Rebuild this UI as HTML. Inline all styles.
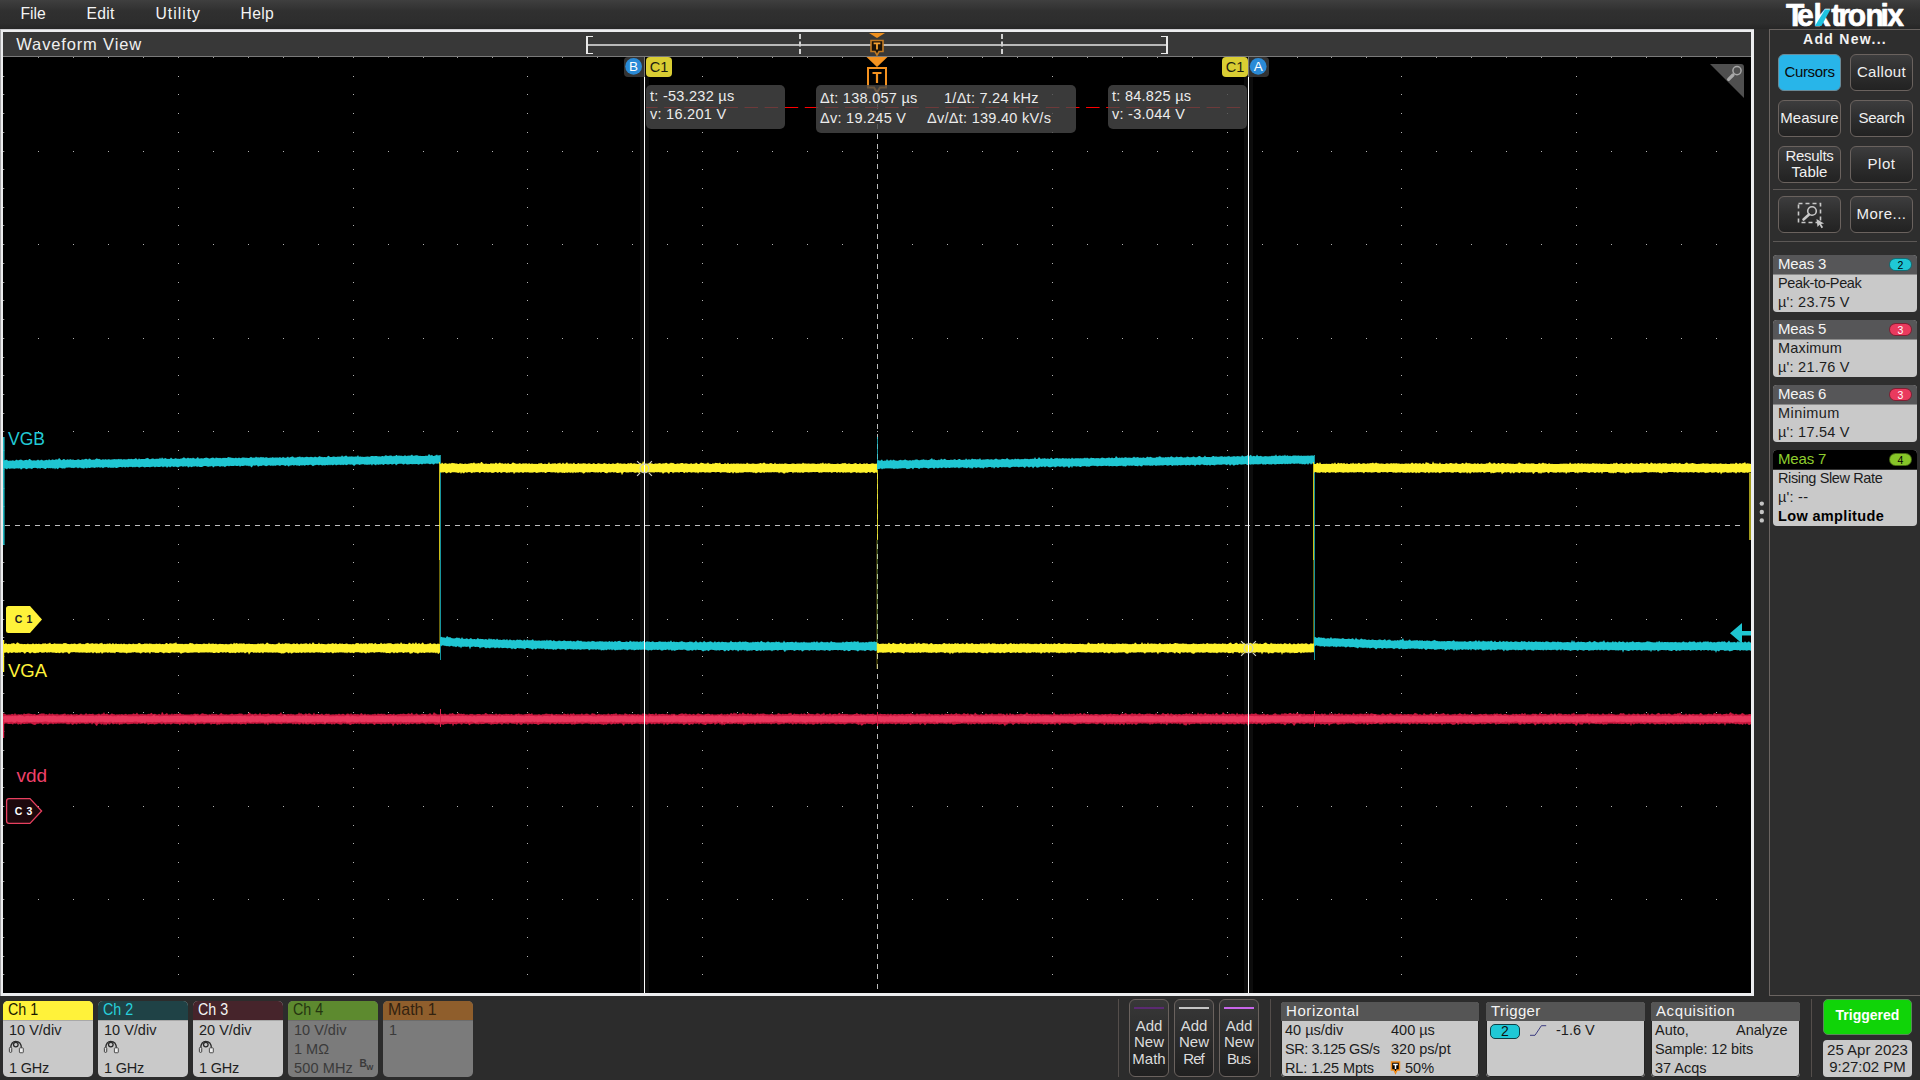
<!DOCTYPE html>
<html><head><meta charset="utf-8"><title>Scope</title>
<style>
*{box-sizing:border-box;margin:0;padding:0}
html,body{width:1920px;height:1080px;overflow:hidden;background:#2c2c2c}
body{position:relative;font-family:"Liberation Sans",sans-serif;color:#fff}
.abs{position:absolute}
#menubar{position:absolute;left:0;top:0;width:1920px;height:29px;background:linear-gradient(#3f3f3f,#303030 38%,#2d2d2d 80%,#262626)}
#menubar span{position:absolute;top:4.2px;font-size:15.7px;line-height:20px;color:#f4f4f4}
#wvframe{position:absolute;left:0;top:29px;width:1754px;height:967px;background:#ecedef;border-top:1px solid #cfcfd2;border-left:1px solid #a9a9ab}
#wvtitle{position:absolute;left:3px;top:32px;width:1748px;height:24px;background:#383838}
#wvtitleline{position:absolute;left:3px;top:56px;width:1748px;height:1px;background:#7a7a7a}
#wvtitle span{position:absolute;left:13.3px;top:2px;font-size:16.5px;line-height:20px;color:#f0f0f0;letter-spacing:.85px}
#plot{position:absolute;left:3px;top:57px;width:1748px;height:936px;background:#000;overflow:hidden}
#rpanel{position:absolute;left:1769px;top:29px;width:151px;height:967px;border-left:1px solid #6a6461;border-top:1px solid #6a6461;border-bottom:1px solid #6a6461;background:#2e2e2e}
.btn{position:absolute;width:63px;height:37px;border:1px solid #6a625e;border-radius:6px;background:linear-gradient(#3d3d3e,#2f2f2f 45%,#222);color:#f0f0f0;font-size:15px;text-align:center;line-height:34px}
.btn.two{line-height:16px;padding-top:.5px}
.btn.on{background:#28b5e9;color:#0a0a0a;border-color:#6a8a98}
.sep{position:absolute;left:1773px;width:144px;height:1px;background:#5c5856}
.meas{position:absolute;left:1773px;width:144px;border-radius:4px;background:#c9c9c9;overflow:hidden;color:#1c1c1c;font-size:14.5px}
.meas .h{position:absolute;left:0;top:0;width:144px;height:20px;background:#565658;color:#f4f4f4;border-bottom:1px solid #8c8c8c}
.meas .h span{position:absolute;left:5px;top:0;line-height:18px;font-size:15px;letter-spacing:-.15px}
.meas .pill{position:absolute;left:116px;top:3px;width:23px;height:13px;border-radius:6.5px;border:1px solid rgba(0,0,0,.45);font-size:10.5px;line-height:12px;text-align:center;color:#000}
.meas .l{position:absolute;left:5px;line-height:18px;white-space:nowrap}
.chb{position:absolute;top:1001px;width:90px;height:76px;border-radius:5px;background:#c9c9c9;overflow:hidden;color:#1e1e1e;font-size:14.5px}
.chb .h{position:absolute;left:0;top:0;width:90px;height:19px}
.chb .h span{position:absolute;left:5.4px;top:-1px;line-height:19px;font-size:16.6px;transform:scaleX(.86);transform-origin:0 0;white-space:nowrap}
.chb .hl{position:absolute;left:0;top:19px;width:90px;height:1px;background:#a8a8a8}
.chb .l{position:absolute;left:6px;line-height:18px;white-space:nowrap}
.chb.dim{background:#7b7b7b;color:#3a3a3a}
.chb.dim .hl{background:#6c6c6c}
.addb{position:absolute;top:999px;width:40px;height:78px;border:1px solid #6a625e;border-radius:6px;background:linear-gradient(#383838,#2c2c2c 50%,#202020);color:#dcdcdc;font-size:15px;text-align:center;line-height:16.6px;padding-top:17.6px}
.addb i{position:absolute;left:4px;top:7px;width:30px;height:2px;display:block}
.vsep{position:absolute;top:999px;width:1px;height:78px;background:#544e4b}
.sb{position:absolute;top:1002px;height:75px;border-radius:4px;background:#c9c9c9;overflow:hidden;outline:1px solid #242424;outline-offset:-1px;color:#1c1c1c;font-size:14.5px}
.sb .h{position:absolute;left:0;top:0;width:100%;height:19px;background:#555;color:#f4f4f4}
.sb .h span{position:absolute;left:5px;top:0;line-height:18px;font-size:15px;letter-spacing:.6px}
.sb .l{position:absolute;line-height:18px;white-space:nowrap}
.ro{position:absolute;border-radius:5px;background:rgba(72,72,72,.8);color:#ececec;font-size:14.5px;letter-spacing:.27px;white-space:nowrap}
.ro span{position:absolute;line-height:18px}
</style></head><body>
<div id="menubar">
<span style="left:20.5px">File</span><span style="left:86.5px;letter-spacing:.3px">Edit</span><span style="left:155.5px;letter-spacing:1px">Utility</span><span style="left:240.5px;letter-spacing:.35px">Help</span>
</div>
<!-- logo -->
<svg class="abs" style="left:1780px;top:0" width="130" height="29" viewBox="1780 0 130 29">
<g font-family="Liberation Sans" font-weight="bold" font-size="30" fill="#fff" stroke="#fff" stroke-width=".7" stroke-linejoin="round"><text transform="translate(1786.0,26) scale(1,1.068)">T</text><text transform="translate(1796.9,26) scale(1,1.068)">e</text><text transform="translate(1813.5,26) scale(1,1.068)">k</text><text transform="translate(1831.2,26) scale(1,1.068)">t</text><text transform="translate(1838.5,26) scale(1,1.068)">r</text><text transform="translate(1847.7,26) scale(1,1.068)">o</text><text transform="translate(1865.4,26) scale(1,1.068)">n</text><text transform="translate(1880.4,26) scale(1,1.068)">i</text><text transform="translate(1887.3,26) scale(1,1.068)">x</text></g>
<polygon points="1814.9,26 1821.4,26 1830.4,9.5 1825,9.5" fill="#1fc3e0"/>
</svg>
<div id="wvframe"></div>
<div id="wvtitle"><span>Waveform View</span></div>
<div id="wvtitleline"></div>
<div id="rpanel"></div>
<div class="abs" style="left:1770px;top:31px;width:150px;text-align:center;font-weight:bold;font-size:14px;line-height:16px;letter-spacing:1.3px;color:#f2f2f2">Add New...</div>
<div class="btn on" style="left:1778px;top:54px"><span style="letter-spacing:-.35px">Cursors</span></div>
<div class="btn" style="left:1850px;top:54px"><span style="letter-spacing:.35px">Callout</span></div>
<div class="btn" style="left:1778px;top:100px">Measure</div>
<div class="btn" style="left:1850px;top:100px"><span style="letter-spacing:-.25px">Search</span></div>
<div class="btn two" style="left:1778px;top:146px"><span style="letter-spacing:-.3px">Results</span><br>Table</div>
<div class="btn" style="left:1850px;top:146px"><span style="letter-spacing:.5px">Plot</span></div>
<div class="sep" style="top:189px"></div>
<div class="btn" style="left:1778px;top:196px"><svg width="61" height="35" viewBox="0 0 61 35" style="position:absolute;left:0;top:0">
<rect x="19.5" y="6.5" width="22" height="19" fill="none" stroke="#c8c8c8" stroke-width="1.6" stroke-dasharray="4 3"/>
<circle cx="33" cy="14" r="4.3" fill="none" stroke="#c8c8c8" stroke-width="1.6"/>
<line x1="30" y1="17.5" x2="24.5" y2="22.5" stroke="#c8c8c8" stroke-width="2.6" stroke-linecap="round"/>
<path d="M37.5 22 l1 8 l2-2.2 l2 3.4 l1.6-.9 l-2-3.4 l3-.4 z" fill="#c8c8c8"/>
</svg></div>
<div class="btn" style="left:1850px;top:196px"><span style="letter-spacing:.45px">More...</span></div>
<div class="sep" style="top:241px"></div>

<div class="meas" style="top:255px;height:57px"><div class="h"><span>Meas 3</span></div><div class="pill" style="background:#1fc8d6">2</div>
<div class="l" style="top:19.3px;letter-spacing:-.37px">Peak-to-Peak</div><div class="l" style="top:38.4px;letter-spacing:.23px">µ': 23.75 V</div></div>
<div class="meas" style="top:320px;height:57px"><div class="h"><span>Meas 5</span></div><div class="pill" style="background:#ea3a5e;color:#fff">3</div>
<div class="l" style="top:19.3px;letter-spacing:.18px">Maximum</div><div class="l" style="top:38.4px;letter-spacing:.23px">µ': 21.76 V</div></div>
<div class="meas" style="top:385px;height:57px"><div class="h"><span>Meas 6</span></div><div class="pill" style="background:#ea3a5e;color:#fff">3</div>
<div class="l" style="top:19.3px;letter-spacing:.43px">Minimum</div><div class="l" style="top:38.4px;letter-spacing:.23px">µ': 17.54 V</div></div>
<div class="meas" style="top:450px;height:76px"><div class="h" style="background:#000;color:#8fcd2e;border-bottom-color:#333"><span>Meas 7</span></div><div class="pill" style="background:#86c428">4</div>
<div class="l" style="top:19.3px;letter-spacing:-.38px">Rising Slew Rate</div><div class="l" style="top:38.4px;letter-spacing:.23px">µ': --</div><div class="l" style="top:57.4px;font-weight:bold;color:#000;letter-spacing:.35px">Low amplitude</div></div>
<svg class="abs" style="left:1757px;top:499px" width="10" height="26"><circle cx="4.8" cy="4.6" r="2.2" fill="#c4c4c4"/><circle cx="4.8" cy="13" r="2.2" fill="#c4c4c4"/><circle cx="4.8" cy="21.4" r="2.2" fill="#c4c4c4"/></svg>
<svg class="abs" style="left:0;top:0" width="1920" height="1080" viewBox="0 0 1920 1080">
<defs><clipPath id="pc"><rect x="3" y="57" width="1748" height="936"/></clipPath></defs>
<rect x="3" y="57" width="1748" height="936" fill="#000"/>
<g clip-path="url(#pc)">
<path d="M38 151.5h1M73 151.5h1M108 151.5h1M143 151.5h1M178 151.5h1M213 151.5h1M248 151.5h1M283 151.5h1M318 151.5h1M353 151.5h1M388 151.5h1M423 151.5h1M457 151.5h1M492 151.5h1M527 151.5h1M562 151.5h1M597 151.5h1M632 151.5h1M667 151.5h1M702 151.5h1M737 151.5h1M772 151.5h1M807 151.5h1M842 151.5h1M877 151.5h1M912 151.5h1M947 151.5h1M982 151.5h1M1017 151.5h1M1052 151.5h1M1087 151.5h1M1122 151.5h1M1157 151.5h1M1192 151.5h1M1227 151.5h1M1262 151.5h1M1297 151.5h1M1331 151.5h1M1366 151.5h1M1401 151.5h1M1436 151.5h1M1471 151.5h1M1506 151.5h1M1541 151.5h1M1576 151.5h1M1611 151.5h1M1646 151.5h1M1681 151.5h1M1716 151.5h1M38 244.5h1M73 244.5h1M108 244.5h1M143 244.5h1M178 244.5h1M213 244.5h1M248 244.5h1M283 244.5h1M318 244.5h1M353 244.5h1M388 244.5h1M423 244.5h1M457 244.5h1M492 244.5h1M527 244.5h1M562 244.5h1M597 244.5h1M632 244.5h1M667 244.5h1M702 244.5h1M737 244.5h1M772 244.5h1M807 244.5h1M842 244.5h1M877 244.5h1M912 244.5h1M947 244.5h1M982 244.5h1M1017 244.5h1M1052 244.5h1M1087 244.5h1M1122 244.5h1M1157 244.5h1M1192 244.5h1M1227 244.5h1M1262 244.5h1M1297 244.5h1M1331 244.5h1M1366 244.5h1M1401 244.5h1M1436 244.5h1M1471 244.5h1M1506 244.5h1M1541 244.5h1M1576 244.5h1M1611 244.5h1M1646 244.5h1M1681 244.5h1M1716 244.5h1M38 338.5h1M73 338.5h1M108 338.5h1M143 338.5h1M178 338.5h1M213 338.5h1M248 338.5h1M283 338.5h1M318 338.5h1M353 338.5h1M388 338.5h1M423 338.5h1M457 338.5h1M492 338.5h1M527 338.5h1M562 338.5h1M597 338.5h1M632 338.5h1M667 338.5h1M702 338.5h1M737 338.5h1M772 338.5h1M807 338.5h1M842 338.5h1M877 338.5h1M912 338.5h1M947 338.5h1M982 338.5h1M1017 338.5h1M1052 338.5h1M1087 338.5h1M1122 338.5h1M1157 338.5h1M1192 338.5h1M1227 338.5h1M1262 338.5h1M1297 338.5h1M1331 338.5h1M1366 338.5h1M1401 338.5h1M1436 338.5h1M1471 338.5h1M1506 338.5h1M1541 338.5h1M1576 338.5h1M1611 338.5h1M1646 338.5h1M1681 338.5h1M1716 338.5h1M38 431.5h1M73 431.5h1M108 431.5h1M143 431.5h1M178 431.5h1M213 431.5h1M248 431.5h1M283 431.5h1M318 431.5h1M353 431.5h1M388 431.5h1M423 431.5h1M457 431.5h1M492 431.5h1M527 431.5h1M562 431.5h1M597 431.5h1M632 431.5h1M667 431.5h1M702 431.5h1M737 431.5h1M772 431.5h1M807 431.5h1M842 431.5h1M877 431.5h1M912 431.5h1M947 431.5h1M982 431.5h1M1017 431.5h1M1052 431.5h1M1087 431.5h1M1122 431.5h1M1157 431.5h1M1192 431.5h1M1227 431.5h1M1262 431.5h1M1297 431.5h1M1331 431.5h1M1366 431.5h1M1401 431.5h1M1436 431.5h1M1471 431.5h1M1506 431.5h1M1541 431.5h1M1576 431.5h1M1611 431.5h1M1646 431.5h1M1681 431.5h1M1716 431.5h1M38 619.5h1M73 619.5h1M108 619.5h1M143 619.5h1M178 619.5h1M213 619.5h1M248 619.5h1M283 619.5h1M318 619.5h1M353 619.5h1M388 619.5h1M423 619.5h1M457 619.5h1M492 619.5h1M527 619.5h1M562 619.5h1M597 619.5h1M632 619.5h1M667 619.5h1M702 619.5h1M737 619.5h1M772 619.5h1M807 619.5h1M842 619.5h1M877 619.5h1M912 619.5h1M947 619.5h1M982 619.5h1M1017 619.5h1M1052 619.5h1M1087 619.5h1M1122 619.5h1M1157 619.5h1M1192 619.5h1M1227 619.5h1M1262 619.5h1M1297 619.5h1M1331 619.5h1M1366 619.5h1M1401 619.5h1M1436 619.5h1M1471 619.5h1M1506 619.5h1M1541 619.5h1M1576 619.5h1M1611 619.5h1M1646 619.5h1M1681 619.5h1M1716 619.5h1M38 712.5h1M73 712.5h1M108 712.5h1M143 712.5h1M178 712.5h1M213 712.5h1M248 712.5h1M283 712.5h1M318 712.5h1M353 712.5h1M388 712.5h1M423 712.5h1M457 712.5h1M492 712.5h1M527 712.5h1M562 712.5h1M597 712.5h1M632 712.5h1M667 712.5h1M702 712.5h1M737 712.5h1M772 712.5h1M807 712.5h1M842 712.5h1M877 712.5h1M912 712.5h1M947 712.5h1M982 712.5h1M1017 712.5h1M1052 712.5h1M1087 712.5h1M1122 712.5h1M1157 712.5h1M1192 712.5h1M1227 712.5h1M1262 712.5h1M1297 712.5h1M1331 712.5h1M1366 712.5h1M1401 712.5h1M1436 712.5h1M1471 712.5h1M1506 712.5h1M1541 712.5h1M1576 712.5h1M1611 712.5h1M1646 712.5h1M1681 712.5h1M1716 712.5h1M38 806.5h1M73 806.5h1M108 806.5h1M143 806.5h1M178 806.5h1M213 806.5h1M248 806.5h1M283 806.5h1M318 806.5h1M353 806.5h1M388 806.5h1M423 806.5h1M457 806.5h1M492 806.5h1M527 806.5h1M562 806.5h1M597 806.5h1M632 806.5h1M667 806.5h1M702 806.5h1M737 806.5h1M772 806.5h1M807 806.5h1M842 806.5h1M877 806.5h1M912 806.5h1M947 806.5h1M982 806.5h1M1017 806.5h1M1052 806.5h1M1087 806.5h1M1122 806.5h1M1157 806.5h1M1192 806.5h1M1227 806.5h1M1262 806.5h1M1297 806.5h1M1331 806.5h1M1366 806.5h1M1401 806.5h1M1436 806.5h1M1471 806.5h1M1506 806.5h1M1541 806.5h1M1576 806.5h1M1611 806.5h1M1646 806.5h1M1681 806.5h1M1716 806.5h1M38 899.5h1M73 899.5h1M108 899.5h1M143 899.5h1M178 899.5h1M213 899.5h1M248 899.5h1M283 899.5h1M318 899.5h1M353 899.5h1M388 899.5h1M423 899.5h1M457 899.5h1M492 899.5h1M527 899.5h1M562 899.5h1M597 899.5h1M632 899.5h1M667 899.5h1M702 899.5h1M737 899.5h1M772 899.5h1M807 899.5h1M842 899.5h1M877 899.5h1M912 899.5h1M947 899.5h1M982 899.5h1M1017 899.5h1M1052 899.5h1M1087 899.5h1M1122 899.5h1M1157 899.5h1M1192 899.5h1M1227 899.5h1M1262 899.5h1M1297 899.5h1M1331 899.5h1M1366 899.5h1M1401 899.5h1M1436 899.5h1M1471 899.5h1M1506 899.5h1M1541 899.5h1M1576 899.5h1M1611 899.5h1M1646 899.5h1M1681 899.5h1M1716 899.5h1M178 76.5h1M178 94.5h1M178 113.5h1M178 132.5h1M178 169.5h1M178 188.5h1M178 207.5h1M178 225.5h1M178 263.5h1M178 282.5h1M178 300.5h1M178 319.5h1M178 357.5h1M178 375.5h1M178 394.5h1M178 413.5h1M178 450.5h1M178 469.5h1M178 488.5h1M178 506.5h1M178 544.5h1M178 562.5h1M178 581.5h1M178 600.5h1M178 637.5h1M178 656.5h1M178 675.5h1M178 693.5h1M178 731.5h1M178 750.5h1M178 768.5h1M178 787.5h1M178 825.5h1M178 843.5h1M178 862.5h1M178 881.5h1M178 918.5h1M178 937.5h1M178 956.5h1M178 974.5h1M353 76.5h1M353 94.5h1M353 113.5h1M353 132.5h1M353 169.5h1M353 188.5h1M353 207.5h1M353 225.5h1M353 263.5h1M353 282.5h1M353 300.5h1M353 319.5h1M353 357.5h1M353 375.5h1M353 394.5h1M353 413.5h1M353 450.5h1M353 469.5h1M353 488.5h1M353 506.5h1M353 544.5h1M353 562.5h1M353 581.5h1M353 600.5h1M353 637.5h1M353 656.5h1M353 675.5h1M353 693.5h1M353 731.5h1M353 750.5h1M353 768.5h1M353 787.5h1M353 825.5h1M353 843.5h1M353 862.5h1M353 881.5h1M353 918.5h1M353 937.5h1M353 956.5h1M353 974.5h1M527 76.5h1M527 94.5h1M527 113.5h1M527 132.5h1M527 169.5h1M527 188.5h1M527 207.5h1M527 225.5h1M527 263.5h1M527 282.5h1M527 300.5h1M527 319.5h1M527 357.5h1M527 375.5h1M527 394.5h1M527 413.5h1M527 450.5h1M527 469.5h1M527 488.5h1M527 506.5h1M527 544.5h1M527 562.5h1M527 581.5h1M527 600.5h1M527 637.5h1M527 656.5h1M527 675.5h1M527 693.5h1M527 731.5h1M527 750.5h1M527 768.5h1M527 787.5h1M527 825.5h1M527 843.5h1M527 862.5h1M527 881.5h1M527 918.5h1M527 937.5h1M527 956.5h1M527 974.5h1M702 76.5h1M702 94.5h1M702 113.5h1M702 132.5h1M702 169.5h1M702 188.5h1M702 207.5h1M702 225.5h1M702 263.5h1M702 282.5h1M702 300.5h1M702 319.5h1M702 357.5h1M702 375.5h1M702 394.5h1M702 413.5h1M702 450.5h1M702 469.5h1M702 488.5h1M702 506.5h1M702 544.5h1M702 562.5h1M702 581.5h1M702 600.5h1M702 637.5h1M702 656.5h1M702 675.5h1M702 693.5h1M702 731.5h1M702 750.5h1M702 768.5h1M702 787.5h1M702 825.5h1M702 843.5h1M702 862.5h1M702 881.5h1M702 918.5h1M702 937.5h1M702 956.5h1M702 974.5h1M1052 76.5h1M1052 94.5h1M1052 113.5h1M1052 132.5h1M1052 169.5h1M1052 188.5h1M1052 207.5h1M1052 225.5h1M1052 263.5h1M1052 282.5h1M1052 300.5h1M1052 319.5h1M1052 357.5h1M1052 375.5h1M1052 394.5h1M1052 413.5h1M1052 450.5h1M1052 469.5h1M1052 488.5h1M1052 506.5h1M1052 544.5h1M1052 562.5h1M1052 581.5h1M1052 600.5h1M1052 637.5h1M1052 656.5h1M1052 675.5h1M1052 693.5h1M1052 731.5h1M1052 750.5h1M1052 768.5h1M1052 787.5h1M1052 825.5h1M1052 843.5h1M1052 862.5h1M1052 881.5h1M1052 918.5h1M1052 937.5h1M1052 956.5h1M1052 974.5h1M1227 76.5h1M1227 94.5h1M1227 113.5h1M1227 132.5h1M1227 169.5h1M1227 188.5h1M1227 207.5h1M1227 225.5h1M1227 263.5h1M1227 282.5h1M1227 300.5h1M1227 319.5h1M1227 357.5h1M1227 375.5h1M1227 394.5h1M1227 413.5h1M1227 450.5h1M1227 469.5h1M1227 488.5h1M1227 506.5h1M1227 544.5h1M1227 562.5h1M1227 581.5h1M1227 600.5h1M1227 637.5h1M1227 656.5h1M1227 675.5h1M1227 693.5h1M1227 731.5h1M1227 750.5h1M1227 768.5h1M1227 787.5h1M1227 825.5h1M1227 843.5h1M1227 862.5h1M1227 881.5h1M1227 918.5h1M1227 937.5h1M1227 956.5h1M1227 974.5h1M1401 76.5h1M1401 94.5h1M1401 113.5h1M1401 132.5h1M1401 169.5h1M1401 188.5h1M1401 207.5h1M1401 225.5h1M1401 263.5h1M1401 282.5h1M1401 300.5h1M1401 319.5h1M1401 357.5h1M1401 375.5h1M1401 394.5h1M1401 413.5h1M1401 450.5h1M1401 469.5h1M1401 488.5h1M1401 506.5h1M1401 544.5h1M1401 562.5h1M1401 581.5h1M1401 600.5h1M1401 637.5h1M1401 656.5h1M1401 675.5h1M1401 693.5h1M1401 731.5h1M1401 750.5h1M1401 768.5h1M1401 787.5h1M1401 825.5h1M1401 843.5h1M1401 862.5h1M1401 881.5h1M1401 918.5h1M1401 937.5h1M1401 956.5h1M1401 974.5h1M1576 76.5h1M1576 94.5h1M1576 113.5h1M1576 132.5h1M1576 169.5h1M1576 188.5h1M1576 207.5h1M1576 225.5h1M1576 263.5h1M1576 282.5h1M1576 300.5h1M1576 319.5h1M1576 357.5h1M1576 375.5h1M1576 394.5h1M1576 413.5h1M1576 450.5h1M1576 469.5h1M1576 488.5h1M1576 506.5h1M1576 544.5h1M1576 562.5h1M1576 581.5h1M1576 600.5h1M1576 637.5h1M1576 656.5h1M1576 675.5h1M1576 693.5h1M1576 731.5h1M1576 750.5h1M1576 768.5h1M1576 787.5h1M1576 825.5h1M1576 843.5h1M1576 862.5h1M1576 881.5h1M1576 918.5h1M1576 937.5h1M1576 956.5h1M1576 974.5h1" stroke="#b4b4b4" stroke-width="1" fill="none"/>
<path d="M38 57.5h1M73 57.5h1M108 57.5h1M143 57.5h1M178 57.5h1M213 57.5h1M248 57.5h1M283 57.5h1M318 57.5h1M353 57.5h1M388 57.5h1M423 57.5h1M457 57.5h1M492 57.5h1M527 57.5h1M562 57.5h1M597 57.5h1M632 57.5h1M667 57.5h1M702 57.5h1M737 57.5h1M772 57.5h1M807 57.5h1M842 57.5h1M877 57.5h1M912 57.5h1M947 57.5h1M982 57.5h1M1017 57.5h1M1052 57.5h1M1087 57.5h1M1122 57.5h1M1157 57.5h1M1192 57.5h1M1227 57.5h1M1262 57.5h1M1297 57.5h1M1331 57.5h1M1366 57.5h1M1401 57.5h1M1436 57.5h1M1471 57.5h1M1506 57.5h1M1541 57.5h1M1576 57.5h1M1611 57.5h1M1646 57.5h1M1681 57.5h1M1716 57.5h1M3 76.5h1.3M3 94.5h1.3M3 113.5h1.3M3 132.5h1.3M3 151.5h1.3M3 169.5h1.3M3 188.5h1.3M3 207.5h1.3M3 225.5h1.3M3 244.5h1.3M3 263.5h1.3M3 282.5h1.3M3 300.5h1.3M3 319.5h1.3M3 338.5h1.3M3 357.5h1.3M3 375.5h1.3M3 394.5h1.3M3 413.5h1.3M3 431.5h1.3M3 450.5h1.3M3 469.5h1.3M3 488.5h1.3M3 506.5h1.3M3 525.5h1.3M3 544.5h1.3M3 562.5h1.3M3 581.5h1.3M3 600.5h1.3M3 619.5h1.3M3 637.5h1.3M3 656.5h1.3M3 675.5h1.3M3 693.5h1.3M3 712.5h1.3M3 731.5h1.3M3 750.5h1.3M3 768.5h1.3M3 787.5h1.3M3 806.5h1.3M3 825.5h1.3M3 843.5h1.3M3 862.5h1.3M3 881.5h1.3M3 899.5h1.3M3 918.5h1.3M3 937.5h1.3M3 956.5h1.3M3 974.5h1.3" stroke="#9a9a9a" stroke-width="1" fill="none"/>
<rect x="640" y="77" width="9" height="916" fill="#0c0c0c"/><rect x="1244" y="77" width="9" height="916" fill="#0c0c0c"/>
<path d="M5 525.5H1741" stroke="#bdbdbd" stroke-width="1" stroke-dasharray="5 5" fill="none"/>
<path d="M877.5 94V993" stroke="#bdbdbd" stroke-width="1" stroke-dasharray="5 5" fill="none"/>
<path d="M3 460.8L4 460.3L5 460.3L6 459.8L7 459.8L8 460.7L9 460.7L10 460.5L11 460.7L12 460.6L13 460.3L14 460.8L15 460.8L16 459.8L17 459.8L18 460.4L19 460.1L20 459.8L21 459.5L22 460.0L23 460.6L24 460.4L25 460.1L26 460.1L27 459.8L28 460.5L29 459.1L30 459.1L31 459.9L32 460.4L33 460.4L34 460.2L35 460.6L36 460.5L37 460.3L38 459.6L39 460.3L40 460.5L41 459.7L42 459.7L43 460.4L44 460.4L45 460.3L46 460.1L47 459.8L48 460.4L49 458.9L50 460.1L51 460.2L52 459.4L53 459.6L54 460.0L55 459.8L56 459.3L57 459.5L58 459.5L59 458.0L60 458.7L61 460.1L62 460.3L63 459.3L64 459.0L65 459.4L66 460.3L67 459.2L68 459.4L69 459.8L70 459.3L71 459.3L72 459.9L73 459.2L74 460.1L75 459.9L76 460.1L77 459.8L78 459.2L79 459.5L80 459.9L81 459.9L82 459.2L83 459.5L84 459.6L85 458.9L86 458.7L87 459.1L88 459.8L89 458.5L90 458.8L91 459.4L92 459.9L93 459.6L94 459.7L95 459.5L96 458.8L97 458.3L98 459.2L99 458.8L100 459.3L101 459.7L102 459.8L103 459.1L104 459.8L105 459.3L106 459.3L107 459.8L108 459.3L109 459.2L110 459.6L111 459.8L112 459.3L113 459.6L114 459.0L115 459.2L116 459.3L117 459.3L118 459.2L119 458.8L120 459.6L121 458.8L122 459.6L123 459.6L124 458.9L125 459.5L126 459.3L127 459.5L128 459.1L129 458.8L130 459.2L131 458.8L132 459.0L133 459.3L134 459.1L135 458.7L136 458.1L137 459.3L138 459.4L139 458.3L140 459.3L141 458.9L142 459.1L143 458.9L144 459.1L145 459.0L146 458.3L147 458.2L148 457.8L149 459.0L150 459.3L151 459.0L152 458.6L153 458.5L154 458.7L155 459.2L156 458.6L157 459.1L158 458.6L159 459.1L160 457.6L161 459.0L162 457.2L163 458.5L164 458.8L165 458.1L166 458.3L167 459.0L168 458.7L169 458.9L170 458.7L171 457.4L172 458.6L173 458.9L174 458.7L175 458.6L176 458.1L177 459.0L178 458.5L179 458.9L180 458.8L181 458.6L182 458.6L183 457.8L184 457.3L185 457.9L186 458.4L187 458.3L188 457.6L189 458.3L190 458.2L191 457.9L192 458.4L193 457.4L194 458.3L195 458.4L196 458.8L197 457.7L198 457.0L199 458.8L200 458.2L201 458.6L202 457.9L203 458.7L204 458.1L205 458.1L206 457.6L207 457.8L208 458.1L209 458.4L210 458.5L211 457.9L212 457.8L213 457.4L214 458.0L215 458.5L216 457.2L217 458.0L218 457.8L219 458.3L220 457.7L221 458.3L222 458.2L223 457.8L224 457.9L225 457.8L226 458.0L227 458.1L228 456.9L229 457.2L230 457.5L231 457.6L232 458.0L233 457.7L234 458.2L235 458.1L236 457.5L237 458.2L238 458.1L239 457.6L240 458.1L241 458.3L242 457.5L243 457.4L244 457.5L245 457.7L246 457.8L247 457.7L248 458.0L249 458.1L250 457.5L251 456.7L252 457.5L253 457.8L254 457.5L255 457.7L256 456.5L257 457.5L258 457.2L259 457.5L260 457.6L261 456.8L262 457.6L263 457.1L264 457.6L265 457.8L266 457.1L267 457.4L268 457.7L269 457.9L270 457.6L271 457.7L272 457.4L273 457.0L274 457.9L275 457.3L276 457.8L277 457.2L278 457.8L279 457.5L280 457.0L281 457.8L282 457.8L283 456.7L284 457.4L285 457.8L286 457.7L287 457.2L288 456.6L289 457.7L290 457.3L291 457.0L292 456.4L293 456.6L294 457.4L295 457.6L296 457.4L297 457.3L298 456.8L299 457.0L300 456.2L301 457.4L302 456.7L303 457.3L304 457.2L305 457.3L306 456.7L307 456.8L308 456.9L309 457.3L310 457.0L311 456.7L312 457.1L313 457.3L314 457.2L315 456.4L316 457.0L317 457.2L318 457.2L319 456.3L320 456.2L321 457.0L322 456.7L323 457.2L324 456.9L325 456.9L326 457.3L327 457.1L328 455.8L329 456.0L330 456.9L331 457.1L332 456.9L333 456.6L334 456.6L335 456.8L336 457.0L337 456.7L338 456.6L339 456.8L340 456.6L341 456.7L342 455.2L343 456.5L344 456.4L345 456.1L346 455.6L347 456.1L348 456.9L349 456.3L350 456.7L351 456.2L352 456.6L353 456.6L354 456.7L355 456.4L356 456.6L357 456.6L358 455.0L359 456.9L360 456.2L361 456.8L362 456.8L363 456.8L364 456.9L365 456.8L366 456.7L367 456.6L368 456.6L369 456.8L370 456.8L371 456.1L372 455.9L373 455.9L374 456.2L375 456.1L376 456.1L377 455.9L378 456.5L379 456.2L380 456.5L381 456.4L382 456.1L383 456.0L384 456.4L385 455.5L386 455.3L387 455.8L388 455.9L389 455.7L390 455.4L391 455.4L392 455.7L393 456.5L394 455.6L395 456.3L396 455.1L397 455.1L398 456.2L399 454.9L400 456.2L401 455.3L402 456.3L403 455.7L404 456.2L405 454.8L406 456.3L407 455.7L408 455.7L409 455.6L410 455.8L411 455.2L412 454.6L413 455.8L414 455.8L415 455.5L416 455.2L417 455.2L418 455.6L419 456.0L420 455.7L421 456.1L422 456.1L423 456.0L424 455.9L425 456.1L426 455.4L427 456.0L428 455.5L429 453.8L430 455.3L431 455.6L432 454.7L433 456.0L434 455.9L435 455.6L436 455.2L437 454.6L438 455.7L439 455.1L440 455.4L440 463.7L439 463.6L438 463.4L437 463.7L436 463.5L435 463.4L434 464.6L433 464.5L432 463.4L431 464.0L430 464.2L429 464.0L428 463.6L427 463.8L426 463.5L425 464.3L424 463.5L423 463.9L422 464.4L421 463.9L420 463.8L419 464.8L418 464.6L417 464.1L416 464.0L415 464.2L414 463.9L413 464.3L412 464.2L411 463.9L410 464.1L409 464.5L408 464.2L407 464.8L406 463.8L405 463.8L404 464.4L403 464.5L402 463.8L401 463.8L400 463.7L399 463.8L398 463.9L397 464.6L396 465.5L395 463.8L394 464.1L393 464.3L392 464.7L391 464.0L390 464.1L389 464.4L388 464.4L387 464.5L386 464.0L385 464.1L384 464.7L383 464.9L382 463.9L381 464.4L380 464.6L379 464.5L378 464.9L377 464.0L376 465.4L375 464.7L374 464.5L373 464.1L372 465.7L371 464.3L370 464.5L369 464.8L368 464.4L367 465.1L366 464.5L365 464.7L364 464.4L363 464.1L362 464.5L361 464.3L360 464.9L359 464.7L358 464.3L357 464.6L356 464.3L355 465.3L354 466.0L353 465.1L352 464.5L351 464.5L350 464.7L349 464.3L348 464.4L347 465.0L346 465.2L345 464.4L344 464.8L343 465.3L342 464.4L341 465.3L340 464.8L339 464.7L338 464.8L337 465.0L336 465.5L335 464.6L334 464.8L333 465.2L332 465.2L331 464.6L330 465.4L329 464.6L328 465.6L327 464.9L326 465.1L325 465.8L324 464.9L323 465.4L322 465.5L321 465.1L320 464.8L319 465.6L318 465.1L317 464.8L316 465.1L315 465.2L314 465.4L313 466.3L312 465.4L311 464.7L310 464.7L309 464.9L308 465.6L307 464.9L306 464.9L305 465.8L304 465.4L303 465.0L302 465.8L301 464.9L300 465.7L299 466.1L298 465.2L297 465.8L296 465.2L295 465.0L294 465.8L293 465.3L292 465.1L291 465.7L290 465.3L289 466.6L288 466.3L287 465.0L286 465.8L285 466.1L284 465.3L283 465.2L282 465.1L281 465.2L280 466.0L279 465.4L278 465.2L277 465.2L276 465.6L275 465.9L274 465.2L273 466.2L272 465.3L271 466.1L270 465.5L269 465.2L268 465.4L267 466.0L266 466.3L265 465.7L264 465.4L263 465.3L262 465.7L261 465.9L260 465.8L259 466.3L258 466.7L257 465.3L256 465.3L255 465.7L254 465.6L253 465.6L252 467.2L251 467.2L250 465.4L249 466.6L248 465.4L247 465.9L246 465.5L245 465.5L244 465.7L243 465.9L242 466.0L241 465.7L240 467.0L239 465.6L238 465.9L237 466.0L236 466.1L235 465.6L234 465.9L233 466.1L232 466.0L231 466.1L230 465.7L229 466.4L228 465.7L227 466.0L226 466.2L225 467.3L224 466.6L223 466.2L222 466.5L221 466.1L220 467.3L219 466.0L218 466.3L217 465.9L216 466.6L215 466.1L214 467.0L213 467.6L212 465.8L211 466.4L210 466.3L209 466.7L208 466.7L207 466.4L206 465.9L205 465.9L204 466.1L203 466.4L202 466.9L201 466.9L200 467.1L199 466.7L198 466.2L197 467.2L196 466.1L195 466.4L194 466.4L193 466.6L192 467.1L191 467.2L190 466.2L189 467.2L188 467.4L187 466.1L186 466.6L185 466.6L184 466.2L183 467.1L182 466.2L181 466.3L180 466.6L179 466.8L178 467.4L177 467.0L176 466.7L175 466.5L174 466.9L173 466.8L172 466.3L171 466.7L170 467.6L169 466.5L168 466.7L167 467.9L166 466.6L165 466.7L164 466.6L163 467.6L162 466.5L161 466.4L160 467.0L159 467.0L158 467.0L157 466.7L156 466.8L155 467.4L154 466.8L153 466.5L152 467.0L151 466.8L150 467.5L149 467.0L148 467.0L147 466.9L146 466.9L145 467.5L144 467.2L143 466.8L142 466.7L141 467.0L140 467.3L139 467.7L138 466.7L137 467.0L136 466.7L135 467.4L134 466.8L133 467.6L132 466.9L131 466.8L130 467.0L129 466.8L128 467.7L127 466.8L126 467.2L125 467.8L124 466.8L123 467.3L122 467.4L121 466.9L120 466.9L119 467.2L118 467.4L117 467.9L116 468.1L115 467.6L114 467.5L113 467.9L112 467.4L111 468.0L110 467.5L109 467.4L108 467.9L107 467.0L106 467.2L105 467.2L104 467.6L103 468.2L102 467.6L101 467.3L100 468.0L99 467.1L98 467.5L97 467.4L96 467.2L95 468.0L94 467.7L93 467.4L92 467.5L91 467.4L90 467.9L89 467.9L88 467.4L87 468.5L86 468.0L85 467.6L84 469.1L83 467.9L82 468.4L81 467.7L80 467.7L79 467.5L78 468.5L77 467.6L76 467.6L75 467.6L74 468.3L73 467.8L72 468.1L71 467.8L70 467.5L69 467.6L68 467.6L67 467.7L66 467.5L65 468.7L64 468.3L63 468.6L62 468.5L61 468.0L60 467.8L59 467.7L58 469.3L57 468.8L56 468.0L55 469.4L54 467.7L53 468.9L52 467.8L51 468.6L50 468.0L49 468.2L48 468.2L47 467.8L46 468.9L45 469.0L44 468.6L43 468.3L42 467.9L41 468.0L40 469.1L39 467.8L38 468.7L37 468.2L36 467.9L35 467.8L34 468.0L33 468.1L32 469.3L31 468.6L30 468.6L29 468.2L28 468.4L27 469.1L26 469.2L25 468.3L24 468.3L23 468.3L22 468.7L21 469.8L20 468.2L19 468.4L18 468.5L17 468.3L16 468.6L15 468.6L14 469.0L13 468.3L12 468.8L11 468.2L10 469.0L9 468.4L8 468.2L7 469.4L6 468.8L5 468.4L4 468.3L3 468.6ZM440 637.4L441 637.0L442 636.8L443 637.8L444 637.1L445 638.1L446 637.6L447 636.0L448 636.7L449 637.4L450 637.1L451 637.8L452 638.2L453 638.3L454 638.5L455 638.3L456 638.1L457 637.3L458 638.2L459 637.4L460 638.4L461 638.8L462 637.0L463 638.7L464 638.7L465 639.0L466 638.5L467 638.3L468 639.1L469 639.2L470 638.5L471 637.9L472 639.0L473 639.3L474 639.1L475 639.0L476 639.5L477 638.7L478 637.7L479 639.2L480 638.7L481 638.9L482 638.9L483 638.9L484 639.4L485 639.2L486 639.1L487 639.4L488 639.8L489 638.1L490 639.4L491 638.4L492 639.6L493 639.3L494 638.9L495 639.6L496 639.8L497 638.6L498 639.4L499 639.9L500 639.4L501 639.9L502 640.1L503 639.6L504 639.4L505 639.5L506 640.2L507 638.7L508 640.4L509 639.9L510 639.2L511 639.9L512 640.3L513 640.2L514 639.8L515 640.6L516 640.2L517 639.5L518 639.8L519 640.0L520 639.6L521 640.1L522 640.3L523 640.7L524 639.5L525 639.9L526 640.8L527 639.3L528 640.0L529 640.4L530 639.9L531 640.5L532 639.7L533 639.3L534 640.8L535 640.6L536 640.6L537 640.7L538 640.6L539 640.6L540 640.4L541 641.1L542 640.3L543 640.7L544 640.3L545 640.6L546 640.8L547 639.5L548 641.1L549 640.0L550 640.6L551 639.8L552 641.3L553 640.7L554 639.9L555 641.3L556 640.9L557 641.4L558 640.8L559 640.7L560 640.5L561 641.2L562 641.1L563 641.0L564 640.2L565 640.8L566 641.1L567 641.2L568 640.8L569 641.2L570 640.7L571 640.8L572 641.4L573 641.2L574 641.1L575 641.4L576 641.5L577 640.6L578 640.6L579 640.8L580 641.3L581 640.5L582 641.5L583 641.5L584 641.4L585 641.6L586 641.7L587 641.7L588 641.3L589 641.4L590 641.6L591 641.7L592 640.8L593 641.3L594 641.1L595 641.8L596 641.8L597 641.4L598 641.5L599 641.6L600 641.1L601 641.5L602 641.3L603 641.4L604 641.8L605 641.6L606 641.6L607 641.6L608 641.9L609 641.0L610 641.3L611 641.9L612 640.9L613 642.0L614 641.7L615 641.1L616 641.5L617 641.7L618 641.1L619 641.1L620 640.7L621 641.7L622 641.9L623 641.9L624 642.1L625 641.9L626 641.4L627 641.4L628 641.9L629 642.0L630 640.6L631 641.2L632 641.7L633 641.4L634 641.3L635 641.8L636 641.5L637 641.5L638 641.5L639 642.2L640 641.3L641 641.5L642 642.0L643 641.1L644 641.1L645 641.9L646 642.2L647 640.8L648 641.9L649 641.2L650 641.9L651 642.1L652 641.4L653 641.3L654 642.1L655 642.2L656 642.0L657 642.1L658 642.0L659 641.2L660 641.6L661 641.4L662 641.9L663 641.6L664 642.1L665 641.6L666 641.8L667 642.3L668 641.5L669 641.7L670 641.8L671 640.2L672 642.1L673 641.9L674 641.2L675 642.3L676 641.8L677 642.0L678 642.0L679 642.3L680 641.5L681 641.8L682 640.8L683 642.1L684 641.7L685 642.2L686 642.3L687 642.3L688 642.1L689 642.0L690 641.3L691 642.1L692 641.4L693 642.4L694 642.3L695 642.0L696 640.5L697 642.2L698 642.3L699 642.4L700 641.5L701 641.9L702 642.2L703 642.2L704 640.8L705 641.8L706 642.3L707 642.3L708 641.8L709 642.0L710 641.3L711 641.5L712 641.9L713 642.4L714 642.3L715 641.0L716 642.5L717 642.1L718 642.0L719 641.6L720 642.2L721 642.2L722 641.6L723 642.0L724 641.9L725 642.2L726 641.8L727 642.4L728 642.2L729 642.4L730 642.0L731 640.4L732 641.9L733 642.1L734 642.2L735 642.0L736 641.7L737 642.5L738 641.8L739 642.0L740 641.1L741 642.2L742 642.0L743 641.6L744 642.0L745 641.5L746 641.5L747 642.0L748 642.0L749 642.4L750 642.4L751 642.3L752 642.4L753 641.4L754 642.5L755 641.7L756 641.9L757 641.9L758 641.6L759 642.3L760 642.3L761 640.7L762 641.3L763 642.3L764 642.1L765 642.4L766 642.5L767 641.7L768 641.5L769 641.8L770 642.4L771 642.2L772 641.9L773 642.3L774 642.0L775 642.6L776 641.3L777 642.0L778 642.1L779 641.6L780 642.5L781 642.5L782 642.4L783 642.4L784 640.5L785 642.2L786 642.5L787 642.0L788 642.0L789 642.3L790 641.9L791 642.0L792 641.8L793 641.9L794 642.4L795 642.3L796 641.3L797 642.5L798 642.2L799 642.4L800 642.5L801 642.2L802 642.2L803 642.5L804 641.6L805 642.5L806 642.2L807 642.4L808 642.5L809 642.5L810 642.5L811 642.5L812 641.8L813 642.6L814 641.2L815 642.3L816 642.3L817 641.1L818 642.5L819 642.6L820 642.6L821 641.5L822 641.8L823 642.0L824 642.4L825 642.0L826 642.4L827 641.8L828 642.2L829 642.4L830 642.5L831 641.0L832 641.7L833 642.3L834 642.1L835 642.2L836 642.6L837 642.4L838 642.4L839 642.6L840 642.4L841 642.5L842 642.5L843 641.4L844 642.4L845 642.3L846 641.7L847 641.6L848 641.9L849 642.0L850 642.1L851 641.8L852 641.4L853 642.6L854 641.1L855 641.7L856 641.4L857 641.9L858 640.8L859 642.4L860 642.4L861 642.2L862 642.4L863 641.9L864 642.4L865 642.4L866 642.0L867 642.2L868 642.6L869 641.4L870 641.9L871 641.5L872 641.8L873 642.0L874 641.6L875 641.4L876 642.3L877 641.8L877 650.6L876 650.7L875 651.3L874 650.0L873 650.6L872 650.3L871 651.0L870 650.4L869 650.2L868 649.9L867 649.9L866 650.4L865 651.3L864 650.4L863 650.6L862 650.6L861 650.3L860 650.3L859 650.5L858 651.6L857 650.9L856 650.3L855 650.6L854 649.9L853 650.3L852 650.1L851 650.1L850 650.9L849 650.9L848 651.3L847 650.1L846 650.5L845 650.8L844 651.3L843 649.9L842 650.3L841 650.2L840 650.0L839 649.9L838 650.4L837 649.9L836 650.1L835 650.1L834 649.9L833 650.3L832 650.3L831 650.0L830 651.3L829 650.5L828 650.6L827 649.9L826 650.1L825 651.0L824 650.2L823 650.5L822 650.0L821 650.2L820 650.1L819 651.0L818 650.0L817 650.9L816 650.2L815 650.0L814 650.0L813 650.6L812 650.1L811 650.1L810 650.6L809 650.7L808 649.9L807 650.2L806 650.0L805 650.3L804 650.2L803 651.3L802 651.5L801 650.0L800 650.3L799 650.6L798 650.1L797 650.0L796 650.3L795 650.7L794 651.0L793 650.0L792 650.2L791 650.1L790 650.0L789 650.2L788 650.0L787 650.5L786 650.3L785 652.3L784 651.0L783 649.8L782 649.9L781 650.1L780 650.1L779 650.1L778 650.7L777 650.3L776 650.1L775 649.9L774 650.4L773 650.3L772 651.5L771 650.3L770 650.5L769 650.0L768 650.4L767 650.3L766 650.4L765 649.9L764 651.0L763 650.4L762 649.9L761 651.2L760 650.6L759 650.2L758 650.7L757 651.1L756 650.9L755 649.9L754 650.1L753 649.9L752 650.7L751 650.3L750 650.4L749 650.7L748 650.4L747 651.5L746 650.1L745 650.6L744 650.2L743 649.8L742 650.2L741 650.4L740 649.9L739 650.4L738 651.7L737 650.0L736 650.5L735 650.0L734 649.7L733 650.7L732 650.3L731 650.0L730 649.7L729 650.9L728 651.1L727 650.0L726 650.6L725 651.6L724 651.0L723 650.1L722 650.0L721 650.0L720 650.2L719 650.8L718 649.7L717 650.8L716 650.2L715 650.5L714 649.9L713 649.9L712 649.8L711 649.7L710 649.9L709 650.7L708 651.2L707 649.8L706 650.8L705 650.6L704 651.1L703 651.5L702 650.8L701 650.0L700 649.9L699 649.9L698 649.9L697 649.6L696 650.4L695 650.1L694 649.8L693 650.6L692 650.8L691 649.9L690 650.2L689 650.7L688 650.5L687 650.7L686 650.1L685 649.8L684 649.6L683 649.7L682 650.1L681 649.8L680 649.9L679 649.6L678 649.9L677 650.1L676 650.3L675 650.7L674 650.7L673 650.0L672 650.9L671 650.1L670 649.5L669 650.4L668 649.6L667 649.6L666 650.1L665 650.1L664 649.7L663 650.6L662 650.5L661 650.4L660 649.5L659 649.7L658 650.1L657 649.9L656 649.6L655 649.9L654 649.8L653 649.7L652 650.3L651 650.5L650 649.7L649 650.4L648 650.5L647 650.1L646 649.8L645 649.7L644 649.5L643 649.7L642 649.5L641 649.9L640 649.4L639 649.7L638 649.9L637 649.6L636 650.0L635 650.0L634 650.6L633 649.6L632 650.2L631 649.6L630 649.6L629 649.6L628 650.0L627 650.4L626 649.4L625 650.0L624 649.3L623 649.4L622 649.7L621 649.8L620 650.2L619 649.6L618 650.2L617 649.8L616 650.2L615 650.5L614 649.7L613 649.6L612 650.4L611 649.2L610 649.7L609 649.7L608 649.2L607 649.9L606 650.2L605 649.5L604 650.4L603 650.0L602 650.2L601 650.5L600 649.2L599 650.1L598 649.3L597 649.2L596 649.9L595 649.3L594 649.4L593 649.6L592 649.5L591 649.3L590 649.7L589 650.5L588 649.1L587 649.2L586 649.0L585 649.5L584 649.3L583 649.6L582 649.0L581 649.9L580 649.4L579 649.4L578 649.1L577 649.8L576 649.5L575 649.3L574 649.4L573 649.7L572 649.0L571 649.5L570 648.8L569 649.1L568 649.3L567 648.8L566 650.4L565 649.6L564 649.2L563 649.0L562 649.2L561 649.2L560 649.6L559 648.8L558 648.7L557 649.0L556 649.9L555 649.3L554 649.6L553 649.9L552 648.7L551 649.4L550 648.7L549 649.4L548 649.1L547 648.7L546 649.2L545 649.4L544 648.4L543 648.6L542 648.9L541 648.4L540 648.5L539 648.7L538 648.3L537 648.5L536 649.5L535 649.0L534 648.6L533 649.8L532 649.4L531 648.7L530 648.5L529 648.5L528 648.1L527 648.1L526 648.1L525 649.5L524 648.8L523 648.4L522 648.6L521 648.2L520 648.2L519 648.6L518 648.1L517 647.9L516 649.3L515 649.0L514 648.8L513 648.3L512 649.5L511 648.2L510 648.3L509 647.7L508 648.5L507 648.2L506 648.1L505 647.8L504 648.0L503 648.0L502 648.2L501 647.5L500 647.7L499 648.4L498 647.5L497 647.8L496 647.8L495 648.6L494 647.5L493 647.6L492 647.7L491 647.6L490 648.4L489 647.9L488 647.7L487 647.8L486 648.5L485 647.7L484 647.2L483 647.0L482 647.7L481 647.3L480 648.8L479 647.1L478 647.0L477 646.7L476 646.9L475 647.1L474 646.6L473 646.6L472 647.1L471 646.7L470 649.5L469 646.7L468 646.6L467 647.1L466 646.8L465 646.7L464 646.4L463 646.9L462 646.5L461 648.4L460 646.4L459 647.6L458 646.1L457 646.4L456 647.3L455 646.4L454 646.5L453 646.6L452 646.0L451 645.8L450 646.5L449 646.6L448 645.9L447 646.3L446 646.0L445 645.7L444 645.7L443 645.3L442 645.6L441 646.4L440 645.1ZM877 460.8L878 460.4L879 460.1L880 460.9L881 460.0L882 459.6L883 460.9L884 460.7L885 460.6L886 460.8L887 459.1L888 460.4L889 460.4L890 460.3L891 459.6L892 460.7L893 459.8L894 459.8L895 460.4L896 460.4L897 460.7L898 460.7L899 460.3L900 460.0L901 459.7L902 460.5L903 459.9L904 460.3L905 459.3L906 459.9L907 460.3L908 460.6L909 460.6L910 459.9L911 460.6L912 460.5L913 459.7L914 460.5L915 459.6L916 459.8L917 459.3L918 460.1L919 460.3L920 460.2L921 459.7L922 459.7L923 459.5L924 459.2L925 460.2L926 459.4L927 460.2L928 460.0L929 460.1L930 459.4L931 458.9L932 458.1L933 460.0L934 458.9L935 460.0L936 460.0L937 460.2L938 460.1L939 459.6L940 460.3L941 458.4L942 459.3L943 459.8L944 458.9L945 458.8L946 459.8L947 459.9L948 459.9L949 459.9L950 460.0L951 459.4L952 460.0L953 459.7L954 459.6L955 459.1L956 460.1L957 460.0L958 459.6L959 459.1L960 458.9L961 459.9L962 459.7L963 460.0L964 459.6L965 459.9L966 458.2L967 459.4L968 459.7L969 459.1L970 459.8L971 459.5L972 458.4L973 459.1L974 459.2L975 458.9L976 459.3L977 459.4L978 459.1L979 459.6L980 458.0L981 459.7L982 459.7L983 459.6L984 459.6L985 459.4L986 459.3L987 459.3L988 459.1L989 459.4L990 459.6L991 459.3L992 459.3L993 459.7L994 459.6L995 459.1L996 458.4L997 459.0L998 459.4L999 459.4L1000 459.6L1001 459.5L1002 458.8L1003 459.1L1004 459.0L1005 459.3L1006 459.0L1007 458.1L1008 458.8L1009 459.5L1010 459.5L1011 459.4L1012 459.0L1013 459.3L1014 459.4L1015 458.4L1016 459.0L1017 459.2L1018 458.6L1019 459.3L1020 459.2L1021 459.3L1022 458.9L1023 459.3L1024 459.0L1025 458.5L1026 459.1L1027 458.8L1028 459.0L1029 459.2L1030 459.0L1031 458.8L1032 458.9L1033 458.6L1034 459.1L1035 457.0L1036 458.9L1037 458.9L1038 458.6L1039 457.0L1040 458.3L1041 459.1L1042 458.6L1043 458.6L1044 458.4L1045 458.0L1046 458.9L1047 458.5L1048 458.5L1049 458.7L1050 459.0L1051 457.6L1052 458.3L1053 459.0L1054 458.9L1055 457.9L1056 458.5L1057 457.8L1058 458.5L1059 458.5L1060 458.3L1061 458.8L1062 458.3L1063 458.0L1064 458.5L1065 458.5L1066 458.3L1067 458.4L1068 458.8L1069 458.1L1070 458.7L1071 458.8L1072 457.6L1073 458.4L1074 458.4L1075 458.5L1076 458.0L1077 458.6L1078 457.9L1079 458.4L1080 458.3L1081 458.3L1082 458.6L1083 458.3L1084 458.3L1085 457.5L1086 458.5L1087 457.5L1088 458.3L1089 458.4L1090 458.4L1091 457.6L1092 458.1L1093 458.1L1094 457.9L1095 458.5L1096 458.0L1097 458.2L1098 457.9L1099 458.2L1100 458.4L1101 457.9L1102 457.4L1103 457.8L1104 457.9L1105 458.2L1106 458.2L1107 457.8L1108 458.0L1109 457.2L1110 457.9L1111 458.3L1112 457.3L1113 458.3L1114 457.9L1115 458.0L1116 456.0L1117 456.9L1118 458.0L1119 457.8L1120 457.6L1121 458.2L1122 457.1L1123 458.2L1124 457.6L1125 457.4L1126 457.1L1127 458.0L1128 457.5L1129 457.8L1130 457.6L1131 458.1L1132 457.8L1133 457.5L1134 456.6L1135 457.4L1136 457.6L1137 457.3L1138 456.9L1139 457.8L1140 457.8L1141 457.5L1142 457.9L1143 457.2L1144 457.5L1145 457.9L1146 457.7L1147 456.8L1148 456.8L1149 457.5L1150 456.7L1151 457.0L1152 457.6L1153 457.7L1154 457.8L1155 457.8L1156 457.4L1157 456.8L1158 457.6L1159 456.2L1160 456.6L1161 456.8L1162 457.7L1163 456.9L1164 457.7L1165 457.3L1166 456.9L1167 457.4L1168 456.7L1169 457.2L1170 457.3L1171 456.3L1172 456.5L1173 457.3L1174 457.2L1175 457.4L1176 456.7L1177 456.4L1178 457.2L1179 457.0L1180 457.0L1181 456.6L1182 457.0L1183 457.4L1184 457.4L1185 457.3L1186 457.4L1187 456.6L1188 456.8L1189 457.0L1190 457.4L1191 457.1L1192 457.2L1193 456.6L1194 456.6L1195 457.2L1196 457.2L1197 457.3L1198 456.6L1199 455.9L1200 456.0L1201 456.9L1202 457.3L1203 457.2L1204 456.8L1205 455.6L1206 457.0L1207 456.9L1208 457.0L1209 456.9L1210 456.9L1211 457.2L1212 456.4L1213 456.1L1214 456.1L1215 457.1L1216 456.0L1217 457.0L1218 456.4L1219 457.0L1220 456.3L1221 456.4L1222 455.9L1223 456.7L1224 456.7L1225 456.3L1226 456.9L1227 456.2L1228 456.4L1229 455.8L1230 456.7L1231 456.8L1232 456.6L1233 456.4L1234 456.1L1235 456.5L1236 456.4L1237 456.3L1238 456.1L1239 456.5L1240 456.2L1241 456.7L1242 455.3L1243 455.9L1244 456.5L1245 456.3L1246 455.9L1247 455.8L1248 454.8L1249 456.5L1250 455.3L1251 454.8L1252 456.5L1253 456.1L1254 455.8L1255 456.3L1256 456.3L1257 454.4L1258 456.0L1259 456.2L1260 456.1L1261 455.7L1262 456.5L1263 456.5L1264 456.6L1265 456.0L1266 456.2L1267 456.2L1268 456.4L1269 456.2L1270 456.2L1271 456.3L1272 455.5L1273 456.3L1274 455.5L1275 455.9L1276 454.3L1277 456.3L1278 456.1L1279 455.5L1280 455.6L1281 455.7L1282 456.0L1283 455.2L1284 456.0L1285 454.6L1286 456.2L1287 455.3L1288 455.6L1289 456.2L1290 455.6L1291 456.2L1292 456.0L1293 455.6L1294 455.6L1295 455.4L1296 455.6L1297 455.8L1298 455.5L1299 455.6L1300 456.0L1301 455.5L1302 455.8L1303 455.9L1304 455.4L1305 456.0L1306 455.4L1307 456.0L1308 455.2L1309 455.9L1310 455.4L1311 455.7L1312 455.3L1313 455.8L1314 455.6L1314 463.7L1313 463.6L1312 463.5L1311 464.7L1310 463.3L1309 463.5L1308 464.9L1307 463.4L1306 464.1L1305 464.5L1304 464.2L1303 464.1L1302 464.6L1301 463.4L1300 464.2L1299 463.5L1298 463.4L1297 463.7L1296 463.5L1295 463.7L1294 464.1L1293 463.5L1292 463.5L1291 463.8L1290 464.2L1289 463.5L1288 464.3L1287 464.1L1286 463.8L1285 464.4L1284 463.6L1283 464.1L1282 464.3L1281 464.1L1280 464.0L1279 464.2L1278 464.1L1277 463.9L1276 464.5L1275 464.6L1274 464.3L1273 463.8L1272 464.6L1271 464.4L1270 464.2L1269 464.5L1268 464.0L1267 464.0L1266 464.4L1265 464.8L1264 464.1L1263 465.0L1262 463.8L1261 463.8L1260 464.6L1259 464.1L1258 464.8L1257 463.9L1256 464.4L1255 463.9L1254 464.5L1253 464.5L1252 464.2L1251 464.6L1250 464.8L1249 463.9L1248 464.9L1247 464.9L1246 464.0L1245 464.1L1244 464.6L1243 464.3L1242 464.7L1241 464.4L1240 464.6L1239 464.1L1238 465.3L1237 464.7L1236 464.7L1235 464.9L1234 465.7L1233 465.2L1232 464.2L1231 465.1L1230 465.7L1229 464.4L1228 464.2L1227 465.2L1226 464.8L1225 464.4L1224 464.3L1223 464.6L1222 464.5L1221 465.1L1220 464.5L1219 465.1L1218 464.3L1217 465.0L1216 464.4L1215 465.5L1214 465.3L1213 465.0L1212 464.9L1211 464.8L1210 466.0L1209 464.7L1208 465.0L1207 465.6L1206 465.1L1205 464.9L1204 465.3L1203 464.5L1202 464.5L1201 464.6L1200 465.5L1199 464.9L1198 464.7L1197 464.8L1196 464.9L1195 466.4L1194 464.7L1193 465.2L1192 464.8L1191 464.7L1190 465.6L1189 465.2L1188 465.0L1187 464.9L1186 465.8L1185 465.0L1184 464.8L1183 465.3L1182 465.1L1181 465.5L1180 465.3L1179 465.1L1178 465.5L1177 465.8L1176 465.1L1175 465.7L1174 464.9L1173 465.7L1172 466.0L1171 464.9L1170 465.1L1169 465.4L1168 465.4L1167 465.8L1166 465.0L1165 464.9L1164 465.2L1163 465.4L1162 465.5L1161 465.2L1160 465.5L1159 465.5L1158 465.5L1157 465.6L1156 465.9L1155 465.5L1154 465.1L1153 465.8L1152 465.7L1151 465.4L1150 466.0L1149 465.3L1148 465.5L1147 465.6L1146 465.5L1145 465.6L1144 465.3L1143 465.2L1142 466.4L1141 466.3L1140 465.9L1139 465.3L1138 466.6L1137 465.9L1136 466.0L1135 465.9L1134 465.5L1133 465.4L1132 466.0L1131 465.6L1130 465.7L1129 465.7L1128 465.5L1127 465.5L1126 466.6L1125 466.5L1124 466.0L1123 466.4L1122 465.5L1121 465.9L1120 465.8L1119 466.0L1118 465.9L1117 466.5L1116 466.2L1115 465.9L1114 466.0L1113 466.3L1112 466.3L1111 465.9L1110 465.9L1109 466.5L1108 465.6L1107 465.9L1106 465.9L1105 465.8L1104 465.8L1103 466.0L1102 466.1L1101 466.2L1100 465.8L1099 465.9L1098 466.2L1097 466.4L1096 465.7L1095 466.0L1094 465.8L1093 465.8L1092 465.8L1091 466.1L1090 466.3L1089 467.1L1088 466.2L1087 466.8L1086 466.4L1085 466.1L1084 466.2L1083 466.2L1082 466.2L1081 466.9L1080 467.1L1079 466.5L1078 466.3L1077 466.5L1076 466.7L1075 466.0L1074 466.6L1073 466.0L1072 468.0L1071 466.0L1070 467.3L1069 468.0L1068 467.3L1067 466.1L1066 466.9L1065 466.6L1064 467.7L1063 466.4L1062 466.5L1061 466.6L1060 467.1L1059 466.4L1058 466.3L1057 466.5L1056 467.1L1055 467.6L1054 466.4L1053 466.7L1052 466.7L1051 467.3L1050 467.2L1049 467.2L1048 466.8L1047 466.3L1046 466.4L1045 467.6L1044 466.5L1043 466.5L1042 467.0L1041 466.7L1040 466.6L1039 467.5L1038 467.2L1037 468.1L1036 466.8L1035 466.5L1034 467.2L1033 468.6L1032 466.8L1031 466.7L1030 466.9L1029 467.8L1028 466.8L1027 466.6L1026 466.5L1025 468.1L1024 467.5L1023 466.8L1022 466.8L1021 467.0L1020 466.8L1019 467.5L1018 466.9L1017 466.8L1016 466.7L1015 466.9L1014 466.8L1013 466.8L1012 467.1L1011 467.2L1010 467.9L1009 467.4L1008 467.5L1007 466.8L1006 467.5L1005 467.0L1004 467.5L1003 466.8L1002 467.8L1001 466.9L1000 467.1L999 467.5L998 468.0L997 467.4L996 466.9L995 467.6L994 468.7L993 467.0L992 468.0L991 466.9L990 467.0L989 467.0L988 467.2L987 467.7L986 467.4L985 467.0L984 468.2L983 468.4L982 467.5L981 468.3L980 467.7L979 467.6L978 467.3L977 467.7L976 468.0L975 467.6L974 467.3L973 467.8L972 468.9L971 467.6L970 468.5L969 467.3L968 467.5L967 468.3L966 467.9L965 467.5L964 467.9L963 467.2L962 467.3L961 467.7L960 467.4L959 468.5L958 467.5L957 467.5L956 467.5L955 468.1L954 467.5L953 467.4L952 467.8L951 467.6L950 468.1L949 468.1L948 467.6L947 467.8L946 468.3L945 467.8L944 467.5L943 467.5L942 468.3L941 468.1L940 467.6L939 468.1L938 468.3L937 468.3L936 467.6L935 468.1L934 469.1L933 468.0L932 467.8L931 468.1L930 468.0L929 468.6L928 468.7L927 468.0L926 467.9L925 467.7L924 467.7L923 467.7L922 468.5L921 467.8L920 468.5L919 468.9L918 468.2L917 468.1L916 468.0L915 467.8L914 468.0L913 469.5L912 468.3L911 468.1L910 468.6L909 469.1L908 468.7L907 469.2L906 468.4L905 467.9L904 468.4L903 468.1L902 468.5L901 468.3L900 468.7L899 468.3L898 469.0L897 468.5L896 468.8L895 468.4L894 469.2L893 468.4L892 468.4L891 468.5L890 468.2L889 468.4L888 468.2L887 468.5L886 468.3L885 468.4L884 468.7L883 468.5L882 469.4L881 468.3L880 468.7L879 468.9L878 468.9L877 468.5ZM1314 637.5L1315 636.8L1316 637.6L1317 638.0L1318 637.6L1319 637.1L1320 637.8L1321 637.5L1322 637.8L1323 638.0L1324 637.4L1325 638.4L1326 638.4L1327 638.4L1328 637.9L1329 638.4L1330 638.6L1331 636.7L1332 638.8L1333 638.3L1334 638.6L1335 638.1L1336 638.6L1337 638.3L1338 638.4L1339 638.5L1340 638.7L1341 638.8L1342 638.5L1343 637.9L1344 638.8L1345 638.9L1346 638.9L1347 639.1L1348 638.8L1349 638.5L1350 639.1L1351 639.1L1352 638.5L1353 638.3L1354 639.5L1355 639.6L1356 637.5L1357 639.2L1358 639.3L1359 639.7L1360 639.5L1361 638.5L1362 638.7L1363 639.5L1364 639.2L1365 639.3L1366 639.6L1367 640.0L1368 639.7L1369 639.5L1370 640.1L1371 640.0L1372 639.5L1373 639.4L1374 640.1L1375 640.1L1376 639.9L1377 640.3L1378 640.1L1379 639.6L1380 639.4L1381 639.8L1382 640.2L1383 640.1L1384 639.8L1385 638.9L1386 640.4L1387 640.5L1388 639.7L1389 639.7L1390 639.6L1391 640.5L1392 640.7L1393 640.5L1394 640.7L1395 639.9L1396 640.7L1397 640.2L1398 640.0L1399 640.7L1400 639.6L1401 640.1L1402 639.6L1403 638.1L1404 640.5L1405 640.7L1406 640.4L1407 640.6L1408 640.7L1409 639.8L1410 639.6L1411 640.8L1412 640.8L1413 640.4L1414 640.5L1415 640.2L1416 640.4L1417 640.1L1418 640.5L1419 641.1L1420 639.8L1421 641.2L1422 639.8L1423 641.1L1424 641.0L1425 640.5L1426 641.2L1427 640.0L1428 641.1L1429 640.4L1430 641.1L1431 641.2L1432 641.1L1433 640.6L1434 640.2L1435 639.8L1436 641.1L1437 640.7L1438 641.2L1439 641.2L1440 641.3L1441 641.4L1442 641.0L1443 641.5L1444 641.1L1445 641.2L1446 641.5L1447 640.9L1448 641.0L1449 640.9L1450 641.1L1451 641.3L1452 641.3L1453 640.4L1454 640.3L1455 641.6L1456 641.5L1457 641.3L1458 641.5L1459 641.4L1460 641.6L1461 641.4L1462 641.6L1463 641.4L1464 641.6L1465 640.9L1466 641.7L1467 641.7L1468 641.8L1469 641.3L1470 641.1L1471 641.0L1472 641.7L1473 641.2L1474 641.4L1475 641.1L1476 640.1L1477 641.6L1478 641.4L1479 640.1L1480 641.8L1481 641.2L1482 641.7L1483 640.5L1484 641.2L1485 641.3L1486 641.6L1487 641.6L1488 641.2L1489 641.2L1490 641.5L1491 640.6L1492 640.9L1493 641.9L1494 641.8L1495 640.6L1496 642.0L1497 641.9L1498 642.0L1499 641.7L1500 640.6L1501 641.9L1502 641.8L1503 641.3L1504 640.9L1505 642.0L1506 641.2L1507 641.3L1508 641.6L1509 642.1L1510 641.8L1511 641.3L1512 641.7L1513 642.0L1514 641.9L1515 641.3L1516 641.5L1517 641.6L1518 641.9L1519 641.7L1520 642.2L1521 641.6L1522 640.8L1523 641.9L1524 641.0L1525 641.4L1526 641.7L1527 642.2L1528 641.7L1529 641.0L1530 641.9L1531 641.8L1532 641.5L1533 642.0L1534 641.9L1535 641.8L1536 641.0L1537 642.1L1538 641.6L1539 641.9L1540 641.6L1541 642.0L1542 641.9L1543 641.6L1544 642.2L1545 642.1L1546 641.2L1547 641.5L1548 641.6L1549 641.9L1550 642.2L1551 642.2L1552 642.0L1553 641.3L1554 641.9L1555 641.6L1556 642.3L1557 642.0L1558 641.2L1559 642.3L1560 641.7L1561 642.1L1562 642.2L1563 642.4L1564 642.3L1565 642.2L1566 642.3L1567 641.9L1568 641.9L1569 642.2L1570 642.2L1571 642.4L1572 639.8L1573 642.2L1574 640.3L1575 642.4L1576 642.2L1577 642.2L1578 641.6L1579 641.8L1580 642.2L1581 641.4L1582 642.1L1583 642.1L1584 642.0L1585 642.2L1586 642.4L1587 642.1L1588 641.9L1589 641.5L1590 640.9L1591 642.3L1592 642.2L1593 642.0L1594 640.9L1595 641.2L1596 641.7L1597 642.2L1598 642.2L1599 642.4L1600 641.4L1601 642.0L1602 641.4L1603 641.7L1604 639.9L1605 642.2L1606 642.5L1607 642.1L1608 641.5L1609 642.5L1610 641.9L1611 642.5L1612 642.0L1613 641.1L1614 642.5L1615 641.6L1616 641.8L1617 642.2L1618 642.5L1619 641.1L1620 641.8L1621 642.0L1622 641.9L1623 641.3L1624 641.9L1625 642.5L1626 642.4L1627 641.5L1628 642.2L1629 642.4L1630 641.8L1631 642.2L1632 641.4L1633 641.3L1634 641.9L1635 642.5L1636 642.0L1637 642.1L1638 642.0L1639 641.7L1640 642.2L1641 642.2L1642 642.5L1643 642.3L1644 642.3L1645 642.2L1646 641.9L1647 641.2L1648 641.5L1649 641.6L1650 641.8L1651 642.0L1652 642.3L1653 642.2L1654 642.4L1655 642.3L1656 642.4L1657 641.3L1658 642.5L1659 640.7L1660 641.8L1661 642.5L1662 641.6L1663 642.6L1664 642.1L1665 642.1L1666 642.1L1667 642.3L1668 641.7L1669 642.4L1670 642.0L1671 642.2L1672 642.1L1673 642.3L1674 642.3L1675 641.9L1676 641.8L1677 642.5L1678 642.2L1679 642.3L1680 642.3L1681 642.5L1682 642.2L1683 641.4L1684 641.5L1685 642.4L1686 642.0L1687 642.4L1688 642.4L1689 641.8L1690 641.3L1691 642.2L1692 641.6L1693 642.1L1694 641.1L1695 642.1L1696 642.4L1697 642.4L1698 641.8L1699 642.6L1700 641.3L1701 642.3L1702 642.5L1703 642.1L1704 641.3L1705 642.1L1706 640.9L1707 642.3L1708 640.8L1709 642.6L1710 641.8L1711 641.8L1712 642.2L1713 642.6L1714 642.1L1715 642.3L1716 642.5L1717 642.1L1718 641.8L1719 641.8L1720 641.8L1721 642.3L1722 640.9L1723 642.1L1724 641.2L1725 641.5L1726 642.6L1727 642.4L1728 641.7L1729 640.5L1730 642.1L1731 642.5L1732 642.0L1733 642.4L1734 641.8L1735 642.2L1736 642.6L1737 642.3L1738 640.7L1739 642.6L1740 641.0L1741 642.5L1742 642.0L1743 642.3L1744 642.5L1745 641.2L1746 642.3L1747 642.6L1748 642.1L1749 641.2L1750 642.4L1751 642.6L1751 650.9L1750 650.3L1749 650.3L1748 650.3L1747 650.7L1746 650.5L1745 650.3L1744 650.3L1743 650.5L1742 649.9L1741 650.2L1740 650.9L1739 650.0L1738 650.2L1737 650.3L1736 649.9L1735 650.0L1734 650.1L1733 650.2L1732 651.0L1731 650.7L1730 651.6L1729 651.0L1728 650.3L1727 650.8L1726 650.5L1725 651.1L1724 650.6L1723 650.0L1722 650.2L1721 650.0L1720 650.2L1719 651.5L1718 651.1L1717 650.6L1716 652.9L1715 650.6L1714 651.1L1713 650.0L1712 650.9L1711 650.2L1710 650.1L1709 650.3L1708 650.8L1707 650.0L1706 650.1L1705 650.0L1704 650.6L1703 650.1L1702 650.0L1701 651.1L1700 649.9L1699 649.9L1698 650.1L1697 650.5L1696 650.4L1695 649.9L1694 650.1L1693 650.5L1692 649.9L1691 650.7L1690 650.7L1689 650.1L1688 649.9L1687 650.4L1686 650.0L1685 650.5L1684 649.9L1683 650.1L1682 650.3L1681 650.2L1680 651.0L1679 650.5L1678 650.2L1677 650.7L1676 651.2L1675 650.0L1674 650.0L1673 650.3L1672 651.0L1671 651.1L1670 650.6L1669 650.8L1668 649.9L1667 650.1L1666 650.5L1665 650.0L1664 650.2L1663 650.1L1662 649.9L1661 650.1L1660 650.5L1659 650.4L1658 651.8L1657 650.0L1656 649.9L1655 650.8L1654 650.3L1653 650.6L1652 649.9L1651 652.3L1650 650.0L1649 650.9L1648 650.0L1647 650.5L1646 649.9L1645 650.4L1644 650.2L1643 650.2L1642 650.7L1641 650.7L1640 649.8L1639 650.3L1638 650.0L1637 650.8L1636 650.0L1635 650.1L1634 650.1L1633 650.8L1632 650.3L1631 649.9L1630 650.4L1629 651.0L1628 650.9L1627 650.6L1626 650.5L1625 649.9L1624 650.2L1623 652.7L1622 650.0L1621 650.3L1620 650.2L1619 650.3L1618 650.7L1617 650.1L1616 650.8L1615 650.0L1614 650.3L1613 649.9L1612 650.2L1611 649.8L1610 650.3L1609 650.5L1608 650.8L1607 649.7L1606 649.9L1605 649.7L1604 650.6L1603 650.3L1602 649.7L1601 650.0L1600 650.4L1599 649.8L1598 649.8L1597 650.4L1596 649.8L1595 649.9L1594 650.1L1593 650.7L1592 649.8L1591 650.8L1590 650.1L1589 651.2L1588 649.9L1587 650.0L1586 650.0L1585 649.9L1584 650.7L1583 650.6L1582 650.2L1581 649.9L1580 649.9L1579 649.7L1578 650.9L1577 650.4L1576 650.1L1575 650.0L1574 650.1L1573 650.3L1572 650.2L1571 650.7L1570 651.1L1569 649.9L1568 650.6L1567 650.0L1566 650.1L1565 650.0L1564 650.6L1563 649.6L1562 649.6L1561 650.8L1560 649.8L1559 649.6L1558 650.2L1557 650.6L1556 650.2L1555 649.6L1554 649.9L1553 649.7L1552 650.1L1551 650.2L1550 650.0L1549 649.9L1548 649.8L1547 649.9L1546 650.6L1545 649.6L1544 650.3L1543 650.5L1542 649.7L1541 650.3L1540 650.0L1539 650.1L1538 649.9L1537 649.7L1536 650.2L1535 649.6L1534 650.7L1533 650.6L1532 650.5L1531 650.0L1530 649.5L1529 650.3L1528 649.5L1527 651.0L1526 649.9L1525 649.5L1524 649.4L1523 649.8L1522 650.2L1521 650.2L1520 649.9L1519 649.9L1518 650.6L1517 649.5L1516 650.6L1515 649.9L1514 649.7L1513 649.8L1512 649.7L1511 650.2L1510 649.7L1509 650.2L1508 650.6L1507 650.7L1506 650.3L1505 649.6L1504 651.6L1503 650.3L1502 649.5L1501 649.6L1500 649.8L1499 649.4L1498 649.3L1497 649.7L1496 650.1L1495 650.2L1494 650.1L1493 649.7L1492 649.7L1491 650.9L1490 649.8L1489 649.4L1488 649.7L1487 650.0L1486 649.6L1485 650.5L1484 649.9L1483 650.7L1482 650.1L1481 649.2L1480 649.3L1479 649.6L1478 650.1L1477 649.1L1476 650.6L1475 649.7L1474 649.4L1473 649.3L1472 649.1L1471 650.7L1470 649.1L1469 649.7L1468 650.1L1467 649.3L1466 649.8L1465 649.4L1464 649.2L1463 649.8L1462 649.9L1461 649.2L1460 649.3L1459 650.2L1458 649.2L1457 650.7L1456 649.8L1455 649.4L1454 650.9L1453 649.6L1452 649.4L1451 649.1L1450 649.6L1449 650.0L1448 648.9L1447 650.1L1446 649.9L1445 650.9L1444 648.8L1443 649.8L1442 649.2L1441 648.9L1440 649.0L1439 649.4L1438 649.0L1437 649.7L1436 649.5L1435 650.0L1434 649.4L1433 648.7L1432 649.4L1431 649.1L1430 649.3L1429 649.1L1428 648.8L1427 649.5L1426 649.9L1425 649.5L1424 648.6L1423 648.5L1422 649.5L1421 648.7L1420 649.0L1419 649.3L1418 648.5L1417 648.8L1416 648.6L1415 649.1L1414 648.4L1413 648.4L1412 648.5L1411 648.6L1410 648.9L1409 648.6L1408 648.7L1407 649.0L1406 649.0L1405 649.3L1404 648.8L1403 649.4L1402 648.6L1401 648.4L1400 648.9L1399 649.3L1398 648.3L1397 648.3L1396 648.2L1395 648.6L1394 649.3L1393 648.6L1392 648.2L1391 648.0L1390 648.2L1389 648.2L1388 648.2L1387 648.4L1386 648.6L1385 647.9L1384 647.9L1383 648.5L1382 649.0L1381 648.0L1380 648.0L1379 648.5L1378 647.8L1377 648.8L1376 649.4L1375 648.4L1374 648.1L1373 647.6L1372 647.9L1371 648.0L1370 648.5L1369 647.9L1368 647.6L1367 648.6L1366 647.3L1365 648.0L1364 647.5L1363 648.2L1362 647.5L1361 647.8L1360 647.3L1359 647.2L1358 648.4L1357 647.9L1356 647.6L1355 647.4L1354 646.9L1353 647.0L1352 647.2L1351 646.9L1350 647.5L1349 646.7L1348 646.6L1347 646.9L1346 647.4L1345 647.2L1344 646.5L1343 646.8L1342 646.6L1341 646.6L1340 646.9L1339 646.4L1338 646.4L1337 646.8L1336 647.5L1335 646.2L1334 646.9L1333 646.6L1332 646.0L1331 646.7L1330 646.2L1329 647.2L1328 646.0L1327 646.9L1326 645.8L1325 647.0L1324 646.7L1323 645.9L1322 646.4L1321 645.9L1320 646.7L1319 645.5L1318 646.2L1317 645.3L1316 645.5L1315 646.2L1314 645.3Z" fill="#1fc6d2"/>
<path d="M440.5 455V660M877.5 437V470M1314.5 455V660" stroke="#1fc6d2" stroke-width="1" opacity=".75" fill="none"/>
<path d="M877.5 470V650" stroke="#1fc6d2" stroke-width="1" opacity=".2" fill="none"/>
<path d="M3.8 437V545" stroke="#1fc6d2" stroke-width="1.6" opacity=".9" fill="none"/>
<path d="M3 643.6L4 644.1L5 644.0L6 642.8L7 644.2L8 643.9L9 643.7L10 644.3L11 643.7L12 643.3L13 643.6L14 642.7L15 644.2L16 643.8L17 642.5L18 642.5L19 643.6L20 643.8L21 644.0L22 643.8L23 644.3L24 644.1L25 644.1L26 644.3L27 644.1L28 643.5L29 644.2L30 643.9L31 644.2L32 644.0L33 643.2L34 644.0L35 644.2L36 643.5L37 644.0L38 644.0L39 643.4L40 644.3L41 644.1L42 644.2L43 643.1L44 644.0L45 643.0L46 643.8L47 643.9L48 643.4L49 643.5L50 642.4L51 644.1L52 644.0L53 644.0L54 643.4L55 643.3L56 644.1L57 643.6L58 644.0L59 643.4L60 644.1L61 643.5L62 644.2L63 643.4L64 643.0L65 643.2L66 643.1L67 643.8L68 644.1L69 644.0L70 644.2L71 643.7L72 643.7L73 643.9L74 643.4L75 643.4L76 643.9L77 644.3L78 643.8L79 643.4L80 643.2L81 643.5L82 644.3L83 643.7L84 644.2L85 643.9L86 643.2L87 643.2L88 642.8L89 643.8L90 643.7L91 643.5L92 643.3L93 643.2L94 644.0L95 643.4L96 643.6L97 643.5L98 643.7L99 644.2L100 642.9L101 643.5L102 642.5L103 644.3L104 643.9L105 643.7L106 644.3L107 643.5L108 643.8L109 643.8L110 642.9L111 644.2L112 643.9L113 642.8L114 644.3L115 643.9L116 643.3L117 644.0L118 644.0L119 643.7L120 644.2L121 643.5L122 643.9L123 644.3L124 643.2L125 644.2L126 644.1L127 644.3L128 644.3L129 643.6L130 644.1L131 643.9L132 644.3L133 643.5L134 643.7L135 644.3L136 643.7L137 644.3L138 643.5L139 643.0L140 643.2L141 643.9L142 644.2L143 644.1L144 644.0L145 643.2L146 644.0L147 643.3L148 644.3L149 643.5L150 643.4L151 643.7L152 643.8L153 644.2L154 643.8L155 644.2L156 643.5L157 643.7L158 643.9L159 643.8L160 643.6L161 644.2L162 644.1L163 644.0L164 644.2L165 644.0L166 643.0L167 642.9L168 644.0L169 644.1L170 642.8L171 643.8L172 643.2L173 644.1L174 642.7L175 643.4L176 642.1L177 644.1L178 643.8L179 644.1L180 643.7L181 643.9L182 643.7L183 644.0L184 644.2L185 643.7L186 643.9L187 643.8L188 644.2L189 643.8L190 642.8L191 643.3L192 643.3L193 643.6L194 644.2L195 644.3L196 643.8L197 643.7L198 644.1L199 644.1L200 644.0L201 644.0L202 644.3L203 643.8L204 643.4L205 643.7L206 644.1L207 643.8L208 644.2L209 642.6L210 644.2L211 643.6L212 644.0L213 643.3L214 644.0L215 644.0L216 643.6L217 644.2L218 644.2L219 644.1L220 643.7L221 644.1L222 644.0L223 643.9L224 644.2L225 644.2L226 643.8L227 644.2L228 644.2L229 644.2L230 644.1L231 643.5L232 644.0L233 644.2L234 642.6L235 643.7L236 643.3L237 643.0L238 644.1L239 643.5L240 643.6L241 643.5L242 643.5L243 643.7L244 642.9L245 644.3L246 644.1L247 643.7L248 643.9L249 643.6L250 644.1L251 643.9L252 644.1L253 644.0L254 644.2L255 644.1L256 644.3L257 644.1L258 643.6L259 643.7L260 644.1L261 643.3L262 644.0L263 643.1L264 644.2L265 644.3L266 643.6L267 642.5L268 643.0L269 644.0L270 643.8L271 644.2L272 644.0L273 644.1L274 644.3L275 644.2L276 644.3L277 643.8L278 643.8L279 642.3L280 643.7L281 643.9L282 643.7L283 643.4L284 644.3L285 643.3L286 643.3L287 643.5L288 643.5L289 643.4L290 643.8L291 644.3L292 643.9L293 643.8L294 643.3L295 644.1L296 643.9L297 643.1L298 644.1L299 644.2L300 644.2L301 643.3L302 644.1L303 643.8L304 643.7L305 643.5L306 643.2L307 643.6L308 644.2L309 643.8L310 643.0L311 644.2L312 643.8L313 642.1L314 643.4L315 644.1L316 644.0L317 644.1L318 644.0L319 642.6L320 644.3L321 643.7L322 643.8L323 643.9L324 644.1L325 644.3L326 644.3L327 644.2L328 643.6L329 643.7L330 643.9L331 643.7L332 643.6L333 643.1L334 644.1L335 643.7L336 643.1L337 644.2L338 643.9L339 643.9L340 643.0L341 644.2L342 643.3L343 644.1L344 644.1L345 643.9L346 643.4L347 643.6L348 643.9L349 644.2L350 644.1L351 644.2L352 644.2L353 643.7L354 644.2L355 644.2L356 643.0L357 643.3L358 643.1L359 643.6L360 644.2L361 643.0L362 644.3L363 643.4L364 643.6L365 643.7L366 642.7L367 644.2L368 644.0L369 643.3L370 643.3L371 643.4L372 643.1L373 643.7L374 644.2L375 642.7L376 643.6L377 644.2L378 644.1L379 644.0L380 644.1L381 642.6L382 643.7L383 643.9L384 643.6L385 643.6L386 643.9L387 643.2L388 643.6L389 642.9L390 643.4L391 643.1L392 644.1L393 644.1L394 644.3L395 643.6L396 643.8L397 643.4L398 643.4L399 643.7L400 643.9L401 642.1L402 643.5L403 644.1L404 643.5L405 644.1L406 644.0L407 643.9L408 644.2L409 642.5L410 643.2L411 643.8L412 644.1L413 642.6L414 644.0L415 643.6L416 641.9L417 644.1L418 643.8L419 642.9L420 643.8L421 644.2L422 642.8L423 642.4L424 643.9L425 644.2L426 644.1L427 644.3L428 643.4L429 644.1L430 642.8L431 643.4L432 644.3L433 643.7L434 643.6L435 643.6L436 644.0L437 644.3L438 643.2L439 644.2L440 643.8L440 652.3L439 653.4L438 654.1L437 652.2L436 653.5L435 652.4L434 652.8L433 652.7L432 652.4L431 652.4L430 652.7L429 652.7L428 652.3L427 652.8L426 652.2L425 652.9L424 653.0L423 652.6L422 652.7L421 653.0L420 652.2L419 653.3L418 653.4L417 653.6L416 652.4L415 653.3L414 652.1L413 652.6L412 653.6L411 653.3L410 654.0L409 652.2L408 652.2L407 652.4L406 652.4L405 652.2L404 652.9L403 652.9L402 652.3L401 652.3L400 652.6L399 652.3L398 652.8L397 653.2L396 652.4L395 652.4L394 653.4L393 652.5L392 652.3L391 652.4L390 653.5L389 653.0L388 653.0L387 653.0L386 653.2L385 652.2L384 652.7L383 652.4L382 652.3L381 652.7L380 652.1L379 652.3L378 652.1L377 652.4L376 652.1L375 652.7L374 652.8L373 652.3L372 652.2L371 652.6L370 652.2L369 653.3L368 652.6L367 652.4L366 653.8L365 653.1L364 652.7L363 652.3L362 653.3L361 652.5L360 652.7L359 652.3L358 652.2L357 652.2L356 652.2L355 652.3L354 653.3L353 653.0L352 652.6L351 652.9L350 652.7L349 652.4L348 652.2L347 653.5L346 652.3L345 653.2L344 652.3L343 652.8L342 652.3L341 652.6L340 652.3L339 652.4L338 652.8L337 652.2L336 653.1L335 652.4L334 652.7L333 653.4L332 652.9L331 652.1L330 652.5L329 652.7L328 652.5L327 652.6L326 652.2L325 653.0L324 652.9L323 653.0L322 652.2L321 652.9L320 652.3L319 652.6L318 652.6L317 652.2L316 652.3L315 652.5L314 652.9L313 652.4L312 652.6L311 652.4L310 652.9L309 652.5L308 652.3L307 652.7L306 652.2L305 653.3L304 652.3L303 652.6L302 652.7L301 653.2L300 652.1L299 653.0L298 652.7L297 652.7L296 653.1L295 652.6L294 652.4L293 652.7L292 653.4L291 653.4L290 652.2L289 653.3L288 653.2L287 652.1L286 652.6L285 652.8L284 653.4L283 653.2L282 653.4L281 653.6L280 652.7L279 653.0L278 652.5L277 652.4L276 652.4L275 652.7L274 652.2L273 653.0L272 652.5L271 652.4L270 652.5L269 652.6L268 652.8L267 652.2L266 652.5L265 652.2L264 652.3L263 653.4L262 652.6L261 652.3L260 653.1L259 652.7L258 652.4L257 652.5L256 653.1L255 652.3L254 653.0L253 652.6L252 652.1L251 652.3L250 653.0L249 654.8L248 652.3L247 652.3L246 652.7L245 653.4L244 652.5L243 652.3L242 652.8L241 652.3L240 652.6L239 653.0L238 652.4L237 652.2L236 652.9L235 653.3L234 652.4L233 653.0L232 652.7L231 652.8L230 653.2L229 652.8L228 652.3L227 652.1L226 652.9L225 652.2L224 652.3L223 652.7L222 652.6L221 652.1L220 652.4L219 652.9L218 653.1L217 652.5L216 652.5L215 653.1L214 653.0L213 653.1L212 652.3L211 652.8L210 652.2L209 652.6L208 652.5L207 652.6L206 652.3L205 652.5L204 652.5L203 652.4L202 652.5L201 652.6L200 652.4L199 653.1L198 652.7L197 652.2L196 652.4L195 652.3L194 652.4L193 652.6L192 652.7L191 652.4L190 652.7L189 652.8L188 652.9L187 652.7L186 652.6L185 652.3L184 652.7L183 652.7L182 653.2L181 653.7L180 653.1L179 652.3L178 652.7L177 652.3L176 652.5L175 652.5L174 652.8L173 652.2L172 652.4L171 652.5L170 653.2L169 653.1L168 652.9L167 652.5L166 652.8L165 652.6L164 653.4L163 653.1L162 652.4L161 652.3L160 652.1L159 652.8L158 653.1L157 652.7L156 653.0L155 652.7L154 652.3L153 652.5L152 652.2L151 652.1L150 653.9L149 652.4L148 652.4L147 652.4L146 652.7L145 653.1L144 652.1L143 652.4L142 652.4L141 653.6L140 653.2L139 652.5L138 652.7L137 652.4L136 652.7L135 652.1L134 652.2L133 652.5L132 652.3L131 652.9L130 652.5L129 652.9L128 652.4L127 653.4L126 653.3L125 652.6L124 652.9L123 652.2L122 652.9L121 652.5L120 653.0L119 652.3L118 652.3L117 652.1L116 652.1L115 653.5L114 652.6L113 653.1L112 652.4L111 652.9L110 652.4L109 652.3L108 653.0L107 652.6L106 652.3L105 652.4L104 652.5L103 652.8L102 654.1L101 652.3L100 652.4L99 653.6L98 652.4L97 653.5L96 653.0L95 652.2L94 652.4L93 653.4L92 652.6L91 652.2L90 652.7L89 652.8L88 652.4L87 653.1L86 652.7L85 652.4L84 652.6L83 652.4L82 652.8L81 652.3L80 652.8L79 652.4L78 652.6L77 652.2L76 652.6L75 652.2L74 652.1L73 652.3L72 652.2L71 652.3L70 653.1L69 654.2L68 652.9L67 652.3L66 652.3L65 652.4L64 652.4L63 653.5L62 652.6L61 652.6L60 653.0L59 653.3L58 652.6L57 653.0L56 653.1L55 652.8L54 652.6L53 652.7L52 652.5L51 652.3L50 652.3L49 652.8L48 652.1L47 653.3L46 652.1L45 652.3L44 652.7L43 652.4L42 653.1L41 652.3L40 652.1L39 652.6L38 652.9L37 652.6L36 653.2L35 653.0L34 653.2L33 652.4L32 652.2L31 653.0L30 653.5L29 652.7L28 652.1L27 652.1L26 652.6L25 653.7L24 653.3L23 652.1L22 652.2L21 652.1L20 653.3L19 652.1L18 652.9L17 652.5L16 653.0L15 652.5L14 652.2L13 652.6L12 652.9L11 652.7L10 652.2L9 652.9L8 653.4L7 652.2L6 652.5L5 652.8L4 652.7L3 652.4ZM440 463.5L441 463.9L442 462.4L443 463.4L444 463.9L445 462.8L446 463.5L447 463.4L448 464.1L449 463.3L450 463.6L451 463.5L452 462.8L453 463.3L454 463.0L455 463.4L456 463.4L457 463.6L458 464.0L459 464.1L460 462.9L461 463.8L462 463.4L463 464.0L464 463.9L465 463.5L466 463.8L467 463.9L468 463.8L469 463.5L470 463.4L471 463.0L472 463.3L473 463.2L474 462.3L475 463.6L476 463.4L477 463.4L478 463.3L479 463.0L480 463.7L481 462.1L482 461.9L483 463.4L484 463.7L485 464.0L486 463.3L487 464.0L488 463.8L489 464.0L490 464.0L491 462.7L492 463.9L493 463.1L494 463.9L495 463.3L496 462.6L497 463.4L498 463.8L499 463.1L500 462.6L501 463.4L502 463.2L503 463.5L504 464.0L505 463.2L506 463.6L507 464.1L508 462.8L509 463.8L510 464.1L511 464.0L512 463.2L513 462.3L514 462.9L515 463.3L516 463.8L517 463.7L518 463.8L519 463.5L520 463.1L521 464.0L522 463.7L523 463.2L524 463.5L525 463.4L526 463.2L527 463.5L528 464.0L529 463.0L530 463.7L531 464.0L532 463.2L533 463.9L534 463.7L535 463.9L536 463.7L537 464.1L538 463.9L539 463.0L540 463.8L541 462.7L542 463.4L543 463.9L544 464.0L545 463.4L546 464.0L547 463.9L548 463.7L549 462.1L550 463.9L551 463.7L552 463.7L553 463.2L554 463.8L555 463.0L556 463.7L557 464.0L558 463.0L559 463.6L560 462.4L561 463.9L562 463.8L563 462.5L564 463.7L565 463.7L566 463.3L567 462.1L568 463.8L569 463.6L570 463.7L571 463.2L572 463.9L573 463.5L574 462.4L575 463.9L576 464.1L577 463.9L578 463.1L579 463.3L580 463.9L581 463.3L582 463.9L583 463.0L584 463.4L585 463.3L586 463.7L587 464.0L588 463.4L589 463.2L590 463.6L591 463.9L592 464.1L593 463.5L594 463.0L595 464.0L596 464.1L597 463.9L598 463.1L599 463.4L600 463.6L601 463.9L602 463.7L603 463.9L604 462.8L605 463.6L606 463.4L607 464.1L608 463.9L609 463.2L610 464.0L611 463.9L612 463.7L613 463.2L614 463.8L615 464.0L616 463.5L617 463.2L618 462.4L619 463.7L620 463.3L621 463.6L622 463.8L623 463.7L624 463.4L625 463.5L626 464.1L627 464.0L628 463.1L629 463.6L630 463.5L631 462.7L632 463.4L633 464.0L634 463.1L635 463.8L636 463.5L637 464.0L638 463.9L639 463.9L640 462.9L641 463.3L642 464.1L643 461.0L644 462.8L645 464.0L646 463.6L647 463.8L648 463.6L649 463.2L650 462.7L651 463.5L652 463.3L653 464.0L654 464.0L655 463.6L656 463.5L657 463.7L658 463.6L659 463.2L660 463.1L661 463.8L662 463.7L663 463.2L664 463.5L665 463.2L666 462.7L667 462.9L668 464.1L669 463.5L670 463.4L671 462.6L672 463.2L673 462.8L674 463.6L675 463.9L676 464.1L677 463.5L678 463.5L679 463.7L680 463.4L681 463.0L682 463.0L683 463.0L684 464.1L685 463.3L686 463.4L687 463.2L688 463.9L689 463.7L690 464.0L691 463.1L692 463.7L693 464.0L694 463.5L695 463.8L696 462.5L697 463.3L698 464.1L699 463.9L700 463.4L701 462.6L702 463.0L703 463.0L704 463.5L705 463.8L706 463.5L707 463.4L708 462.2L709 463.7L710 463.7L711 463.9L712 464.0L713 463.0L714 464.1L715 462.7L716 463.0L717 462.9L718 463.2L719 463.2L720 462.6L721 464.1L722 464.1L723 464.1L724 464.0L725 463.1L726 463.8L727 464.0L728 462.6L729 464.0L730 464.0L731 463.5L732 463.8L733 463.8L734 463.2L735 464.1L736 463.6L737 463.6L738 463.5L739 463.4L740 464.0L741 463.3L742 464.0L743 463.4L744 463.7L745 463.7L746 464.0L747 462.5L748 463.4L749 463.7L750 463.8L751 463.9L752 463.6L753 463.5L754 463.5L755 463.9L756 463.8L757 464.0L758 463.4L759 463.8L760 463.1L761 463.0L762 463.7L763 463.0L764 462.4L765 462.9L766 464.0L767 463.5L768 463.9L769 463.7L770 463.3L771 463.0L772 463.6L773 464.0L774 463.9L775 462.6L776 463.9L777 463.8L778 463.9L779 463.8L780 463.6L781 463.9L782 463.5L783 463.9L784 463.8L785 463.3L786 463.4L787 463.7L788 463.9L789 463.9L790 464.0L791 464.0L792 463.6L793 463.5L794 463.4L795 464.0L796 464.1L797 463.4L798 463.7L799 463.5L800 463.7L801 463.8L802 463.8L803 462.5L804 463.4L805 463.5L806 463.6L807 463.8L808 463.6L809 463.5L810 463.8L811 463.7L812 463.5L813 463.5L814 463.5L815 463.7L816 463.9L817 463.9L818 463.5L819 464.0L820 463.6L821 463.2L822 463.6L823 462.2L824 464.0L825 463.6L826 463.3L827 464.1L828 463.3L829 463.3L830 463.6L831 464.0L832 463.8L833 464.0L834 464.0L835 463.9L836 464.1L837 463.8L838 463.5L839 464.0L840 463.9L841 463.7L842 463.4L843 463.1L844 463.4L845 462.7L846 463.4L847 464.0L848 463.7L849 463.3L850 463.7L851 464.0L852 464.0L853 463.9L854 463.6L855 463.2L856 463.1L857 463.9L858 463.9L859 463.9L860 463.1L861 463.9L862 464.1L863 464.0L864 463.2L865 463.7L866 463.8L867 463.1L868 464.1L869 463.9L870 463.9L871 463.7L872 463.3L873 463.6L874 463.6L875 463.9L876 463.5L877 463.8L877 472.9L876 472.3L875 472.7L874 473.2L873 472.4L872 472.1L871 472.2L870 473.0L869 472.0L868 472.1L867 473.3L866 472.7L865 473.1L864 472.1L863 472.9L862 472.3L861 473.2L860 472.5L859 473.0L858 471.9L857 473.2L856 472.5L855 472.2L854 471.9L853 472.4L852 472.4L851 473.3L850 472.4L849 472.2L848 472.6L847 472.2L846 472.7L845 472.6L844 472.3L843 473.3L842 472.1L841 472.3L840 472.7L839 472.2L838 472.1L837 473.3L836 472.1L835 471.9L834 472.2L833 472.0L832 473.1L831 472.6L830 472.1L829 472.2L828 472.4L827 472.1L826 472.5L825 472.1L824 472.3L823 472.0L822 472.7L821 472.4L820 472.5L819 473.0L818 471.9L817 472.1L816 472.1L815 472.2L814 471.9L813 472.0L812 472.3L811 472.3L810 472.3L809 472.5L808 472.4L807 472.1L806 472.2L805 472.0L804 472.4L803 472.9L802 472.4L801 472.3L800 472.9L799 472.2L798 472.7L797 472.4L796 472.0L795 472.7L794 472.1L793 473.4L792 472.0L791 472.0L790 471.9L789 472.3L788 472.4L787 472.9L786 472.2L785 473.5L784 473.4L783 473.3L782 472.3L781 472.6L780 472.2L779 473.4L778 472.0L777 472.4L776 472.1L775 472.2L774 472.2L773 472.3L772 472.1L771 472.8L770 472.1L769 472.8L768 472.0L767 472.5L766 472.3L765 472.2L764 473.2L763 472.0L762 472.7L761 472.8L760 472.9L759 472.1L758 472.4L757 472.7L756 473.4L755 472.8L754 472.6L753 473.0L752 472.0L751 472.4L750 472.1L749 472.3L748 472.3L747 472.2L746 472.3L745 472.1L744 472.3L743 472.7L742 472.6L741 472.8L740 472.4L739 472.6L738 473.3L737 472.5L736 473.5L735 472.0L734 472.5L733 473.7L732 472.3L731 472.3L730 473.0L729 472.9L728 472.4L727 472.9L726 472.1L725 472.6L724 472.1L723 472.5L722 472.1L721 473.0L720 472.5L719 472.0L718 471.9L717 472.0L716 472.4L715 472.2L714 472.1L713 472.0L712 472.0L711 472.6L710 472.7L709 472.4L708 472.5L707 472.3L706 472.4L705 472.7L704 472.2L703 472.0L702 472.3L701 472.5L700 472.3L699 472.3L698 473.8L697 471.9L696 473.1L695 472.2L694 472.5L693 472.1L692 472.8L691 472.4L690 472.2L689 472.1L688 472.2L687 473.1L686 472.1L685 472.7L684 473.3L683 472.1L682 472.0L681 471.9L680 471.9L679 472.9L678 472.0L677 472.6L676 472.1L675 472.4L674 472.2L673 473.5L672 472.1L671 471.9L670 472.0L669 474.1L668 472.9L667 472.2L666 472.3L665 472.5L664 472.8L663 473.9L662 472.4L661 472.2L660 472.4L659 472.2L658 472.0L657 472.4L656 471.9L655 472.3L654 472.8L653 472.2L652 472.5L651 472.2L650 472.4L649 472.3L648 472.5L647 472.0L646 472.8L645 472.6L644 472.4L643 472.3L642 472.7L641 472.0L640 472.4L639 473.0L638 472.5L637 472.2L636 472.8L635 472.7L634 472.6L633 472.1L632 472.1L631 472.5L630 472.1L629 472.6L628 472.4L627 472.5L626 472.6L625 471.9L624 472.0L623 473.1L622 475.2L621 472.4L620 472.6L619 472.7L618 473.1L617 472.9L616 472.6L615 472.0L614 472.7L613 472.2L612 472.0L611 472.6L610 472.6L609 472.2L608 472.4L607 473.6L606 472.9L605 473.0L604 472.1L603 471.9L602 472.1L601 473.0L600 472.3L599 471.9L598 473.0L597 472.0L596 472.7L595 472.2L594 472.5L593 472.1L592 471.9L591 472.1L590 472.7L589 472.2L588 472.6L587 472.4L586 472.0L585 472.7L584 473.4L583 473.6L582 472.3L581 472.6L580 472.1L579 472.2L578 472.7L577 472.2L576 472.8L575 472.8L574 471.9L573 473.4L572 472.2L571 472.8L570 472.8L569 472.3L568 472.6L567 473.1L566 472.3L565 473.0L564 473.0L563 472.5L562 473.2L561 472.1L560 472.8L559 472.3L558 473.4L557 472.3L556 472.5L555 472.7L554 472.1L553 472.4L552 472.3L551 472.6L550 472.0L549 472.1L548 472.0L547 472.3L546 472.9L545 473.1L544 472.0L543 472.4L542 472.3L541 472.1L540 472.6L539 472.3L538 472.7L537 472.8L536 473.0L535 471.9L534 472.2L533 472.6L532 472.8L531 472.5L530 472.8L529 472.5L528 472.3L527 472.2L526 472.5L525 471.9L524 472.6L523 473.1L522 472.5L521 472.1L520 472.4L519 472.7L518 472.4L517 472.2L516 472.4L515 472.4L514 474.2L513 472.0L512 472.4L511 472.0L510 472.6L509 472.7L508 472.2L507 473.3L506 472.4L505 472.3L504 472.1L503 472.2L502 472.6L501 473.2L500 471.9L499 471.9L498 472.9L497 472.5L496 472.1L495 472.0L494 472.7L493 472.8L492 473.0L491 472.5L490 472.0L489 472.6L488 472.5L487 472.5L486 471.9L485 472.7L484 472.6L483 472.0L482 471.9L481 472.0L480 473.2L479 472.5L478 472.0L477 472.2L476 472.0L475 472.4L474 472.5L473 472.3L472 473.2L471 472.8L470 472.0L469 472.2L468 472.0L467 472.9L466 472.3L465 472.2L464 473.5L463 473.0L462 472.2L461 474.0L460 472.0L459 472.9L458 472.8L457 472.8L456 472.3L455 472.5L454 471.9L453 472.5L452 472.0L451 473.3L450 472.7L449 472.2L448 472.6L447 473.3L446 473.3L445 472.2L444 472.1L443 472.7L442 471.9L441 473.0L440 472.0ZM877 643.7L878 642.8L879 643.9L880 644.1L881 643.8L882 643.7L883 643.4L884 643.7L885 644.0L886 643.5L887 644.2L888 643.5L889 642.5L890 643.8L891 643.9L892 643.9L893 642.8L894 643.3L895 643.8L896 643.7L897 644.2L898 643.7L899 644.2L900 643.1L901 642.7L902 643.8L903 644.0L904 643.3L905 643.0L906 644.0L907 644.2L908 643.7L909 644.1L910 643.5L911 643.6L912 644.0L913 643.8L914 644.1L915 641.7L916 643.9L917 643.5L918 643.5L919 642.4L920 643.9L921 643.7L922 644.1L923 642.7L924 643.4L925 643.1L926 644.1L927 643.1L928 644.3L929 644.2L930 643.7L931 643.1L932 643.3L933 644.3L934 644.2L935 643.9L936 644.0L937 644.0L938 644.2L939 643.9L940 643.9L941 644.2L942 644.2L943 643.6L944 643.0L945 643.3L946 644.0L947 643.4L948 644.2L949 643.1L950 643.7L951 643.9L952 643.6L953 643.9L954 644.0L955 643.0L956 643.6L957 643.8L958 643.0L959 644.1L960 644.1L961 643.7L962 643.8L963 643.3L964 644.0L965 644.2L966 643.4L967 642.6L968 644.0L969 643.5L970 644.1L971 643.5L972 642.9L973 643.5L974 644.2L975 643.9L976 643.7L977 644.0L978 643.9L979 644.2L980 643.8L981 643.1L982 644.2L983 642.8L984 644.3L985 643.6L986 643.7L987 643.5L988 643.8L989 642.4L990 644.1L991 644.3L992 643.6L993 643.3L994 643.8L995 643.3L996 644.3L997 644.0L998 643.8L999 644.3L1000 644.0L1001 643.5L1002 644.2L1003 644.1L1004 644.0L1005 643.3L1006 643.3L1007 644.2L1008 644.2L1009 643.8L1010 643.5L1011 642.7L1012 644.1L1013 643.9L1014 643.3L1015 644.1L1016 644.0L1017 643.6L1018 644.2L1019 644.1L1020 643.5L1021 643.6L1022 643.6L1023 644.0L1024 643.1L1025 644.1L1026 643.8L1027 643.8L1028 642.9L1029 644.0L1030 643.5L1031 644.2L1032 643.8L1033 644.2L1034 643.7L1035 643.7L1036 643.8L1037 643.8L1038 644.3L1039 644.1L1040 643.7L1041 642.7L1042 644.0L1043 644.1L1044 643.9L1045 644.1L1046 643.0L1047 644.0L1048 643.8L1049 643.8L1050 644.3L1051 643.4L1052 643.9L1053 644.3L1054 643.3L1055 643.6L1056 644.1L1057 643.9L1058 643.6L1059 642.9L1060 643.6L1061 644.1L1062 644.0L1063 644.1L1064 643.6L1065 643.2L1066 643.9L1067 643.6L1068 644.1L1069 643.7L1070 644.1L1071 643.3L1072 644.1L1073 644.1L1074 643.9L1075 643.9L1076 644.0L1077 644.0L1078 644.1L1079 643.9L1080 643.4L1081 644.1L1082 644.0L1083 643.8L1084 644.2L1085 644.2L1086 644.2L1087 644.3L1088 642.5L1089 642.8L1090 643.7L1091 644.1L1092 643.5L1093 644.0L1094 643.8L1095 643.9L1096 643.7L1097 644.3L1098 643.0L1099 643.0L1100 644.3L1101 642.9L1102 643.7L1103 642.6L1104 643.7L1105 644.2L1106 644.0L1107 643.2L1108 643.9L1109 643.8L1110 643.9L1111 643.8L1112 644.0L1113 644.2L1114 643.7L1115 644.2L1116 643.8L1117 643.3L1118 643.9L1119 643.5L1120 643.9L1121 644.0L1122 643.8L1123 643.3L1124 644.1L1125 643.4L1126 643.7L1127 643.7L1128 644.0L1129 644.2L1130 644.1L1131 644.3L1132 644.0L1133 643.8L1134 643.9L1135 642.5L1136 643.1L1137 644.2L1138 644.1L1139 644.2L1140 643.9L1141 643.9L1142 642.0L1143 643.9L1144 643.7L1145 643.6L1146 644.0L1147 644.1L1148 642.2L1149 644.2L1150 643.4L1151 643.7L1152 643.2L1153 644.0L1154 643.4L1155 643.7L1156 643.8L1157 644.0L1158 644.2L1159 643.5L1160 642.9L1161 643.8L1162 644.2L1163 643.9L1164 644.2L1165 643.5L1166 644.3L1167 643.5L1168 644.1L1169 644.1L1170 643.1L1171 644.1L1172 644.0L1173 644.0L1174 643.4L1175 642.9L1176 643.0L1177 643.4L1178 643.2L1179 643.9L1180 643.6L1181 644.0L1182 643.5L1183 643.5L1184 643.5L1185 643.9L1186 643.6L1187 644.1L1188 644.2L1189 644.1L1190 644.2L1191 644.1L1192 644.0L1193 643.4L1194 643.3L1195 644.3L1196 643.6L1197 644.3L1198 643.9L1199 644.0L1200 644.1L1201 643.7L1202 644.1L1203 643.6L1204 643.5L1205 644.2L1206 643.8L1207 643.1L1208 643.3L1209 644.1L1210 643.4L1211 644.0L1212 643.4L1213 644.2L1214 643.3L1215 643.6L1216 643.6L1217 644.0L1218 643.8L1219 643.8L1220 643.7L1221 643.9L1222 643.8L1223 643.0L1224 644.2L1225 643.2L1226 644.2L1227 643.9L1228 644.0L1229 643.3L1230 642.7L1231 642.6L1232 644.1L1233 644.1L1234 644.1L1235 643.3L1236 642.8L1237 642.8L1238 644.1L1239 643.9L1240 643.3L1241 643.8L1242 643.8L1243 643.4L1244 642.7L1245 643.7L1246 643.9L1247 643.6L1248 644.0L1249 643.4L1250 642.8L1251 643.1L1252 643.7L1253 643.7L1254 643.6L1255 643.3L1256 643.3L1257 643.6L1258 643.4L1259 644.2L1260 643.3L1261 644.1L1262 643.9L1263 644.0L1264 643.2L1265 642.8L1266 642.4L1267 643.4L1268 644.1L1269 643.9L1270 644.3L1271 642.5L1272 643.7L1273 643.6L1274 644.0L1275 643.6L1276 644.0L1277 644.1L1278 643.4L1279 644.0L1280 643.7L1281 643.4L1282 643.9L1283 644.2L1284 643.6L1285 643.1L1286 643.8L1287 643.7L1288 644.2L1289 643.4L1290 643.0L1291 644.2L1292 644.2L1293 644.2L1294 643.3L1295 644.2L1296 644.0L1297 644.2L1298 643.1L1299 643.8L1300 644.1L1301 643.4L1302 643.6L1303 643.4L1304 644.0L1305 643.6L1306 643.3L1307 643.6L1308 644.2L1309 644.3L1310 644.1L1311 643.0L1312 643.9L1313 643.2L1314 643.8L1314 652.2L1313 652.2L1312 652.3L1311 652.6L1310 652.5L1309 652.2L1308 652.4L1307 652.6L1306 652.5L1305 652.3L1304 653.1L1303 652.5L1302 652.4L1301 653.6L1300 652.4L1299 652.1L1298 652.8L1297 653.0L1296 653.0L1295 652.9L1294 653.2L1293 652.3L1292 653.2L1291 652.4L1290 653.8L1289 652.3L1288 652.9L1287 652.2L1286 652.6L1285 652.2L1284 653.2L1283 652.4L1282 655.1L1281 652.3L1280 652.5L1279 652.7L1278 652.8L1277 652.5L1276 652.2L1275 652.2L1274 652.5L1273 653.4L1272 653.0L1271 653.3L1270 652.6L1269 653.7L1268 653.5L1267 652.1L1266 652.7L1265 652.3L1264 652.3L1263 652.5L1262 654.6L1261 652.3L1260 652.4L1259 652.5L1258 652.6L1257 652.1L1256 652.3L1255 653.1L1254 652.4L1253 652.5L1252 652.7L1251 652.3L1250 652.8L1249 652.5L1248 652.9L1247 652.7L1246 652.5L1245 653.4L1244 652.8L1243 652.3L1242 654.0L1241 652.2L1240 653.0L1239 653.3L1238 652.2L1237 652.3L1236 652.3L1235 652.1L1234 652.3L1233 654.0L1232 652.4L1231 652.9L1230 653.0L1229 653.2L1228 653.1L1227 652.2L1226 652.5L1225 653.1L1224 652.2L1223 652.4L1222 652.2L1221 653.1L1220 652.2L1219 652.5L1218 652.4L1217 653.6L1216 652.7L1215 652.7L1214 652.8L1213 652.7L1212 652.5L1211 653.1L1210 652.8L1209 652.8L1208 652.5L1207 652.1L1206 652.2L1205 652.7L1204 652.4L1203 653.0L1202 652.4L1201 652.2L1200 652.7L1199 652.4L1198 652.3L1197 652.6L1196 652.5L1195 652.7L1194 653.9L1193 653.5L1192 653.5L1191 652.6L1190 652.3L1189 652.6L1188 652.4L1187 652.9L1186 652.1L1185 652.6L1184 652.5L1183 652.7L1182 652.2L1181 652.2L1180 654.2L1179 653.1L1178 653.1L1177 652.3L1176 652.3L1175 653.7L1174 652.7L1173 652.5L1172 652.3L1171 652.1L1170 652.4L1169 652.2L1168 653.4L1167 652.8L1166 652.2L1165 652.7L1164 652.3L1163 652.1L1162 652.1L1161 652.2L1160 652.7L1159 652.3L1158 654.5L1157 652.8L1156 652.1L1155 652.4L1154 652.6L1153 652.4L1152 653.0L1151 652.2L1150 652.3L1149 652.5L1148 652.2L1147 652.5L1146 652.5L1145 653.8L1144 652.9L1143 652.2L1142 652.5L1141 652.3L1140 652.3L1139 652.4L1138 652.1L1137 652.4L1136 652.6L1135 652.7L1134 652.6L1133 652.7L1132 652.1L1131 652.8L1130 652.7L1129 652.4L1128 653.8L1127 653.4L1126 653.5L1125 652.6L1124 652.2L1123 652.2L1122 652.5L1121 652.6L1120 652.5L1119 652.6L1118 652.4L1117 653.3L1116 652.3L1115 653.4L1114 652.6L1113 652.7L1112 652.1L1111 652.2L1110 652.9L1109 653.4L1108 653.1L1107 652.6L1106 652.4L1105 652.9L1104 653.2L1103 652.1L1102 652.2L1101 652.5L1100 652.3L1099 652.5L1098 653.1L1097 652.6L1096 652.6L1095 652.5L1094 652.3L1093 652.9L1092 652.7L1091 652.4L1090 652.5L1089 652.3L1088 652.2L1087 652.6L1086 652.8L1085 652.6L1084 652.5L1083 652.3L1082 652.6L1081 652.2L1080 652.2L1079 652.1L1078 652.1L1077 652.2L1076 652.8L1075 653.6L1074 652.2L1073 652.4L1072 652.1L1071 653.5L1070 652.1L1069 652.6L1068 652.5L1067 652.4L1066 653.5L1065 652.4L1064 652.9L1063 652.8L1062 652.4L1061 652.8L1060 652.8L1059 653.5L1058 652.5L1057 653.0L1056 652.4L1055 652.2L1054 652.6L1053 652.5L1052 652.4L1051 652.3L1050 652.5L1049 653.4L1048 652.2L1047 652.4L1046 652.1L1045 653.2L1044 652.5L1043 652.6L1042 652.8L1041 653.9L1040 652.6L1039 652.8L1038 652.4L1037 652.5L1036 652.9L1035 652.1L1034 652.4L1033 652.5L1032 652.1L1031 652.9L1030 652.8L1029 652.9L1028 652.3L1027 653.4L1026 652.8L1025 652.5L1024 652.6L1023 652.3L1022 652.6L1021 652.9L1020 652.7L1019 653.1L1018 652.6L1017 652.1L1016 653.3L1015 652.5L1014 652.6L1013 652.5L1012 652.7L1011 653.1L1010 653.0L1009 652.1L1008 652.2L1007 652.5L1006 652.4L1005 652.9L1004 653.3L1003 652.6L1002 652.4L1001 653.1L1000 653.2L999 652.7L998 652.3L997 652.7L996 652.8L995 653.3L994 653.0L993 652.5L992 652.8L991 652.6L990 652.6L989 652.3L988 652.9L987 653.4L986 652.9L985 652.7L984 652.9L983 653.2L982 653.0L981 652.8L980 652.2L979 652.2L978 652.3L977 653.2L976 653.1L975 652.7L974 652.2L973 652.8L972 652.7L971 652.7L970 652.4L969 653.0L968 652.5L967 652.7L966 652.4L965 652.3L964 652.8L963 652.6L962 652.4L961 652.9L960 652.6L959 653.6L958 652.1L957 652.5L956 652.6L955 652.7L954 652.4L953 653.7L952 653.2L951 652.4L950 654.6L949 652.4L948 653.0L947 652.2L946 652.8L945 653.2L944 652.8L943 652.2L942 652.5L941 652.1L940 652.4L939 652.5L938 652.6L937 652.8L936 653.3L935 652.2L934 652.4L933 652.5L932 652.7L931 653.1L930 652.4L929 653.1L928 652.5L927 652.4L926 652.4L925 652.1L924 652.5L923 652.5L922 652.3L921 652.8L920 652.9L919 652.2L918 652.3L917 653.0L916 652.3L915 652.7L914 652.9L913 652.4L912 652.5L911 652.8L910 652.8L909 652.8L908 652.2L907 652.6L906 652.2L905 652.1L904 653.8L903 652.9L902 653.0L901 652.6L900 652.6L899 652.5L898 652.2L897 652.6L896 652.7L895 653.1L894 652.9L893 652.2L892 652.2L891 653.4L890 652.6L889 652.2L888 652.2L887 652.5L886 652.4L885 652.7L884 652.4L883 653.0L882 652.5L881 652.5L880 652.4L879 652.4L878 653.2L877 652.6ZM1314 463.9L1315 463.9L1316 463.9L1317 462.8L1318 462.9L1319 464.0L1320 462.1L1321 464.0L1322 463.9L1323 464.0L1324 463.7L1325 464.0L1326 463.7L1327 463.7L1328 464.0L1329 463.8L1330 464.0L1331 464.0L1332 463.3L1333 463.5L1334 463.7L1335 462.2L1336 464.1L1337 464.0L1338 462.6L1339 463.3L1340 463.4L1341 463.0L1342 463.3L1343 463.7L1344 462.8L1345 463.8L1346 464.0L1347 463.0L1348 464.0L1349 464.1L1350 464.1L1351 462.9L1352 464.1L1353 462.6L1354 463.7L1355 463.7L1356 463.3L1357 464.1L1358 463.3L1359 462.8L1360 463.6L1361 464.1L1362 463.8L1363 463.2L1364 463.3L1365 463.4L1366 464.0L1367 463.6L1368 463.3L1369 463.8L1370 463.1L1371 463.3L1372 463.1L1373 462.6L1374 463.4L1375 463.3L1376 462.6L1377 463.0L1378 463.5L1379 463.3L1380 464.0L1381 463.2L1382 463.7L1383 463.4L1384 464.1L1385 464.0L1386 463.6L1387 463.3L1388 463.4L1389 463.7L1390 463.7L1391 463.1L1392 463.4L1393 463.6L1394 463.0L1395 463.8L1396 463.1L1397 463.6L1398 463.5L1399 463.6L1400 463.8L1401 463.9L1402 463.4L1403 463.9L1404 463.7L1405 463.7L1406 463.2L1407 463.8L1408 463.5L1409 463.4L1410 464.1L1411 463.3L1412 462.5L1413 463.0L1414 463.9L1415 463.3L1416 463.1L1417 463.6L1418 463.6L1419 463.5L1420 462.9L1421 463.8L1422 463.9L1423 462.7L1424 463.8L1425 463.9L1426 461.7L1427 462.9L1428 462.4L1429 463.6L1430 463.8L1431 464.1L1432 463.9L1433 461.3L1434 463.6L1435 463.2L1436 463.5L1437 463.6L1438 463.8L1439 463.8L1440 462.3L1441 464.0L1442 463.8L1443 464.1L1444 464.1L1445 464.1L1446 462.9L1447 463.6L1448 463.7L1449 463.8L1450 463.0L1451 463.1L1452 463.2L1453 463.8L1454 463.6L1455 463.8L1456 462.5L1457 463.5L1458 463.8L1459 464.1L1460 463.7L1461 464.1L1462 463.1L1463 463.1L1464 463.8L1465 463.8L1466 462.2L1467 462.9L1468 463.4L1469 463.1L1470 463.6L1471 463.5L1472 464.0L1473 463.8L1474 463.8L1475 462.9L1476 463.9L1477 463.7L1478 463.0L1479 464.0L1480 463.9L1481 463.6L1482 463.6L1483 463.9L1484 463.7L1485 463.9L1486 463.4L1487 463.3L1488 463.6L1489 462.4L1490 462.0L1491 463.4L1492 463.4L1493 463.8L1494 462.6L1495 463.3L1496 463.8L1497 463.9L1498 463.0L1499 462.9L1500 464.0L1501 463.6L1502 463.0L1503 462.9L1504 463.3L1505 463.8L1506 463.9L1507 463.2L1508 463.3L1509 463.4L1510 463.8L1511 463.6L1512 464.0L1513 463.6L1514 464.1L1515 464.0L1516 463.8L1517 463.8L1518 463.4L1519 462.2L1520 463.1L1521 463.5L1522 463.4L1523 463.7L1524 464.0L1525 464.1L1526 463.2L1527 463.2L1528 463.7L1529 463.3L1530 463.9L1531 463.2L1532 463.5L1533 463.2L1534 463.6L1535 463.9L1536 464.0L1537 464.1L1538 463.9L1539 462.8L1540 463.6L1541 463.8L1542 463.3L1543 462.4L1544 463.3L1545 463.5L1546 463.3L1547 464.1L1548 464.1L1549 463.0L1550 463.7L1551 463.9L1552 463.7L1553 464.0L1554 463.9L1555 463.9L1556 464.0L1557 464.0L1558 464.0L1559 463.9L1560 463.8L1561 463.7L1562 463.8L1563 463.8L1564 463.4L1565 463.8L1566 463.5L1567 463.7L1568 463.7L1569 463.9L1570 462.2L1571 463.4L1572 464.0L1573 463.6L1574 464.1L1575 463.1L1576 463.7L1577 463.7L1578 463.0L1579 463.2L1580 463.7L1581 463.5L1582 463.1L1583 463.8L1584 463.7L1585 463.3L1586 463.8L1587 463.7L1588 463.2L1589 463.9L1590 463.6L1591 463.9L1592 463.5L1593 463.1L1594 463.4L1595 463.4L1596 463.8L1597 463.2L1598 464.0L1599 463.6L1600 463.6L1601 464.1L1602 463.9L1603 463.6L1604 463.5L1605 464.1L1606 463.4L1607 464.0L1608 464.0L1609 463.9L1610 464.0L1611 463.6L1612 464.0L1613 463.8L1614 462.8L1615 463.7L1616 462.7L1617 462.7L1618 463.9L1619 463.9L1620 463.6L1621 463.5L1622 463.0L1623 464.1L1624 464.1L1625 463.8L1626 463.4L1627 462.9L1628 464.0L1629 463.6L1630 463.9L1631 462.7L1632 462.8L1633 463.9L1634 463.6L1635 463.9L1636 463.6L1637 463.4L1638 463.9L1639 463.9L1640 463.0L1641 462.9L1642 463.5L1643 463.1L1644 463.7L1645 463.5L1646 463.4L1647 462.6L1648 463.4L1649 464.0L1650 464.0L1651 462.2L1652 463.0L1653 463.6L1654 463.8L1655 463.0L1656 463.8L1657 463.8L1658 463.2L1659 463.6L1660 462.8L1661 463.8L1662 463.7L1663 463.1L1664 463.5L1665 463.3L1666 463.0L1667 463.6L1668 463.9L1669 463.6L1670 464.0L1671 463.7L1672 462.7L1673 463.5L1674 463.5L1675 462.7L1676 463.3L1677 463.4L1678 463.7L1679 463.3L1680 462.8L1681 463.9L1682 463.8L1683 464.0L1684 464.0L1685 463.4L1686 462.7L1687 462.6L1688 463.6L1689 463.8L1690 463.4L1691 463.4L1692 463.1L1693 462.9L1694 463.5L1695 463.6L1696 464.0L1697 464.0L1698 463.9L1699 463.7L1700 463.9L1701 463.5L1702 463.8L1703 463.1L1704 463.6L1705 463.7L1706 463.6L1707 463.5L1708 463.4L1709 463.7L1710 464.1L1711 463.9L1712 463.4L1713 463.6L1714 463.8L1715 463.6L1716 463.5L1717 463.9L1718 463.7L1719 463.8L1720 463.4L1721 463.3L1722 464.1L1723 463.7L1724 463.9L1725 463.8L1726 463.6L1727 464.0L1728 464.0L1729 463.9L1730 463.9L1731 463.2L1732 464.1L1733 463.3L1734 464.0L1735 463.6L1736 462.6L1737 463.3L1738 463.9L1739 463.4L1740 462.9L1741 463.4L1742 463.8L1743 462.7L1744 463.3L1745 461.8L1746 463.9L1747 463.2L1748 463.4L1749 463.6L1750 463.7L1751 463.9L1751 472.2L1750 472.2L1749 472.6L1748 472.5L1747 472.9L1746 472.1L1745 473.3L1744 472.4L1743 473.1L1742 472.2L1741 472.0L1740 472.4L1739 472.8L1738 472.1L1737 472.5L1736 473.7L1735 472.5L1734 472.5L1733 472.2L1732 472.0L1731 472.9L1730 472.3L1729 472.9L1728 472.5L1727 473.1L1726 471.9L1725 472.3L1724 472.6L1723 472.6L1722 472.7L1721 474.4L1720 471.9L1719 472.7L1718 473.3L1717 472.2L1716 472.3L1715 472.0L1714 472.9L1713 472.2L1712 473.3L1711 472.0L1710 472.3L1709 472.2L1708 473.1L1707 472.4L1706 473.3L1705 472.7L1704 472.4L1703 472.0L1702 472.5L1701 472.2L1700 472.2L1699 472.9L1698 472.6L1697 472.4L1696 471.9L1695 472.1L1694 472.8L1693 472.4L1692 472.3L1691 472.2L1690 472.0L1689 472.4L1688 472.7L1687 472.0L1686 472.2L1685 472.4L1684 472.3L1683 472.4L1682 472.6L1681 472.2L1680 472.0L1679 472.2L1678 472.8L1677 472.4L1676 472.0L1675 472.2L1674 472.4L1673 472.0L1672 471.9L1671 472.0L1670 472.1L1669 472.0L1668 472.0L1667 473.0L1666 472.4L1665 472.7L1664 472.5L1663 472.0L1662 473.7L1661 472.8L1660 472.9L1659 472.7L1658 472.1L1657 472.6L1656 472.6L1655 472.0L1654 472.6L1653 472.0L1652 472.2L1651 472.2L1650 472.3L1649 472.5L1648 472.8L1647 472.3L1646 472.1L1645 472.1L1644 472.1L1643 472.6L1642 472.3L1641 472.7L1640 472.7L1639 472.5L1638 472.5L1637 472.7L1636 472.3L1635 472.8L1634 472.2L1633 473.3L1632 472.9L1631 472.2L1630 472.1L1629 472.7L1628 473.6L1627 472.5L1626 473.5L1625 473.6L1624 472.6L1623 472.4L1622 472.8L1621 472.8L1620 472.5L1619 472.3L1618 472.1L1617 472.0L1616 473.6L1615 472.6L1614 473.1L1613 473.6L1612 472.5L1611 473.4L1610 472.4L1609 473.3L1608 471.9L1607 472.0L1606 472.1L1605 471.9L1604 472.2L1603 472.0L1602 474.0L1601 471.9L1600 472.4L1599 472.7L1598 472.4L1597 472.0L1596 472.8L1595 473.1L1594 472.7L1593 472.1L1592 472.4L1591 472.1L1590 472.8L1589 472.9L1588 472.5L1587 472.4L1586 471.9L1585 472.2L1584 472.1L1583 472.0L1582 472.9L1581 471.9L1580 472.7L1579 472.0L1578 473.8L1577 472.4L1576 472.7L1575 473.1L1574 472.0L1573 472.0L1572 472.0L1571 472.3L1570 472.0L1569 473.1L1568 472.1L1567 472.9L1566 473.9L1565 472.1L1564 473.1L1563 471.9L1562 472.5L1561 472.3L1560 472.7L1559 472.6L1558 471.9L1557 472.5L1556 473.0L1555 472.4L1554 472.8L1553 472.5L1552 472.2L1551 472.1L1550 472.0L1549 473.2L1548 473.2L1547 472.1L1546 472.0L1545 472.4L1544 472.4L1543 472.8L1542 472.6L1541 474.1L1540 472.6L1539 473.8L1538 472.6L1537 472.1L1536 472.1L1535 472.3L1534 473.4L1533 473.9L1532 472.1L1531 472.5L1530 472.3L1529 472.5L1528 472.6L1527 472.4L1526 472.8L1525 472.1L1524 472.5L1523 472.5L1522 472.1L1521 472.0L1520 473.3L1519 472.9L1518 472.5L1517 472.3L1516 472.3L1515 472.3L1514 473.4L1513 472.9L1512 472.0L1511 473.7L1510 472.8L1509 472.2L1508 472.1L1507 472.4L1506 472.6L1505 472.1L1504 472.8L1503 473.1L1502 474.6L1501 472.1L1500 472.3L1499 472.6L1498 472.2L1497 472.2L1496 472.4L1495 472.8L1494 472.9L1493 473.2L1492 472.6L1491 473.8L1490 472.0L1489 472.1L1488 472.2L1487 472.0L1486 472.4L1485 472.5L1484 473.2L1483 471.9L1482 472.1L1481 472.5L1480 472.4L1479 472.1L1478 472.8L1477 472.2L1476 472.7L1475 472.0L1474 472.9L1473 472.2L1472 471.9L1471 472.9L1470 473.7L1469 472.5L1468 472.4L1467 473.7L1466 472.1L1465 472.8L1464 472.4L1463 472.7L1462 472.2L1461 473.3L1460 473.0L1459 472.8L1458 471.9L1457 472.1L1456 472.6L1455 472.0L1454 472.2L1453 473.0L1452 472.4L1451 472.7L1450 472.0L1449 472.3L1448 472.4L1447 472.1L1446 472.6L1445 472.5L1444 472.0L1443 472.1L1442 472.4L1441 472.4L1440 473.2L1439 473.0L1438 472.0L1437 472.6L1436 472.8L1435 472.8L1434 472.1L1433 472.9L1432 472.3L1431 472.6L1430 472.2L1429 473.4L1428 472.4L1427 472.0L1426 472.7L1425 473.1L1424 472.2L1423 472.4L1422 472.1L1421 472.2L1420 472.5L1419 473.2L1418 472.6L1417 472.5L1416 473.4L1415 472.2L1414 472.6L1413 472.7L1412 473.1L1411 471.9L1410 472.8L1409 472.7L1408 472.3L1407 472.7L1406 472.7L1405 472.9L1404 472.6L1403 472.9L1402 472.0L1401 472.2L1400 472.7L1399 472.3L1398 472.4L1397 472.4L1396 473.1L1395 472.4L1394 472.6L1393 472.7L1392 472.1L1391 472.1L1390 472.1L1389 472.0L1388 472.6L1387 472.8L1386 472.1L1385 472.3L1384 472.1L1383 472.4L1382 472.0L1381 472.0L1380 473.0L1379 472.4L1378 473.0L1377 472.3L1376 472.0L1375 471.9L1374 472.5L1373 472.3L1372 472.8L1371 472.6L1370 472.2L1369 472.2L1368 472.5L1367 472.2L1366 472.0L1365 472.1L1364 473.5L1363 472.4L1362 472.2L1361 472.3L1360 471.9L1359 472.5L1358 472.1L1357 472.1L1356 472.7L1355 471.9L1354 473.1L1353 472.0L1352 472.5L1351 472.3L1350 472.3L1349 472.6L1348 472.8L1347 472.4L1346 472.3L1345 472.5L1344 472.5L1343 472.9L1342 472.3L1341 472.5L1340 472.1L1339 472.3L1338 472.6L1337 472.2L1336 472.9L1335 472.8L1334 472.1L1333 472.7L1332 472.0L1331 472.5L1330 472.7L1329 472.8L1328 472.2L1327 472.0L1326 472.7L1325 473.0L1324 472.1L1323 473.1L1322 472.1L1321 472.3L1320 472.7L1319 472.7L1318 472.4L1317 472.8L1316 472.0L1315 472.2L1314 472.4Z" fill="#fff22c"/>
<path d="M439.5 462V560M877.5 470V540M1313.5 462V560" stroke="#ffee20" stroke-width="1" opacity=".8" fill="none"/>
<path d="M439.5 560V652M877 540V669M1313.5 560V652" stroke="#ffee20" stroke-width="1" opacity=".42" fill="none"/>
<path d="M3.5 640V672" stroke="#fff22c" stroke-width="1.4" fill="none"/>
<path d="M1750 473V540" stroke="#fff22c" stroke-width="1.6" opacity=".8" fill="none"/>
<path d="M3 713.3L4 713.7L5 713.7L6 714.4L7 714.7L8 714.6L9 714.6L10 714.6L11 714.5L12 713.7L13 714.2L14 714.6L15 713.0L16 714.5L17 714.6L18 714.6L19 713.9L20 714.7L21 713.9L22 714.5L23 714.6L24 713.2L25 714.1L26 714.1L27 713.7L28 713.6L29 713.5L30 713.7L31 714.0L32 714.0L33 714.5L34 714.1L35 714.1L36 714.7L37 714.7L38 714.5L39 714.3L40 713.4L41 714.0L42 713.1L43 713.9L44 713.1L45 714.4L46 714.1L47 714.2L48 714.7L49 713.4L50 713.6L51 714.5L52 713.4L53 713.8L54 714.6L55 713.9L56 714.4L57 713.6L58 714.4L59 714.2L60 714.7L61 714.1L62 714.6L63 713.7L64 713.9L65 713.2L66 714.5L67 714.6L68 714.1L69 714.6L70 714.4L71 714.1L72 714.2L73 714.7L74 714.0L75 714.6L76 714.3L77 713.9L78 714.7L79 714.7L80 714.2L81 713.6L82 714.3L83 714.4L84 714.6L85 714.3L86 713.1L87 714.0L88 714.4L89 713.7L90 714.1L91 714.0L92 714.0L93 713.4L94 714.6L95 714.5L96 714.5L97 714.3L98 714.1L99 713.4L100 714.3L101 714.5L102 713.6L103 713.9L104 712.0L105 714.3L106 714.1L107 713.5L108 714.3L109 714.5L110 714.5L111 714.0L112 713.3L113 714.2L114 714.0L115 714.4L116 714.7L117 714.0L118 714.7L119 714.0L120 714.5L121 714.2L122 714.1L123 714.6L124 714.4L125 714.1L126 713.8L127 714.5L128 714.6L129 714.1L130 714.4L131 714.0L132 714.5L133 713.5L134 713.6L135 714.3L136 713.8L137 712.6L138 713.9L139 714.4L140 714.3L141 714.0L142 714.3L143 713.7L144 714.6L145 713.9L146 714.5L147 714.3L148 713.9L149 713.8L150 714.3L151 712.7L152 713.3L153 714.4L154 714.0L155 713.8L156 714.2L157 714.6L158 714.5L159 713.8L160 714.2L161 714.7L162 711.8L163 713.0L164 714.7L165 714.1L166 713.7L167 712.7L168 714.4L169 714.6L170 714.3L171 714.4L172 713.3L173 714.7L174 713.8L175 714.1L176 714.0L177 713.4L178 714.2L179 713.6L180 713.0L181 713.7L182 714.6L183 714.1L184 714.6L185 714.6L186 714.4L187 714.5L188 714.5L189 714.6L190 714.6L191 714.2L192 714.2L193 714.6L194 713.8L195 713.7L196 713.7L197 714.3L198 713.6L199 714.7L200 714.4L201 714.1L202 713.2L203 713.6L204 713.8L205 714.3L206 713.7L207 714.4L208 714.4L209 714.5L210 714.0L211 714.7L212 713.3L213 714.4L214 713.8L215 714.6L216 713.7L217 714.3L218 714.7L219 714.5L220 714.1L221 712.9L222 713.4L223 714.4L224 714.1L225 714.7L226 713.9L227 714.4L228 714.5L229 714.6L230 714.3L231 713.9L232 713.4L233 714.0L234 714.5L235 713.9L236 714.2L237 713.9L238 714.0L239 713.4L240 713.4L241 713.7L242 713.4L243 714.6L244 714.6L245 714.2L246 714.2L247 714.5L248 713.7L249 713.0L250 712.4L251 714.6L252 713.5L253 714.5L254 714.0L255 713.8L256 713.5L257 714.5L258 714.3L259 714.3L260 712.5L261 714.3L262 714.4L263 713.8L264 714.3L265 714.1L266 714.0L267 713.9L268 713.6L269 713.8L270 714.4L271 714.4L272 714.3L273 714.1L274 714.5L275 713.9L276 714.7L277 714.5L278 714.2L279 714.0L280 713.8L281 712.0L282 714.3L283 714.3L284 714.0L285 714.6L286 714.5L287 714.2L288 714.0L289 714.0L290 714.5L291 713.6L292 714.6L293 714.0L294 714.6L295 714.4L296 714.5L297 713.9L298 714.3L299 712.3L300 714.1L301 712.9L302 714.1L303 714.2L304 714.5L305 713.7L306 713.2L307 714.2L308 714.0L309 712.9L310 713.7L311 714.1L312 714.7L313 714.3L314 712.6L315 714.6L316 714.3L317 714.0L318 713.9L319 714.2L320 714.5L321 713.9L322 713.6L323 714.5L324 714.7L325 714.2L326 713.7L327 713.8L328 714.2L329 713.6L330 714.7L331 714.4L332 714.4L333 714.2L334 714.6L335 714.4L336 714.0L337 714.6L338 714.3L339 713.4L340 714.3L341 714.5L342 713.9L343 713.7L344 713.9L345 714.7L346 714.6L347 713.4L348 713.8L349 713.8L350 714.7L351 713.1L352 714.5L353 714.2L354 714.3L355 713.8L356 714.2L357 714.2L358 714.0L359 714.6L360 714.5L361 713.0L362 713.6L363 714.6L364 714.4L365 713.6L366 714.6L367 714.6L368 714.0L369 714.6L370 714.5L371 714.5L372 714.6L373 714.1L374 714.4L375 713.6L376 714.6L377 714.5L378 713.3L379 714.2L380 713.7L381 713.9L382 713.5L383 714.5L384 713.5L385 714.2L386 714.6L387 714.7L388 714.0L389 714.3L390 713.9L391 714.1L392 714.6L393 714.2L394 713.5L395 714.7L396 714.6L397 714.4L398 714.1L399 714.2L400 714.1L401 713.8L402 714.3L403 713.4L404 713.8L405 714.0L406 714.2L407 714.0L408 713.5L409 713.3L410 714.3L411 713.4L412 712.5L413 714.5L414 714.2L415 714.6L416 713.6L417 713.5L418 714.4L419 714.4L420 714.4L421 714.2L422 713.7L423 714.0L424 713.9L425 714.2L426 713.9L427 714.5L428 714.2L429 713.9L430 713.1L431 714.1L432 714.7L433 713.9L434 712.0L435 713.6L436 713.5L437 714.4L438 714.3L439 714.4L440 714.2L441 713.9L442 713.7L443 714.5L444 714.0L445 713.5L446 714.3L447 714.4L448 714.5L449 714.2L450 713.0L451 714.2L452 712.9L453 713.2L454 714.0L455 714.3L456 714.4L457 714.1L458 713.3L459 713.2L460 714.2L461 713.6L462 713.9L463 714.0L464 713.5L465 714.6L466 714.4L467 714.2L468 714.5L469 714.7L470 713.8L471 714.2L472 713.7L473 714.3L474 714.5L475 714.6L476 714.5L477 714.1L478 713.9L479 714.1L480 714.0L481 714.4L482 714.6L483 714.0L484 714.5L485 713.2L486 713.0L487 713.8L488 714.2L489 714.3L490 714.0L491 714.3L492 714.0L493 714.6L494 714.2L495 714.4L496 713.2L497 714.2L498 714.4L499 714.1L500 713.7L501 714.5L502 714.2L503 714.4L504 714.1L505 714.4L506 713.5L507 714.3L508 714.0L509 714.0L510 714.5L511 713.9L512 714.0L513 714.7L514 714.6L515 714.5L516 713.8L517 714.2L518 713.8L519 713.4L520 714.6L521 714.0L522 714.6L523 714.5L524 714.5L525 714.1L526 714.2L527 713.8L528 714.1L529 713.2L530 713.9L531 714.0L532 713.1L533 714.7L534 714.6L535 714.4L536 714.4L537 714.4L538 714.6L539 714.1L540 714.4L541 714.7L542 714.5L543 714.1L544 714.6L545 713.7L546 713.8L547 713.6L548 714.2L549 713.8L550 714.2L551 713.9L552 713.6L553 714.5L554 714.4L555 714.5L556 713.9L557 713.9L558 714.4L559 713.9L560 714.6L561 714.3L562 714.4L563 714.5L564 713.3L565 714.0L566 714.0L567 714.5L568 713.3L569 714.7L570 714.2L571 713.2L572 714.4L573 713.3L574 713.4L575 714.5L576 714.4L577 714.1L578 714.4L579 714.1L580 714.5L581 714.1L582 713.3L583 714.4L584 714.2L585 714.3L586 713.5L587 713.8L588 713.7L589 714.6L590 714.6L591 714.6L592 713.1L593 713.8L594 713.6L595 714.0L596 714.7L597 714.4L598 714.2L599 713.8L600 714.4L601 714.2L602 714.5L603 714.5L604 714.0L605 714.5L606 714.3L607 714.5L608 713.4L609 713.8L610 714.7L611 714.0L612 714.1L613 714.3L614 713.5L615 714.2L616 712.8L617 714.2L618 714.5L619 714.3L620 713.9L621 714.6L622 714.2L623 714.5L624 714.5L625 712.9L626 714.0L627 713.7L628 714.7L629 713.9L630 714.1L631 714.5L632 714.1L633 714.6L634 714.2L635 714.1L636 714.4L637 714.5L638 713.8L639 714.6L640 714.4L641 714.5L642 714.5L643 712.7L644 714.4L645 713.6L646 714.3L647 714.2L648 714.7L649 713.3L650 713.9L651 714.0L652 713.9L653 713.8L654 714.4L655 714.2L656 712.7L657 714.4L658 714.5L659 713.8L660 714.2L661 714.1L662 714.1L663 713.7L664 714.3L665 713.9L666 714.4L667 713.2L668 714.7L669 714.3L670 714.5L671 714.5L672 713.4L673 714.6L674 713.6L675 714.5L676 714.4L677 714.7L678 714.7L679 714.1L680 714.1L681 713.6L682 713.6L683 713.5L684 714.3L685 713.6L686 713.6L687 714.1L688 714.4L689 713.9L690 713.7L691 714.4L692 714.6L693 714.1L694 713.7L695 714.7L696 714.6L697 714.1L698 713.2L699 713.7L700 714.1L701 714.3L702 714.2L703 714.5L704 714.5L705 714.3L706 714.1L707 714.1L708 713.6L709 713.9L710 714.1L711 714.7L712 713.7L713 714.4L714 714.5L715 714.6L716 714.6L717 714.5L718 713.9L719 714.5L720 714.2L721 713.8L722 713.5L723 714.7L724 714.3L725 714.3L726 714.4L727 714.0L728 713.7L729 714.7L730 714.1L731 713.1L732 713.4L733 714.3L734 712.3L735 714.0L736 712.8L737 714.2L738 714.2L739 713.9L740 713.1L741 714.6L742 713.5L743 712.2L744 713.7L745 713.7L746 714.3L747 714.3L748 712.7L749 714.1L750 714.2L751 713.2L752 714.3L753 714.5L754 714.1L755 714.7L756 714.3L757 713.6L758 713.3L759 714.5L760 713.7L761 713.7L762 713.7L763 713.6L764 713.4L765 714.0L766 714.3L767 714.3L768 714.2L769 714.4L770 714.2L771 714.1L772 713.6L773 714.5L774 714.4L775 714.6L776 714.3L777 714.5L778 712.9L779 713.5L780 713.8L781 714.3L782 714.2L783 713.4L784 714.5L785 713.7L786 714.2L787 713.9L788 714.3L789 712.7L790 713.8L791 712.5L792 714.5L793 714.4L794 713.6L795 713.7L796 714.3L797 713.7L798 714.3L799 714.0L800 714.6L801 713.5L802 713.7L803 714.6L804 713.2L805 713.7L806 714.3L807 714.4L808 713.0L809 713.3L810 714.3L811 713.8L812 714.3L813 713.8L814 714.6L815 714.2L816 714.3L817 713.1L818 713.7L819 713.6L820 714.2L821 714.5L822 713.4L823 713.9L824 712.3L825 714.7L826 714.4L827 714.1L828 714.3L829 714.2L830 713.1L831 714.3L832 714.5L833 714.0L834 714.0L835 713.8L836 714.0L837 714.6L838 714.0L839 712.7L840 713.3L841 714.6L842 713.6L843 714.0L844 714.3L845 713.7L846 714.3L847 713.7L848 714.2L849 714.4L850 714.2L851 714.4L852 714.2L853 714.6L854 714.0L855 714.1L856 713.8L857 712.8L858 714.0L859 713.9L860 714.4L861 713.3L862 714.7L863 713.9L864 714.6L865 714.4L866 714.4L867 714.1L868 713.4L869 714.3L870 713.9L871 714.1L872 714.1L873 713.6L874 714.2L875 714.5L876 714.6L877 714.4L878 714.1L879 714.4L880 713.6L881 714.0L882 713.9L883 714.2L884 713.9L885 714.1L886 714.3L887 714.6L888 713.4L889 714.4L890 714.3L891 713.6L892 714.5L893 714.5L894 714.0L895 713.9L896 714.0L897 714.4L898 713.9L899 714.1L900 714.3L901 714.3L902 713.7L903 714.0L904 714.6L905 714.3L906 713.9L907 714.0L908 713.7L909 714.0L910 713.9L911 712.9L912 714.2L913 714.1L914 714.6L915 714.4L916 714.3L917 713.2L918 714.3L919 714.3L920 714.3L921 713.4L922 713.9L923 713.6L924 714.0L925 713.0L926 714.4L927 714.0L928 714.7L929 713.0L930 713.8L931 714.6L932 713.9L933 714.6L934 714.4L935 714.1L936 714.2L937 714.2L938 714.0L939 714.3L940 714.5L941 714.7L942 713.5L943 714.4L944 714.7L945 713.5L946 713.9L947 714.0L948 714.1L949 714.0L950 714.4L951 713.5L952 713.8L953 714.5L954 713.9L955 713.9L956 712.9L957 713.6L958 714.3L959 713.6L960 714.2L961 714.3L962 714.4L963 713.7L964 713.0L965 713.8L966 713.9L967 714.1L968 712.9L969 714.5L970 714.4L971 713.5L972 714.7L973 714.3L974 714.6L975 712.5L976 713.4L977 714.2L978 714.5L979 714.6L980 714.7L981 713.7L982 714.5L983 714.4L984 714.7L985 714.3L986 713.2L987 714.3L988 714.3L989 714.5L990 713.8L991 714.6L992 712.8L993 714.4L994 713.9L995 714.4L996 714.1L997 714.6L998 714.0L999 712.9L1000 714.3L1001 712.9L1002 714.5L1003 713.8L1004 713.9L1005 714.7L1006 714.6L1007 713.0L1008 714.7L1009 714.7L1010 712.7L1011 714.3L1012 714.2L1013 713.7L1014 714.6L1015 714.6L1016 714.6L1017 714.1L1018 714.3L1019 714.3L1020 714.1L1021 713.4L1022 714.3L1023 714.1L1024 714.5L1025 713.7L1026 713.7L1027 711.9L1028 713.7L1029 714.0L1030 713.9L1031 713.5L1032 714.5L1033 714.0L1034 713.6L1035 714.3L1036 714.2L1037 714.0L1038 713.5L1039 713.4L1040 714.2L1041 714.3L1042 714.5L1043 713.7L1044 714.6L1045 714.2L1046 714.2L1047 714.5L1048 714.2L1049 714.6L1050 714.3L1051 714.2L1052 714.5L1053 714.5L1054 711.9L1055 714.1L1056 714.6L1057 714.2L1058 714.6L1059 714.5L1060 714.6L1061 713.6L1062 714.2L1063 714.6L1064 714.0L1065 713.8L1066 714.5L1067 713.5L1068 714.7L1069 713.2L1070 714.0L1071 714.2L1072 713.7L1073 714.3L1074 713.2L1075 714.5L1076 714.5L1077 713.2L1078 713.9L1079 714.1L1080 713.1L1081 713.2L1082 714.5L1083 714.2L1084 712.9L1085 713.8L1086 714.1L1087 714.6L1088 713.6L1089 714.5L1090 714.5L1091 714.1L1092 714.2L1093 714.4L1094 714.4L1095 714.1L1096 714.1L1097 713.9L1098 714.2L1099 714.6L1100 714.6L1101 714.5L1102 714.0L1103 714.3L1104 714.4L1105 714.0L1106 713.9L1107 714.4L1108 713.9L1109 714.2L1110 713.7L1111 713.5L1112 714.4L1113 714.1L1114 714.1L1115 714.1L1116 714.2L1117 714.2L1118 713.9L1119 714.7L1120 714.7L1121 713.7L1122 713.5L1123 714.1L1124 714.2L1125 713.0L1126 713.2L1127 713.9L1128 714.6L1129 713.9L1130 714.5L1131 713.8L1132 713.3L1133 713.5L1134 714.3L1135 713.2L1136 714.3L1137 714.3L1138 714.0L1139 713.3L1140 713.3L1141 714.2L1142 714.1L1143 713.9L1144 714.4L1145 714.1L1146 714.0L1147 713.6L1148 713.7L1149 713.7L1150 713.5L1151 714.0L1152 714.0L1153 713.9L1154 714.4L1155 714.2L1156 713.1L1157 714.2L1158 714.4L1159 714.3L1160 714.5L1161 714.4L1162 713.8L1163 712.7L1164 713.7L1165 714.0L1166 714.1L1167 713.9L1168 712.7L1169 714.3L1170 714.5L1171 712.9L1172 713.9L1173 714.3L1174 714.6L1175 714.6L1176 713.8L1177 714.5L1178 714.2L1179 714.1L1180 713.9L1181 714.5L1182 714.6L1183 713.9L1184 714.1L1185 714.3L1186 713.2L1187 713.4L1188 714.2L1189 713.6L1190 713.4L1191 714.5L1192 713.4L1193 714.4L1194 714.5L1195 714.0L1196 714.4L1197 714.4L1198 712.2L1199 714.2L1200 713.7L1201 713.6L1202 713.8L1203 714.6L1204 713.9L1205 712.7L1206 713.3L1207 714.4L1208 713.7L1209 714.0L1210 714.2L1211 713.9L1212 714.4L1213 713.3L1214 714.5L1215 714.2L1216 713.1L1217 712.9L1218 714.3L1219 714.4L1220 714.6L1221 714.3L1222 713.9L1223 712.1L1224 713.3L1225 714.0L1226 714.2L1227 714.1L1228 714.6L1229 713.4L1230 713.9L1231 714.3L1232 713.2L1233 714.1L1234 713.4L1235 714.6L1236 714.5L1237 712.4L1238 713.9L1239 714.4L1240 713.8L1241 714.7L1242 713.6L1243 714.1L1244 714.5L1245 714.3L1246 714.2L1247 714.3L1248 713.4L1249 714.0L1250 714.4L1251 713.7L1252 713.4L1253 714.1L1254 713.7L1255 713.8L1256 712.9L1257 714.3L1258 714.2L1259 714.4L1260 714.6L1261 714.3L1262 714.6L1263 714.1L1264 713.5L1265 714.6L1266 714.7L1267 714.1L1268 714.0L1269 714.7L1270 714.7L1271 714.4L1272 714.7L1273 714.2L1274 713.8L1275 713.3L1276 713.4L1277 714.6L1278 714.3L1279 714.4L1280 714.6L1281 714.6L1282 713.1L1283 714.6L1284 713.2L1285 713.5L1286 713.2L1287 714.0L1288 714.1L1289 713.2L1290 713.0L1291 713.1L1292 714.3L1293 713.6L1294 713.3L1295 714.2L1296 713.6L1297 712.5L1298 713.1L1299 714.5L1300 713.5L1301 714.0L1302 713.7L1303 714.4L1304 713.2L1305 714.3L1306 714.4L1307 714.1L1308 714.2L1309 714.1L1310 713.9L1311 714.4L1312 714.1L1313 714.1L1314 714.0L1315 714.5L1316 713.5L1317 714.3L1318 714.1L1319 714.0L1320 714.4L1321 714.1L1322 713.3L1323 714.3L1324 714.0L1325 713.3L1326 714.4L1327 714.4L1328 714.4L1329 714.6L1330 712.5L1331 714.7L1332 712.9L1333 714.3L1334 714.6L1335 713.2L1336 714.3L1337 713.9L1338 714.1L1339 713.0L1340 713.8L1341 714.4L1342 713.0L1343 714.5L1344 714.4L1345 714.5L1346 713.4L1347 714.4L1348 713.9L1349 714.4L1350 714.1L1351 714.6L1352 714.7L1353 713.2L1354 713.3L1355 714.5L1356 714.2L1357 714.2L1358 713.8L1359 714.4L1360 713.3L1361 713.9L1362 713.4L1363 714.5L1364 713.7L1365 713.7L1366 713.6L1367 714.6L1368 712.9L1369 714.5L1370 713.9L1371 713.2L1372 713.5L1373 713.7L1374 714.1L1375 713.9L1376 713.9L1377 714.4L1378 714.5L1379 714.5L1380 714.7L1381 714.5L1382 713.8L1383 713.2L1384 714.1L1385 714.6L1386 714.7L1387 714.1L1388 713.9L1389 714.4L1390 712.8L1391 713.6L1392 714.0L1393 714.6L1394 714.6L1395 714.7L1396 714.1L1397 713.6L1398 714.3L1399 714.2L1400 714.1L1401 713.6L1402 714.4L1403 714.6L1404 714.3L1405 714.1L1406 714.6L1407 714.2L1408 714.0L1409 714.1L1410 714.6L1411 714.1L1412 714.5L1413 714.6L1414 713.7L1415 712.8L1416 713.4L1417 713.5L1418 714.4L1419 714.4L1420 714.0L1421 714.4L1422 714.7L1423 714.5L1424 712.8L1425 713.9L1426 714.5L1427 714.4L1428 714.5L1429 714.4L1430 714.1L1431 713.2L1432 713.8L1433 714.7L1434 714.0L1435 713.4L1436 713.7L1437 713.4L1438 714.2L1439 714.1L1440 714.4L1441 713.6L1442 714.1L1443 713.1L1444 713.3L1445 714.3L1446 714.6L1447 714.2L1448 713.5L1449 714.5L1450 714.7L1451 714.5L1452 714.6L1453 714.1L1454 714.4L1455 713.6L1456 714.6L1457 714.6L1458 714.1L1459 713.8L1460 712.9L1461 714.1L1462 714.0L1463 714.4L1464 714.0L1465 713.2L1466 714.6L1467 714.3L1468 714.2L1469 714.5L1470 714.4L1471 714.3L1472 713.5L1473 714.6L1474 714.2L1475 714.7L1476 714.5L1477 714.4L1478 714.5L1479 714.0L1480 713.9L1481 713.7L1482 714.5L1483 714.2L1484 714.0L1485 714.0L1486 713.6L1487 714.2L1488 714.5L1489 714.3L1490 714.5L1491 714.0L1492 714.3L1493 714.5L1494 713.7L1495 713.5L1496 714.3L1497 713.1L1498 714.2L1499 714.1L1500 714.0L1501 713.5L1502 714.4L1503 714.7L1504 714.1L1505 714.0L1506 714.1L1507 714.6L1508 714.4L1509 714.6L1510 714.7L1511 714.5L1512 714.6L1513 713.4L1514 714.2L1515 714.3L1516 713.7L1517 713.9L1518 714.5L1519 714.0L1520 714.0L1521 714.6L1522 712.7L1523 714.0L1524 714.1L1525 712.7L1526 714.5L1527 714.5L1528 714.3L1529 714.6L1530 714.5L1531 714.5L1532 714.0L1533 713.5L1534 714.1L1535 713.8L1536 713.7L1537 714.3L1538 714.6L1539 714.2L1540 712.3L1541 713.9L1542 713.9L1543 714.1L1544 714.3L1545 713.7L1546 714.0L1547 714.5L1548 714.6L1549 714.6L1550 714.3L1551 713.2L1552 714.0L1553 714.3L1554 714.4L1555 713.1L1556 714.7L1557 714.2L1558 714.0L1559 713.0L1560 714.0L1561 713.2L1562 714.3L1563 714.4L1564 714.2L1565 714.0L1566 714.1L1567 714.2L1568 714.6L1569 713.8L1570 714.5L1571 714.5L1572 713.2L1573 713.9L1574 712.6L1575 714.5L1576 714.2L1577 714.2L1578 714.4L1579 714.1L1580 714.4L1581 714.0L1582 714.6L1583 714.1L1584 714.6L1585 713.9L1586 714.3L1587 713.4L1588 713.2L1589 713.9L1590 713.5L1591 714.5L1592 714.1L1593 713.5L1594 714.5L1595 714.1L1596 714.5L1597 713.7L1598 713.4L1599 714.4L1600 714.6L1601 714.5L1602 714.3L1603 712.9L1604 714.3L1605 714.2L1606 714.6L1607 714.1L1608 714.6L1609 713.0L1610 714.6L1611 713.5L1612 714.0L1613 714.2L1614 714.2L1615 714.6L1616 714.7L1617 714.4L1618 714.6L1619 714.6L1620 713.6L1621 713.0L1622 713.8L1623 713.2L1624 713.3L1625 714.5L1626 714.4L1627 714.4L1628 714.5L1629 713.2L1630 714.6L1631 714.3L1632 714.6L1633 713.6L1634 713.8L1635 714.0L1636 714.5L1637 713.8L1638 713.5L1639 713.9L1640 714.4L1641 714.3L1642 714.0L1643 714.5L1644 713.6L1645 713.4L1646 714.6L1647 714.5L1648 712.7L1649 714.7L1650 714.6L1651 714.2L1652 713.3L1653 714.1L1654 714.2L1655 714.4L1656 714.6L1657 713.6L1658 713.3L1659 712.8L1660 713.9L1661 714.5L1662 714.1L1663 713.7L1664 714.4L1665 713.2L1666 714.0L1667 714.4L1668 713.6L1669 713.5L1670 713.8L1671 714.6L1672 714.4L1673 714.5L1674 714.0L1675 713.4L1676 714.1L1677 713.8L1678 713.1L1679 713.7L1680 712.6L1681 714.0L1682 714.4L1683 714.5L1684 714.5L1685 714.6L1686 713.3L1687 714.6L1688 714.7L1689 713.7L1690 714.0L1691 714.5L1692 714.2L1693 713.7L1694 714.1L1695 714.5L1696 714.3L1697 714.2L1698 714.3L1699 714.4L1700 713.2L1701 713.1L1702 714.1L1703 714.4L1704 714.7L1705 714.2L1706 714.6L1707 714.3L1708 714.0L1709 713.4L1710 714.5L1711 713.7L1712 714.4L1713 714.6L1714 712.9L1715 713.6L1716 713.4L1717 714.3L1718 713.4L1719 714.3L1720 713.6L1721 714.1L1722 714.7L1723 714.3L1724 714.1L1725 714.0L1726 713.7L1727 713.5L1728 714.6L1729 713.7L1730 712.5L1731 712.3L1732 713.8L1733 713.2L1734 714.4L1735 714.2L1736 713.6L1737 714.3L1738 714.6L1739 714.5L1740 714.2L1741 714.3L1742 712.8L1743 713.6L1744 713.7L1745 714.7L1746 714.4L1747 714.6L1748 714.4L1749 713.9L1750 714.0L1751 714.3L1751 724.0L1750 724.8L1749 725.0L1748 724.4L1747 723.3L1746 724.2L1745 724.4L1744 723.3L1743 724.9L1742 724.6L1741 724.0L1740 724.6L1739 724.3L1738 724.1L1737 723.5L1736 724.5L1735 724.1L1734 723.5L1733 723.7L1732 723.6L1731 723.3L1730 724.1L1729 723.4L1728 723.6L1727 723.5L1726 723.6L1725 725.9L1724 723.4L1723 723.7L1722 723.6L1721 723.6L1720 723.9L1719 724.6L1718 724.2L1717 723.5L1716 723.4L1715 723.9L1714 724.0L1713 723.4L1712 723.7L1711 724.1L1710 723.8L1709 723.8L1708 724.0L1707 724.3L1706 723.8L1705 723.3L1704 724.0L1703 725.0L1702 723.4L1701 724.2L1700 725.4L1699 723.4L1698 724.0L1697 723.7L1696 723.4L1695 724.6L1694 723.5L1693 724.1L1692 723.6L1691 724.6L1690 723.9L1689 723.5L1688 723.7L1687 723.6L1686 724.0L1685 723.4L1684 723.5L1683 724.6L1682 723.4L1681 724.4L1680 724.1L1679 723.8L1678 724.6L1677 723.8L1676 724.0L1675 723.4L1674 724.8L1673 724.3L1672 723.8L1671 723.4L1670 723.5L1669 724.5L1668 723.5L1667 723.6L1666 725.2L1665 724.2L1664 723.6L1663 724.3L1662 723.9L1661 723.9L1660 724.5L1659 724.0L1658 724.2L1657 723.6L1656 724.6L1655 724.5L1654 724.3L1653 723.6L1652 723.4L1651 723.4L1650 724.5L1649 723.7L1648 723.3L1647 723.4L1646 723.7L1645 724.6L1644 724.0L1643 724.1L1642 723.5L1641 724.3L1640 723.5L1639 723.5L1638 723.5L1637 724.0L1636 723.5L1635 723.8L1634 724.6L1633 724.2L1632 723.3L1631 726.2L1630 723.6L1629 724.1L1628 724.1L1627 724.3L1626 723.6L1625 723.5L1624 724.0L1623 724.0L1622 724.1L1621 724.3L1620 723.6L1619 724.3L1618 723.4L1617 723.8L1616 724.0L1615 723.6L1614 724.1L1613 723.8L1612 723.4L1611 723.8L1610 723.6L1609 723.7L1608 723.4L1607 724.4L1606 724.4L1605 723.9L1604 724.7L1603 724.4L1602 723.9L1601 723.5L1600 724.6L1599 723.7L1598 723.9L1597 723.7L1596 724.2L1595 723.7L1594 723.5L1593 723.4L1592 723.7L1591 723.3L1590 724.0L1589 724.7L1588 723.4L1587 723.3L1586 723.7L1585 723.5L1584 723.3L1583 724.1L1582 725.0L1581 723.9L1580 724.8L1579 723.3L1578 723.5L1577 725.3L1576 725.9L1575 724.3L1574 724.1L1573 723.9L1572 723.6L1571 723.5L1570 724.0L1569 723.8L1568 723.8L1567 723.5L1566 723.6L1565 724.2L1564 724.3L1563 723.6L1562 723.9L1561 724.3L1560 724.8L1559 723.5L1558 723.3L1557 723.3L1556 724.5L1555 723.9L1554 723.5L1553 723.4L1552 724.0L1551 724.3L1550 724.5L1549 724.7L1548 723.4L1547 724.2L1546 723.8L1545 723.6L1544 724.9L1543 724.5L1542 723.5L1541 723.4L1540 723.7L1539 724.0L1538 724.3L1537 723.4L1536 725.0L1535 725.4L1534 723.9L1533 723.4L1532 723.4L1531 723.6L1530 724.0L1529 723.9L1528 724.1L1527 723.4L1526 723.4L1525 724.5L1524 724.3L1523 723.9L1522 723.6L1521 724.7L1520 724.5L1519 724.8L1518 723.6L1517 723.3L1516 723.8L1515 723.3L1514 724.0L1513 723.4L1512 723.5L1511 723.9L1510 723.3L1509 725.5L1508 723.4L1507 723.7L1506 724.2L1505 723.7L1504 723.9L1503 723.8L1502 723.9L1501 723.4L1500 724.0L1499 723.9L1498 724.2L1497 723.5L1496 725.2L1495 723.8L1494 723.3L1493 723.5L1492 723.4L1491 723.9L1490 723.9L1489 723.6L1488 723.5L1487 723.6L1486 724.1L1485 724.2L1484 724.3L1483 723.4L1482 724.8L1481 723.4L1480 723.4L1479 723.9L1478 723.9L1477 723.9L1476 724.3L1475 723.5L1474 725.2L1473 724.2L1472 724.5L1471 723.5L1470 723.9L1469 723.5L1468 724.1L1467 723.9L1466 724.1L1465 723.5L1464 723.6L1463 723.5L1462 724.3L1461 724.3L1460 723.4L1459 723.9L1458 725.3L1457 723.3L1456 723.4L1455 724.8L1454 724.4L1453 724.9L1452 724.6L1451 724.1L1450 723.5L1449 723.5L1448 724.0L1447 723.4L1446 723.4L1445 724.4L1444 723.8L1443 723.9L1442 725.5L1441 723.8L1440 723.6L1439 723.7L1438 723.7L1437 724.3L1436 723.8L1435 723.8L1434 723.4L1433 723.8L1432 725.0L1431 723.4L1430 723.9L1429 725.2L1428 723.7L1427 723.6L1426 723.9L1425 724.0L1424 723.5L1423 723.8L1422 724.0L1421 723.9L1420 723.5L1419 723.4L1418 723.8L1417 724.8L1416 723.5L1415 723.7L1414 723.5L1413 724.3L1412 723.5L1411 723.5L1410 724.7L1409 724.4L1408 723.4L1407 723.5L1406 724.1L1405 723.8L1404 723.7L1403 723.4L1402 723.8L1401 724.7L1400 723.6L1399 723.4L1398 723.7L1397 723.3L1396 723.3L1395 723.7L1394 723.9L1393 723.6L1392 723.3L1391 723.6L1390 723.8L1389 723.8L1388 723.9L1387 723.3L1386 723.3L1385 724.3L1384 723.5L1383 723.4L1382 724.8L1381 723.8L1380 724.8L1379 723.4L1378 723.5L1377 723.3L1376 724.1L1375 724.0L1374 723.9L1373 723.6L1372 724.4L1371 723.9L1370 724.1L1369 723.5L1368 724.9L1367 724.9L1366 723.4L1365 723.4L1364 724.8L1363 723.6L1362 723.6L1361 723.8L1360 724.3L1359 723.5L1358 724.0L1357 724.6L1356 724.3L1355 724.1L1354 723.5L1353 723.4L1352 723.6L1351 723.5L1350 723.7L1349 723.3L1348 724.3L1347 723.3L1346 723.8L1345 723.8L1344 724.8L1343 724.0L1342 723.5L1341 724.5L1340 723.7L1339 724.8L1338 724.4L1337 724.4L1336 723.3L1335 723.5L1334 723.8L1333 723.4L1332 724.2L1331 724.1L1330 724.7L1329 726.0L1328 723.7L1327 724.0L1326 724.0L1325 725.0L1324 724.2L1323 723.9L1322 723.9L1321 724.8L1320 724.0L1319 723.5L1318 724.0L1317 723.7L1316 723.6L1315 724.8L1314 723.4L1313 723.4L1312 724.0L1311 723.5L1310 724.6L1309 723.6L1308 723.4L1307 723.4L1306 723.6L1305 723.9L1304 724.2L1303 724.1L1302 723.5L1301 723.5L1300 723.9L1299 723.4L1298 723.3L1297 723.5L1296 723.6L1295 725.1L1294 725.9L1293 724.5L1292 723.5L1291 723.3L1290 723.4L1289 724.1L1288 723.4L1287 723.4L1286 724.5L1285 725.5L1284 724.5L1283 724.1L1282 723.7L1281 724.6L1280 723.3L1279 723.7L1278 723.6L1277 723.6L1276 723.9L1275 724.1L1274 723.3L1273 723.5L1272 723.6L1271 723.4L1270 724.0L1269 723.7L1268 724.2L1267 723.3L1266 725.3L1265 723.5L1264 723.8L1263 724.5L1262 725.3L1261 723.5L1260 723.7L1259 723.6L1258 723.4L1257 724.5L1256 724.1L1255 723.7L1254 723.6L1253 724.0L1252 723.9L1251 723.4L1250 724.0L1249 724.6L1248 726.3L1247 723.9L1246 723.7L1245 723.5L1244 725.0L1243 723.4L1242 724.5L1241 723.6L1240 723.8L1239 724.2L1238 723.8L1237 723.3L1236 724.4L1235 724.2L1234 724.5L1233 723.8L1232 723.5L1231 724.6L1230 723.7L1229 724.6L1228 723.7L1227 723.7L1226 723.6L1225 724.9L1224 724.1L1223 725.3L1222 723.7L1221 723.6L1220 724.0L1219 723.7L1218 723.4L1217 724.6L1216 724.0L1215 723.4L1214 724.0L1213 723.6L1212 723.5L1211 725.3L1210 723.4L1209 723.5L1208 723.7L1207 724.2L1206 723.6L1205 724.1L1204 723.4L1203 724.1L1202 723.5L1201 724.6L1200 724.0L1199 723.4L1198 723.7L1197 723.5L1196 723.4L1195 723.8L1194 724.3L1193 723.5L1192 724.2L1191 723.8L1190 724.5L1189 725.0L1188 723.3L1187 724.5L1186 725.9L1185 724.4L1184 725.5L1183 723.4L1182 723.8L1181 723.4L1180 724.7L1179 723.4L1178 723.6L1177 724.2L1176 723.3L1175 723.7L1174 723.5L1173 723.4L1172 724.2L1171 723.3L1170 723.5L1169 723.5L1168 723.4L1167 725.4L1166 724.5L1165 723.6L1164 724.3L1163 723.4L1162 723.8L1161 724.6L1160 723.5L1159 723.6L1158 723.6L1157 723.5L1156 724.1L1155 723.6L1154 723.4L1153 724.0L1152 724.4L1151 723.4L1150 725.3L1149 723.5L1148 723.7L1147 723.8L1146 723.6L1145 723.6L1144 723.5L1143 723.6L1142 724.0L1141 723.3L1140 723.6L1139 723.6L1138 723.5L1137 724.4L1136 724.7L1135 724.6L1134 723.5L1133 724.0L1132 725.0L1131 723.4L1130 724.3L1129 724.2L1128 724.0L1127 724.7L1126 723.3L1125 723.6L1124 725.5L1123 724.2L1122 724.0L1121 723.8L1120 725.4L1119 723.9L1118 723.8L1117 724.4L1116 723.6L1115 725.4L1114 723.4L1113 724.1L1112 724.6L1111 723.7L1110 724.2L1109 723.5L1108 725.1L1107 723.5L1106 723.5L1105 724.7L1104 725.3L1103 723.6L1102 724.1L1101 723.6L1100 723.6L1099 723.5L1098 724.3L1097 724.2L1096 724.2L1095 723.8L1094 723.5L1093 723.8L1092 723.3L1091 723.8L1090 723.7L1089 724.0L1088 724.3L1087 723.7L1086 724.3L1085 723.5L1084 723.6L1083 723.6L1082 723.6L1081 724.1L1080 723.7L1079 723.6L1078 723.9L1077 723.4L1076 724.8L1075 724.5L1074 725.0L1073 723.8L1072 724.0L1071 723.4L1070 723.6L1069 723.6L1068 723.9L1067 723.5L1066 723.6L1065 723.4L1064 723.6L1063 723.8L1062 723.3L1061 723.8L1060 725.3L1059 724.4L1058 723.4L1057 723.4L1056 723.4L1055 725.4L1054 723.7L1053 724.2L1052 724.0L1051 724.4L1050 724.1L1049 723.5L1048 723.9L1047 724.8L1046 724.3L1045 724.1L1044 724.7L1043 724.5L1042 723.4L1041 724.3L1040 723.4L1039 723.8L1038 723.6L1037 723.6L1036 723.9L1035 723.7L1034 723.7L1033 723.5L1032 723.6L1031 724.4L1030 723.4L1029 723.3L1028 725.3L1027 723.7L1026 723.7L1025 723.7L1024 724.0L1023 723.5L1022 723.9L1021 723.4L1020 723.4L1019 724.6L1018 723.7L1017 723.4L1016 723.3L1015 723.8L1014 724.2L1013 725.3L1012 724.1L1011 723.4L1010 723.4L1009 723.8L1008 723.4L1007 725.0L1006 724.3L1005 726.4L1004 724.7L1003 723.9L1002 724.0L1001 724.4L1000 724.3L999 724.9L998 723.9L997 723.9L996 724.6L995 723.7L994 724.1L993 724.7L992 723.3L991 723.8L990 724.3L989 723.4L988 723.8L987 723.8L986 724.0L985 724.3L984 723.5L983 724.1L982 724.4L981 724.1L980 723.3L979 724.5L978 723.6L977 723.6L976 723.5L975 724.4L974 723.9L973 724.0L972 723.6L971 725.1L970 723.3L969 724.2L968 724.7L967 723.5L966 723.6L965 723.7L964 723.6L963 723.4L962 723.4L961 723.4L960 724.0L959 723.7L958 723.9L957 723.9L956 724.0L955 724.8L954 724.2L953 725.1L952 723.7L951 723.4L950 724.2L949 723.4L948 723.4L947 724.1L946 724.2L945 723.6L944 724.0L943 723.4L942 723.4L941 723.8L940 723.6L939 723.3L938 724.1L937 724.2L936 723.6L935 724.4L934 724.1L933 723.9L932 723.4L931 723.9L930 723.7L929 723.7L928 723.6L927 723.5L926 724.3L925 725.5L924 724.1L923 723.5L922 723.5L921 724.2L920 725.1L919 723.4L918 723.5L917 724.2L916 723.4L915 724.3L914 723.4L913 724.6L912 723.4L911 725.0L910 724.8L909 723.5L908 723.5L907 724.0L906 724.2L905 724.0L904 723.9L903 724.7L902 723.6L901 724.6L900 723.8L899 723.4L898 723.7L897 723.7L896 724.5L895 724.4L894 723.3L893 724.3L892 723.8L891 723.9L890 723.6L889 723.4L888 724.2L887 723.5L886 724.1L885 723.5L884 724.4L883 723.7L882 723.4L881 724.0L880 723.5L879 724.3L878 723.6L877 723.6L876 723.3L875 724.1L874 724.0L873 724.6L872 724.5L871 723.7L870 724.0L869 723.7L868 724.0L867 723.3L866 724.0L865 724.6L864 723.7L863 725.1L862 725.6L861 725.4L860 723.6L859 725.2L858 724.5L857 724.3L856 723.7L855 723.4L854 723.6L853 723.8L852 724.1L851 723.5L850 723.4L849 723.5L848 723.4L847 723.7L846 723.9L845 724.6L844 724.5L843 723.8L842 724.0L841 724.3L840 723.9L839 723.9L838 723.6L837 724.4L836 724.2L835 724.2L834 723.6L833 723.4L832 723.4L831 723.8L830 723.8L829 724.2L828 723.4L827 723.7L826 723.9L825 723.4L824 723.7L823 724.1L822 723.7L821 724.9L820 723.6L819 723.5L818 724.0L817 724.3L816 723.5L815 723.9L814 724.7L813 724.4L812 724.5L811 723.5L810 724.4L809 723.7L808 723.5L807 724.5L806 724.4L805 724.3L804 723.5L803 724.2L802 724.2L801 723.6L800 724.3L799 723.4L798 723.6L797 723.7L796 724.5L795 723.7L794 723.5L793 724.7L792 724.3L791 723.3L790 723.8L789 724.1L788 723.3L787 723.4L786 723.4L785 723.3L784 724.5L783 723.5L782 723.9L781 723.8L780 724.5L779 724.3L778 724.7L777 723.4L776 723.3L775 723.6L774 724.0L773 723.5L772 724.0L771 724.5L770 723.7L769 723.6L768 724.3L767 723.3L766 723.9L765 723.6L764 723.7L763 723.7L762 723.4L761 724.1L760 723.9L759 723.7L758 723.4L757 723.7L756 723.3L755 725.3L754 723.5L753 723.6L752 724.1L751 723.8L750 723.4L749 723.9L748 724.0L747 723.6L746 724.7L745 724.1L744 725.6L743 724.8L742 723.5L741 724.4L740 723.6L739 724.0L738 724.3L737 723.6L736 723.4L735 724.1L734 723.5L733 723.4L732 724.6L731 723.4L730 724.5L729 723.5L728 723.6L727 723.8L726 723.7L725 724.5L724 725.3L723 723.8L722 725.7L721 723.5L720 724.7L719 723.3L718 723.3L717 724.0L716 723.8L715 725.2L714 723.3L713 723.5L712 724.1L711 724.1L710 724.3L709 723.8L708 723.8L707 723.7L706 724.9L705 725.1L704 724.4L703 724.4L702 724.0L701 723.4L700 723.6L699 724.8L698 723.5L697 723.6L696 723.9L695 723.6L694 723.6L693 724.7L692 724.2L691 724.0L690 724.7L689 725.3L688 724.0L687 723.5L686 724.2L685 724.3L684 725.2L683 724.4L682 723.6L681 723.9L680 723.6L679 724.4L678 723.5L677 723.7L676 723.8L675 723.8L674 723.6L673 723.7L672 724.2L671 724.0L670 723.4L669 724.1L668 724.4L667 724.9L666 723.4L665 723.8L664 725.4L663 723.6L662 723.7L661 723.4L660 723.5L659 724.2L658 723.4L657 723.7L656 723.6L655 724.6L654 724.1L653 723.4L652 724.4L651 724.1L650 723.3L649 723.8L648 723.8L647 724.8L646 724.6L645 723.6L644 723.6L643 724.5L642 723.8L641 724.1L640 724.2L639 724.0L638 723.4L637 723.7L636 723.5L635 724.1L634 723.8L633 724.3L632 724.9L631 723.9L630 723.6L629 724.2L628 723.9L627 723.4L626 724.2L625 723.4L624 725.7L623 725.1L622 723.7L621 723.6L620 723.5L619 723.5L618 724.3L617 723.5L616 723.8L615 724.4L614 723.6L613 724.0L612 724.3L611 724.7L610 723.4L609 723.7L608 723.8L607 724.2L606 724.9L605 723.8L604 725.2L603 724.5L602 724.6L601 724.2L600 724.1L599 724.1L598 723.4L597 724.6L596 723.6L595 724.0L594 724.5L593 723.9L592 723.8L591 724.7L590 723.6L589 724.0L588 723.6L587 723.6L586 723.4L585 723.5L584 723.7L583 723.9L582 724.5L581 723.5L580 723.8L579 723.5L578 723.9L577 723.7L576 723.9L575 724.5L574 724.4L573 724.0L572 725.0L571 724.0L570 723.5L569 723.8L568 723.9L567 724.0L566 723.9L565 723.4L564 724.3L563 724.3L562 724.1L561 723.7L560 723.8L559 724.2L558 723.5L557 723.6L556 724.2L555 724.2L554 724.1L553 723.5L552 723.4L551 723.7L550 724.9L549 723.5L548 723.7L547 724.1L546 723.6L545 724.1L544 723.6L543 723.7L542 723.7L541 724.3L540 723.8L539 724.7L538 724.9L537 724.3L536 724.1L535 723.9L534 724.0L533 723.5L532 724.7L531 723.5L530 724.2L529 723.4L528 725.4L527 723.9L526 723.4L525 723.9L524 723.5L523 723.5L522 724.7L521 724.8L520 724.6L519 723.3L518 723.6L517 725.2L516 723.7L515 723.8L514 724.1L513 723.5L512 724.0L511 723.3L510 723.3L509 723.5L508 724.8L507 723.4L506 724.1L505 723.5L504 723.5L503 723.8L502 725.1L501 724.1L500 723.7L499 723.4L498 723.8L497 724.4L496 723.9L495 723.9L494 724.1L493 724.5L492 723.9L491 725.2L490 723.4L489 724.2L488 723.6L487 723.6L486 723.4L485 723.6L484 724.1L483 724.0L482 724.1L481 724.2L480 723.6L479 724.2L478 724.6L477 723.8L476 724.5L475 723.6L474 723.8L473 723.4L472 724.2L471 723.7L470 725.0L469 725.2L468 723.5L467 724.0L466 723.9L465 723.8L464 723.4L463 723.4L462 724.5L461 724.4L460 723.5L459 723.8L458 723.5L457 724.3L456 724.4L455 724.1L454 724.0L453 726.6L452 723.7L451 723.9L450 724.3L449 723.8L448 723.7L447 723.7L446 724.2L445 724.0L444 724.4L443 724.9L442 724.2L441 724.5L440 724.9L439 723.6L438 724.7L437 724.5L436 724.6L435 725.0L434 723.7L433 723.8L432 723.5L431 724.0L430 723.8L429 724.2L428 723.7L427 723.5L426 724.8L425 723.8L424 723.8L423 723.3L422 723.4L421 723.5L420 723.9L419 724.2L418 723.5L417 724.8L416 723.5L415 723.4L414 723.6L413 724.2L412 724.0L411 723.7L410 723.6L409 724.8L408 723.9L407 723.9L406 725.3L405 723.4L404 724.3L403 723.8L402 723.6L401 724.4L400 724.6L399 723.4L398 724.9L397 724.4L396 723.7L395 723.4L394 724.4L393 726.4L392 723.7L391 723.9L390 723.3L389 724.2L388 724.1L387 723.5L386 724.1L385 724.2L384 724.0L383 723.4L382 724.3L381 724.8L380 723.8L379 723.9L378 723.8L377 723.9L376 723.5L375 724.9L374 724.8L373 724.1L372 723.6L371 723.7L370 723.4L369 723.7L368 724.4L367 723.7L366 723.4L365 724.2L364 724.3L363 723.9L362 724.3L361 723.6L360 723.4L359 724.6L358 723.3L357 724.0L356 723.7L355 723.5L354 724.1L353 724.3L352 723.7L351 724.9L350 724.8L349 724.6L348 723.5L347 724.6L346 723.4L345 723.7L344 723.7L343 723.3L342 724.5L341 724.4L340 724.4L339 724.3L338 723.7L337 723.8L336 723.3L335 724.3L334 724.6L333 723.6L332 725.0L331 723.7L330 723.8L329 724.0L328 723.7L327 723.4L326 723.5L325 724.7L324 723.9L323 724.2L322 724.0L321 723.7L320 723.8L319 724.1L318 724.2L317 724.2L316 723.3L315 725.1L314 724.7L313 723.8L312 724.8L311 723.6L310 723.9L309 723.8L308 724.8L307 724.0L306 724.4L305 723.6L304 723.9L303 724.6L302 723.5L301 723.4L300 724.5L299 724.4L298 723.9L297 723.5L296 724.5L295 724.0L294 723.6L293 724.7L292 723.5L291 723.4L290 723.5L289 723.4L288 723.6L287 724.0L286 723.6L285 723.6L284 723.7L283 723.3L282 724.3L281 724.3L280 723.7L279 723.9L278 723.4L277 724.6L276 723.7L275 723.7L274 723.6L273 723.5L272 723.4L271 723.8L270 723.8L269 723.3L268 725.5L267 724.1L266 723.4L265 724.7L264 723.6L263 723.5L262 723.6L261 723.5L260 723.8L259 723.5L258 723.7L257 723.7L256 724.0L255 723.3L254 723.7L253 724.1L252 723.4L251 724.1L250 723.4L249 723.8L248 723.4L247 723.3L246 724.8L245 724.2L244 723.7L243 724.0L242 724.0L241 724.4L240 724.3L239 723.5L238 724.4L237 723.6L236 723.7L235 724.0L234 723.4L233 724.0L232 724.8L231 723.7L230 723.8L229 723.6L228 723.8L227 724.0L226 723.6L225 723.9L224 723.5L223 724.6L222 724.3L221 723.6L220 724.2L219 724.7L218 723.9L217 725.6L216 723.6L215 723.9L214 724.1L213 724.1L212 723.7L211 725.1L210 723.6L209 723.4L208 723.4L207 723.6L206 723.6L205 723.9L204 724.6L203 723.7L202 723.5L201 723.9L200 723.4L199 724.3L198 723.3L197 723.9L196 724.7L195 725.3L194 723.3L193 723.7L192 723.8L191 723.7L190 723.5L189 725.1L188 723.4L187 723.9L186 723.4L185 723.4L184 723.9L183 724.5L182 723.9L181 723.6L180 725.5L179 724.2L178 723.7L177 724.2L176 723.7L175 724.0L174 723.4L173 723.5L172 724.1L171 724.6L170 724.2L169 723.6L168 724.3L167 723.4L166 724.5L165 724.4L164 723.6L163 723.4L162 724.4L161 724.0L160 723.5L159 723.5L158 723.4L157 724.3L156 723.9L155 724.5L154 724.5L153 723.8L152 724.2L151 724.0L150 723.9L149 724.3L148 725.0L147 723.6L146 723.4L145 724.3L144 723.5L143 723.3L142 723.4L141 723.7L140 723.9L139 723.3L138 723.7L137 724.5L136 723.6L135 723.9L134 723.5L133 723.8L132 724.0L131 723.7L130 724.2L129 724.1L128 724.6L127 724.0L126 723.4L125 723.6L124 724.1L123 723.6L122 724.8L121 723.8L120 724.8L119 724.7L118 723.3L117 724.5L116 723.8L115 723.8L114 724.0L113 724.4L112 723.5L111 723.3L110 724.6L109 724.5L108 723.5L107 724.2L106 725.4L105 723.8L104 725.5L103 723.5L102 724.4L101 724.5L100 723.4L99 723.7L98 723.9L97 726.0L96 725.6L95 724.0L94 723.3L93 723.5L92 724.8L91 723.3L90 723.4L89 723.3L88 724.3L87 723.4L86 724.2L85 723.9L84 723.4L83 723.6L82 723.6L81 723.5L80 724.0L79 723.7L78 723.3L77 724.4L76 724.3L75 723.6L74 724.0L73 724.8L72 724.7L71 723.6L70 723.7L69 724.6L68 724.0L67 724.4L66 723.4L65 723.5L64 723.4L63 723.7L62 723.5L61 723.6L60 723.4L59 723.7L58 723.4L57 723.4L56 724.0L55 723.6L54 723.8L53 724.5L52 723.6L51 723.7L50 723.4L49 724.0L48 724.7L47 724.5L46 723.6L45 724.3L44 723.6L43 725.2L42 723.9L41 723.6L40 723.4L39 723.6L38 724.0L37 723.6L36 724.4L35 725.0L34 724.8L33 724.6L32 724.1L31 723.4L30 723.5L29 723.5L28 723.6L27 724.1L26 723.6L25 724.1L24 723.9L23 723.7L22 723.6L21 724.9L20 723.8L19 724.2L18 724.7L17 723.5L16 723.6L15 724.1L14 723.3L13 724.8L12 724.0L11 723.8L10 723.9L9 724.0L8 724.0L7 723.5L6 723.5L5 723.5L4 724.2L3 724.1Z" fill="#c9193f"/>
<path d="M3 715.9L4 716.4L5 715.7L6 716.0L7 716.3L8 716.0L9 716.3L10 716.1L11 716.2L12 716.0L13 715.9L14 716.2L15 715.6L16 715.9L17 716.3L18 715.8L19 715.6L20 715.0L21 715.7L22 715.7L23 715.7L24 716.4L25 716.4L26 715.8L27 715.9L28 715.4L29 715.9L30 716.2L31 715.9L32 715.9L33 716.3L34 715.6L35 716.2L36 716.2L37 715.4L38 716.0L39 715.8L40 716.0L41 715.8L42 716.3L43 715.8L44 715.8L45 716.4L46 715.8L47 716.0L48 715.8L49 715.8L50 715.9L51 716.1L52 716.2L53 715.6L54 715.7L55 715.9L56 715.9L57 716.4L58 716.1L59 716.3L60 716.0L61 715.7L62 715.9L63 715.0L64 716.3L65 715.9L66 716.1L67 716.2L68 716.3L69 716.0L70 716.2L71 715.7L72 715.3L73 716.4L74 716.3L75 716.4L76 716.0L77 716.0L78 715.8L79 715.5L80 715.4L81 715.7L82 715.7L83 716.1L84 716.1L85 715.5L86 716.3L87 716.1L88 716.1L89 716.1L90 716.0L91 715.7L92 716.0L93 715.5L94 716.2L95 716.3L96 715.6L97 716.0L98 716.3L99 715.1L100 716.0L101 715.7L102 715.7L103 716.3L104 715.7L105 716.0L106 715.7L107 716.3L108 715.7L109 716.3L110 715.8L111 715.8L112 716.3L113 716.2L114 716.2L115 716.1L116 716.4L117 715.9L118 715.6L119 715.8L120 716.3L121 716.0L122 715.8L123 715.4L124 715.9L125 715.9L126 716.0L127 716.0L128 716.2L129 716.3L130 716.2L131 716.3L132 716.2L133 716.1L134 716.4L135 715.9L136 716.3L137 716.1L138 716.4L139 716.2L140 715.9L141 716.1L142 716.0L143 716.1L144 716.1L145 715.4L146 716.1L147 716.2L148 715.7L149 716.3L150 716.3L151 716.3L152 715.9L153 715.7L154 713.9L155 716.3L156 715.9L157 716.0L158 716.1L159 715.9L160 716.4L161 716.1L162 716.2L163 716.1L164 716.1L165 716.0L166 715.7L167 715.9L168 716.1L169 716.3L170 716.3L171 715.4L172 716.2L173 715.8L174 715.9L175 715.8L176 716.0L177 715.7L178 715.7L179 715.6L180 716.0L181 716.0L182 715.9L183 715.8L184 716.0L185 715.5L186 715.9L187 715.7L188 716.3L189 716.0L190 716.2L191 716.3L192 716.2L193 716.0L194 716.3L195 715.6L196 715.2L197 715.8L198 716.3L199 715.9L200 716.3L201 715.6L202 716.3L203 716.1L204 716.2L205 715.9L206 716.3L207 715.6L208 716.0L209 716.2L210 714.8L211 716.2L212 716.1L213 716.0L214 715.9L215 716.1L216 715.7L217 716.3L218 715.4L219 716.3L220 716.3L221 715.8L222 716.1L223 715.9L224 716.3L225 715.5L226 716.1L227 716.0L228 715.9L229 716.1L230 716.3L231 716.1L232 716.2L233 716.1L234 715.6L235 716.2L236 715.8L237 716.0L238 716.0L239 715.4L240 716.1L241 715.6L242 716.2L243 715.9L244 716.2L245 715.4L246 716.2L247 716.2L248 716.2L249 716.3L250 716.3L251 716.0L252 715.4L253 715.3L254 716.2L255 716.2L256 716.0L257 715.8L258 716.1L259 716.1L260 715.4L261 715.9L262 716.1L263 715.9L264 716.3L265 716.4L266 716.4L267 716.2L268 716.2L269 715.8L270 716.2L271 715.0L272 716.1L273 715.6L274 716.2L275 714.9L276 716.3L277 716.0L278 716.0L279 715.9L280 715.9L281 716.4L282 716.2L283 715.8L284 715.2L285 713.9L286 716.1L287 716.1L288 716.3L289 715.9L290 715.7L291 716.0L292 716.0L293 715.6L294 715.8L295 716.3L296 716.1L297 715.8L298 716.1L299 715.8L300 715.4L301 716.2L302 716.3L303 715.3L304 716.1L305 716.1L306 714.4L307 716.1L308 715.9L309 715.9L310 715.7L311 716.3L312 716.0L313 715.7L314 716.4L315 716.1L316 716.2L317 715.8L318 716.1L319 715.7L320 715.1L321 716.1L322 716.1L323 715.2L324 716.3L325 715.9L326 715.9L327 716.0L328 715.6L329 716.3L330 716.2L331 716.3L332 716.3L333 716.1L334 716.2L335 716.3L336 716.0L337 715.8L338 716.0L339 716.3L340 715.9L341 716.3L342 716.2L343 715.9L344 716.4L345 715.9L346 715.9L347 715.2L348 715.8L349 715.6L350 716.4L351 716.3L352 715.8L353 715.6L354 716.3L355 716.0L356 716.3L357 716.3L358 716.4L359 716.3L360 716.0L361 715.5L362 716.1L363 715.6L364 715.7L365 714.9L366 716.1L367 715.7L368 716.0L369 715.7L370 715.7L371 716.2L372 715.7L373 716.0L374 716.3L375 716.0L376 715.8L377 716.0L378 715.9L379 715.8L380 715.9L381 716.3L382 715.7L383 715.5L384 716.3L385 716.0L386 715.3L387 716.2L388 716.0L389 716.1L390 716.3L391 716.1L392 716.1L393 715.5L394 715.9L395 716.3L396 715.2L397 716.4L398 716.2L399 716.2L400 716.0L401 716.3L402 716.2L403 716.3L404 716.3L405 716.3L406 716.1L407 716.2L408 716.2L409 715.5L410 716.3L411 716.2L412 716.1L413 716.4L414 715.8L415 715.9L416 716.3L417 715.4L418 715.4L419 715.7L420 716.0L421 716.3L422 716.1L423 715.7L424 716.0L425 714.3L426 716.0L427 716.3L428 716.3L429 716.2L430 715.8L431 715.8L432 715.5L433 716.3L434 715.8L435 715.7L436 716.3L437 716.2L438 716.3L439 716.3L440 715.8L441 716.3L442 715.6L443 716.1L444 716.3L445 715.4L446 715.7L447 716.1L448 715.5L449 715.9L450 716.2L451 716.4L452 715.8L453 716.2L454 715.6L455 716.2L456 715.9L457 715.8L458 715.8L459 716.1L460 716.0L461 716.3L462 715.7L463 715.7L464 716.2L465 716.0L466 715.5L467 716.3L468 716.2L469 715.9L470 716.1L471 716.1L472 716.4L473 716.2L474 715.8L475 716.0L476 716.4L477 716.0L478 716.1L479 715.9L480 716.0L481 715.9L482 716.0L483 716.1L484 715.8L485 715.9L486 716.3L487 715.9L488 715.8L489 716.2L490 716.1L491 715.5L492 716.0L493 715.7L494 716.1L495 716.0L496 716.1L497 716.4L498 715.7L499 715.4L500 716.4L501 716.3L502 714.7L503 715.9L504 715.9L505 716.0L506 716.1L507 715.7L508 716.0L509 716.1L510 716.0L511 716.2L512 715.6L513 716.2L514 715.7L515 716.2L516 714.5L517 716.0L518 716.0L519 715.6L520 716.1L521 716.0L522 716.3L523 715.8L524 716.4L525 716.1L526 715.5L527 716.0L528 716.0L529 715.3L530 716.0L531 716.0L532 715.7L533 716.1L534 716.0L535 716.2L536 716.2L537 716.3L538 715.9L539 715.6L540 716.2L541 715.4L542 716.4L543 716.2L544 715.8L545 716.1L546 716.1L547 715.9L548 715.7L549 716.2L550 716.2L551 716.1L552 714.5L553 716.0L554 715.7L555 715.7L556 716.1L557 716.3L558 716.0L559 716.2L560 716.1L561 715.9L562 716.0L563 715.8L564 716.2L565 715.8L566 716.4L567 716.2L568 715.7L569 716.4L570 716.4L571 715.9L572 715.4L573 716.3L574 716.3L575 716.1L576 716.1L577 716.3L578 715.7L579 716.1L580 716.3L581 716.2L582 715.9L583 715.7L584 715.9L585 716.0L586 715.8L587 716.1L588 716.0L589 716.3L590 715.8L591 716.0L592 715.9L593 716.4L594 716.2L595 716.2L596 716.4L597 716.3L598 715.5L599 716.3L600 716.1L601 716.0L602 715.5L603 715.5L604 716.2L605 716.3L606 716.1L607 715.9L608 716.2L609 715.7L610 716.0L611 716.2L612 716.3L613 715.7L614 715.7L615 716.1L616 715.7L617 716.0L618 716.2L619 716.1L620 715.8L621 715.9L622 715.9L623 716.3L624 715.7L625 715.8L626 715.7L627 716.3L628 716.2L629 716.2L630 716.3L631 716.2L632 715.5L633 715.5L634 715.9L635 716.3L636 716.2L637 715.4L638 716.2L639 716.4L640 715.6L641 716.1L642 716.3L643 716.0L644 716.2L645 716.0L646 715.6L647 715.9L648 716.4L649 716.4L650 715.5L651 715.4L652 716.3L653 715.9L654 716.3L655 716.3L656 716.1L657 716.1L658 716.2L659 715.8L660 715.6L661 716.2L662 716.1L663 716.2L664 715.6L665 716.2L666 715.7L667 715.9L668 715.9L669 715.7L670 716.2L671 716.2L672 715.6L673 716.3L674 714.0L675 716.0L676 716.0L677 716.2L678 716.3L679 715.9L680 715.9L681 716.0L682 715.9L683 715.4L684 715.6L685 716.2L686 716.3L687 716.3L688 716.1L689 716.1L690 716.2L691 715.4L692 716.3L693 716.1L694 716.0L695 715.8L696 716.3L697 715.8L698 716.4L699 716.3L700 716.0L701 715.8L702 715.9L703 715.8L704 716.4L705 715.2L706 715.7L707 716.3L708 715.8L709 716.2L710 715.8L711 716.1L712 715.5L713 715.5L714 716.4L715 715.9L716 715.7L717 716.1L718 716.2L719 715.1L720 715.6L721 715.8L722 716.1L723 716.2L724 716.1L725 716.4L726 716.2L727 715.9L728 716.4L729 715.3L730 715.4L731 716.3L732 716.2L733 716.3L734 716.0L735 716.3L736 716.2L737 716.3L738 716.3L739 716.1L740 715.7L741 716.2L742 716.3L743 715.7L744 715.8L745 716.1L746 716.0L747 715.9L748 715.9L749 716.3L750 716.2L751 716.0L752 716.3L753 716.2L754 716.3L755 715.8L756 716.1L757 715.7L758 715.6L759 716.4L760 715.8L761 715.9L762 716.3L763 715.0L764 716.3L765 715.9L766 716.2L767 715.8L768 716.2L769 716.3L770 716.2L771 716.0L772 716.4L773 715.0L774 716.4L775 716.2L776 715.8L777 716.4L778 715.9L779 716.2L780 715.8L781 716.2L782 716.3L783 716.0L784 715.9L785 716.0L786 716.0L787 716.1L788 715.9L789 716.3L790 716.0L791 716.0L792 715.6L793 715.0L794 716.1L795 715.7L796 715.5L797 716.0L798 715.8L799 716.0L800 716.4L801 715.8L802 716.0L803 716.0L804 716.1L805 716.0L806 716.3L807 715.9L808 716.2L809 716.3L810 715.7L811 716.1L812 715.6L813 716.4L814 715.9L815 716.0L816 716.2L817 715.5L818 716.2L819 715.9L820 716.4L821 714.8L822 716.4L823 716.1L824 716.1L825 716.1L826 715.6L827 716.3L828 716.2L829 716.4L830 716.0L831 716.4L832 716.3L833 715.0L834 716.2L835 716.3L836 715.7L837 716.2L838 716.1L839 715.9L840 715.9L841 715.5L842 715.7L843 716.3L844 715.7L845 715.5L846 716.3L847 716.1L848 716.3L849 716.2L850 716.2L851 716.0L852 715.9L853 715.2L854 715.7L855 716.0L856 716.1L857 715.9L858 715.8L859 716.0L860 716.0L861 715.4L862 715.2L863 716.3L864 714.6L865 716.2L866 715.6L867 716.1L868 716.3L869 716.1L870 715.5L871 716.0L872 715.6L873 716.1L874 716.2L875 715.1L876 715.6L877 716.4L878 715.8L879 716.2L880 715.8L881 715.9L882 716.4L883 716.1L884 716.3L885 716.3L886 716.3L887 716.3L888 716.4L889 716.3L890 715.6L891 715.7L892 716.2L893 716.2L894 715.6L895 716.3L896 716.3L897 716.3L898 716.3L899 715.8L900 715.7L901 715.8L902 715.9L903 715.9L904 715.8L905 716.4L906 715.6L907 716.3L908 716.4L909 715.5L910 715.8L911 716.2L912 715.9L913 715.6L914 716.3L915 716.3L916 716.4L917 715.9L918 715.5L919 716.4L920 716.0L921 715.7L922 716.3L923 716.2L924 716.0L925 716.3L926 716.4L927 716.0L928 716.2L929 716.1L930 716.4L931 716.3L932 715.5L933 716.1L934 716.3L935 715.9L936 715.8L937 716.1L938 716.0L939 716.3L940 716.4L941 715.9L942 716.3L943 715.8L944 715.9L945 716.1L946 716.3L947 715.9L948 716.1L949 716.3L950 715.7L951 716.1L952 715.8L953 715.8L954 715.5L955 716.2L956 715.8L957 715.3L958 716.2L959 715.8L960 716.2L961 716.1L962 715.9L963 716.3L964 716.0L965 716.4L966 716.3L967 715.2L968 716.1L969 716.1L970 716.2L971 716.1L972 713.9L973 715.8L974 716.2L975 716.4L976 716.3L977 715.8L978 716.2L979 716.3L980 716.4L981 716.2L982 716.3L983 715.9L984 715.9L985 716.3L986 716.1L987 716.4L988 715.6L989 716.2L990 716.1L991 715.6L992 715.8L993 716.3L994 716.2L995 716.0L996 716.1L997 716.2L998 716.0L999 716.2L1000 716.2L1001 716.2L1002 716.1L1003 716.3L1004 715.1L1005 715.7L1006 716.4L1007 716.3L1008 715.5L1009 716.2L1010 716.0L1011 716.3L1012 715.5L1013 715.8L1014 715.6L1015 716.4L1016 715.7L1017 716.4L1018 715.6L1019 716.0L1020 716.3L1021 716.0L1022 715.7L1023 715.8L1024 714.6L1025 715.1L1026 715.8L1027 716.1L1028 715.8L1029 716.0L1030 715.9L1031 716.0L1032 716.4L1033 716.1L1034 715.9L1035 716.4L1036 715.8L1037 715.9L1038 716.3L1039 716.2L1040 715.4L1041 716.2L1042 716.2L1043 716.1L1044 716.1L1045 715.5L1046 715.8L1047 715.7L1048 715.8L1049 715.8L1050 716.3L1051 716.3L1052 716.4L1053 716.3L1054 716.2L1055 715.7L1056 715.7L1057 715.8L1058 715.7L1059 716.2L1060 716.0L1061 716.3L1062 715.9L1063 716.0L1064 716.2L1065 716.2L1066 716.2L1067 716.1L1068 716.3L1069 716.2L1070 716.3L1071 716.2L1072 716.4L1073 716.4L1074 716.0L1075 716.1L1076 715.5L1077 716.2L1078 716.2L1079 715.9L1080 716.0L1081 715.7L1082 716.0L1083 715.8L1084 715.9L1085 716.2L1086 716.3L1087 715.5L1088 716.2L1089 715.9L1090 715.5L1091 716.0L1092 715.8L1093 715.9L1094 716.2L1095 716.0L1096 715.8L1097 716.0L1098 716.4L1099 716.3L1100 715.8L1101 716.2L1102 716.2L1103 715.6L1104 715.6L1105 715.6L1106 715.7L1107 716.4L1108 716.4L1109 715.8L1110 716.1L1111 716.4L1112 716.2L1113 715.7L1114 716.1L1115 716.3L1116 716.3L1117 716.1L1118 716.3L1119 716.1L1120 716.3L1121 715.2L1122 716.0L1123 716.3L1124 715.8L1125 716.3L1126 715.5L1127 716.2L1128 716.0L1129 715.6L1130 715.5L1131 716.2L1132 716.3L1133 716.2L1134 716.2L1135 715.8L1136 716.1L1137 715.8L1138 716.3L1139 716.2L1140 716.2L1141 716.2L1142 715.7L1143 715.6L1144 716.2L1145 715.4L1146 715.6L1147 716.0L1148 715.9L1149 716.2L1150 715.4L1151 716.1L1152 715.8L1153 716.1L1154 716.2L1155 716.3L1156 716.3L1157 716.2L1158 716.3L1159 716.2L1160 716.1L1161 716.1L1162 715.9L1163 716.0L1164 716.4L1165 716.0L1166 714.1L1167 716.1L1168 715.5L1169 716.3L1170 716.1L1171 716.2L1172 716.4L1173 716.1L1174 715.2L1175 715.6L1176 716.1L1177 716.4L1178 716.4L1179 715.8L1180 716.3L1181 716.3L1182 715.8L1183 715.9L1184 716.2L1185 716.1L1186 716.1L1187 715.7L1188 716.0L1189 716.3L1190 716.3L1191 716.2L1192 716.2L1193 716.1L1194 716.1L1195 716.1L1196 716.2L1197 716.0L1198 716.3L1199 715.5L1200 716.2L1201 716.3L1202 716.4L1203 716.0L1204 716.2L1205 715.9L1206 716.1L1207 715.8L1208 715.6L1209 716.3L1210 715.8L1211 715.5L1212 716.3L1213 716.0L1214 715.8L1215 716.3L1216 716.2L1217 715.5L1218 716.1L1219 715.6L1220 716.3L1221 716.3L1222 716.3L1223 715.8L1224 716.1L1225 716.4L1226 715.8L1227 715.7L1228 716.2L1229 716.4L1230 715.8L1231 716.3L1232 716.1L1233 716.2L1234 716.0L1235 715.4L1236 716.3L1237 716.4L1238 716.4L1239 716.2L1240 716.2L1241 715.6L1242 716.0L1243 716.2L1244 716.4L1245 715.9L1246 715.1L1247 716.2L1248 716.4L1249 716.0L1250 716.0L1251 715.9L1252 715.9L1253 716.0L1254 716.3L1255 716.2L1256 715.8L1257 716.3L1258 716.1L1259 716.3L1260 716.2L1261 716.1L1262 716.1L1263 716.2L1264 716.0L1265 716.4L1266 715.5L1267 715.7L1268 716.3L1269 716.2L1270 715.8L1271 716.3L1272 716.1L1273 715.8L1274 716.2L1275 715.5L1276 716.0L1277 716.2L1278 715.8L1279 716.2L1280 715.8L1281 716.2L1282 716.1L1283 716.1L1284 716.1L1285 716.2L1286 716.3L1287 716.1L1288 715.8L1289 715.7L1290 716.1L1291 715.7L1292 716.3L1293 715.7L1294 715.9L1295 715.4L1296 716.0L1297 715.9L1298 716.1L1299 715.2L1300 714.2L1301 716.2L1302 716.4L1303 716.4L1304 716.2L1305 716.2L1306 715.5L1307 716.0L1308 716.0L1309 716.2L1310 715.9L1311 716.2L1312 716.4L1313 716.1L1314 715.6L1315 716.3L1316 716.1L1317 716.2L1318 715.9L1319 715.6L1320 716.1L1321 716.0L1322 716.3L1323 714.5L1324 716.4L1325 716.0L1326 715.9L1327 715.7L1328 715.9L1329 716.1L1330 716.2L1331 715.5L1332 715.8L1333 715.6L1334 715.9L1335 716.3L1336 715.9L1337 716.2L1338 716.3L1339 716.2L1340 716.2L1341 716.2L1342 716.1L1343 715.9L1344 716.1L1345 716.1L1346 716.2L1347 716.1L1348 715.2L1349 716.1L1350 716.3L1351 716.2L1352 715.5L1353 716.3L1354 716.3L1355 715.7L1356 716.3L1357 716.1L1358 716.4L1359 716.4L1360 715.3L1361 716.3L1362 716.1L1363 716.3L1364 716.2L1365 716.2L1366 716.3L1367 715.6L1368 716.1L1369 716.1L1370 716.3L1371 715.3L1372 716.3L1373 715.9L1374 715.6L1375 714.3L1376 716.1L1377 716.0L1378 716.3L1379 715.6L1380 715.9L1381 716.4L1382 716.1L1383 716.3L1384 716.1L1385 715.8L1386 716.1L1387 716.4L1388 715.8L1389 715.8L1390 715.7L1391 716.2L1392 716.0L1393 716.3L1394 715.9L1395 716.3L1396 716.3L1397 716.3L1398 716.3L1399 716.3L1400 716.2L1401 715.5L1402 716.1L1403 715.9L1404 716.0L1405 715.7L1406 715.7L1407 715.8L1408 716.1L1409 715.7L1410 716.3L1411 716.4L1412 716.2L1413 715.4L1414 716.0L1415 716.0L1416 716.2L1417 716.3L1418 716.1L1419 716.2L1420 716.3L1421 715.9L1422 716.2L1423 716.1L1424 716.1L1425 716.2L1426 716.0L1427 715.2L1428 716.1L1429 716.1L1430 716.0L1431 716.0L1432 715.3L1433 716.0L1434 715.6L1435 716.1L1436 716.4L1437 716.4L1438 716.3L1439 716.2L1440 715.8L1441 716.3L1442 716.2L1443 716.2L1444 716.0L1445 716.1L1446 716.0L1447 716.2L1448 716.1L1449 716.2L1450 716.1L1451 716.1L1452 716.0L1453 716.3L1454 715.6L1455 716.1L1456 715.9L1457 715.9L1458 716.1L1459 716.1L1460 716.0L1461 715.8L1462 716.2L1463 716.4L1464 716.0L1465 716.3L1466 715.8L1467 716.2L1468 716.3L1469 716.0L1470 715.3L1471 716.2L1472 716.2L1473 716.0L1474 716.3L1475 716.2L1476 716.4L1477 716.2L1478 716.3L1479 716.2L1480 716.2L1481 715.5L1482 715.6L1483 716.1L1484 716.3L1485 716.0L1486 715.5L1487 715.6L1488 716.0L1489 716.2L1490 715.9L1491 716.3L1492 716.1L1493 716.1L1494 716.2L1495 714.8L1496 715.4L1497 715.6L1498 715.9L1499 715.9L1500 716.3L1501 715.6L1502 715.8L1503 715.7L1504 715.9L1505 715.9L1506 715.7L1507 715.7L1508 715.7L1509 716.4L1510 716.2L1511 715.4L1512 715.8L1513 715.8L1514 716.3L1515 716.4L1516 715.8L1517 715.6L1518 715.7L1519 716.0L1520 716.1L1521 716.0L1522 715.9L1523 716.0L1524 716.0L1525 716.0L1526 716.4L1527 715.6L1528 716.1L1529 716.3L1530 716.1L1531 716.2L1532 716.2L1533 716.1L1534 716.2L1535 715.0L1536 715.7L1537 716.3L1538 716.3L1539 715.9L1540 716.1L1541 716.3L1542 716.4L1543 716.2L1544 716.2L1545 716.1L1546 716.2L1547 716.2L1548 715.7L1549 715.5L1550 715.8L1551 716.4L1552 715.2L1553 715.8L1554 715.5L1555 713.5L1556 715.8L1557 716.1L1558 716.2L1559 716.0L1560 715.2L1561 716.1L1562 716.1L1563 716.3L1564 716.1L1565 716.0L1566 716.3L1567 715.7L1568 716.4L1569 715.9L1570 716.2L1571 716.0L1572 716.4L1573 716.4L1574 716.0L1575 716.3L1576 715.7L1577 716.3L1578 716.2L1579 716.0L1580 716.2L1581 716.1L1582 716.1L1583 715.2L1584 715.8L1585 715.9L1586 716.3L1587 714.1L1588 716.2L1589 716.4L1590 716.2L1591 716.2L1592 716.1L1593 716.0L1594 716.2L1595 716.3L1596 715.4L1597 716.2L1598 716.1L1599 716.4L1600 716.1L1601 716.3L1602 716.1L1603 716.3L1604 716.1L1605 715.6L1606 716.1L1607 716.2L1608 716.1L1609 716.3L1610 716.0L1611 716.0L1612 715.6L1613 716.3L1614 715.5L1615 716.3L1616 715.8L1617 716.3L1618 716.2L1619 716.1L1620 716.0L1621 716.3L1622 716.1L1623 716.0L1624 716.3L1625 716.2L1626 716.2L1627 715.9L1628 715.8L1629 716.3L1630 716.1L1631 716.2L1632 715.5L1633 715.8L1634 715.9L1635 715.7L1636 716.2L1637 716.1L1638 715.6L1639 715.4L1640 716.1L1641 716.3L1642 715.7L1643 716.0L1644 716.1L1645 716.1L1646 716.3L1647 716.2L1648 715.8L1649 716.1L1650 716.3L1651 715.8L1652 716.0L1653 716.2L1654 715.8L1655 715.7L1656 716.2L1657 715.9L1658 716.4L1659 716.3L1660 716.0L1661 716.4L1662 715.9L1663 715.9L1664 716.0L1665 716.0L1666 716.1L1667 716.0L1668 715.9L1669 716.3L1670 716.3L1671 716.2L1672 716.0L1673 716.1L1674 716.3L1675 716.1L1676 715.7L1677 716.3L1678 714.9L1679 716.3L1680 716.3L1681 716.2L1682 715.5L1683 716.1L1684 716.2L1685 716.2L1686 716.4L1687 716.1L1688 716.2L1689 715.7L1690 714.9L1691 715.7L1692 715.6L1693 716.0L1694 716.2L1695 715.9L1696 715.8L1697 715.7L1698 716.0L1699 716.3L1700 716.4L1701 716.0L1702 716.3L1703 716.1L1704 716.1L1705 716.1L1706 716.4L1707 716.0L1708 715.8L1709 716.2L1710 716.0L1711 716.2L1712 716.0L1713 716.1L1714 715.6L1715 716.2L1716 716.3L1717 716.3L1718 715.7L1719 715.7L1720 715.8L1721 716.2L1722 716.3L1723 716.3L1724 716.2L1725 716.4L1726 715.6L1727 716.0L1728 716.0L1729 716.3L1730 716.1L1731 715.2L1732 715.5L1733 716.3L1734 715.8L1735 716.1L1736 715.9L1737 715.7L1738 715.5L1739 715.9L1740 715.7L1741 715.2L1742 716.2L1743 716.3L1744 716.3L1745 715.5L1746 716.3L1747 715.9L1748 716.3L1749 715.6L1750 715.9L1751 716.2L1751 721.8L1750 721.9L1749 721.7L1748 721.7L1747 722.1L1746 721.8L1745 722.2L1744 721.9L1743 722.6L1742 721.8L1741 722.5L1740 722.0L1739 721.7L1738 721.8L1737 722.0L1736 721.8L1735 721.9L1734 721.8L1733 722.9L1732 722.6L1731 722.0L1730 722.6L1729 722.2L1728 721.7L1727 721.7L1726 722.1L1725 721.9L1724 722.0L1723 721.7L1722 722.0L1721 722.1L1720 721.8L1719 722.4L1718 721.9L1717 722.4L1716 721.7L1715 721.7L1714 721.6L1713 721.7L1712 722.2L1711 722.0L1710 721.6L1709 721.8L1708 722.1L1707 722.0L1706 721.9L1705 722.1L1704 722.1L1703 721.8L1702 721.9L1701 722.0L1700 721.8L1699 721.9L1698 722.1L1697 721.9L1696 722.0L1695 722.0L1694 721.8L1693 721.7L1692 722.7L1691 722.1L1690 722.4L1689 722.4L1688 721.9L1687 721.6L1686 722.2L1685 722.2L1684 722.0L1683 721.6L1682 721.7L1681 722.1L1680 721.7L1679 722.3L1678 722.1L1677 721.8L1676 722.0L1675 721.6L1674 721.9L1673 721.8L1672 722.4L1671 722.5L1670 722.1L1669 722.5L1668 722.3L1667 722.3L1666 722.1L1665 721.8L1664 721.6L1663 721.8L1662 721.7L1661 721.7L1660 722.0L1659 722.2L1658 722.2L1657 722.5L1656 721.9L1655 721.9L1654 722.1L1653 722.3L1652 721.7L1651 722.1L1650 722.3L1649 721.9L1648 722.2L1647 721.7L1646 721.8L1645 721.7L1644 721.8L1643 722.5L1642 721.9L1641 721.6L1640 721.9L1639 721.8L1638 721.7L1637 721.7L1636 721.7L1635 722.1L1634 721.6L1633 721.8L1632 722.2L1631 722.3L1630 721.9L1629 722.1L1628 721.7L1627 722.2L1626 722.3L1625 721.7L1624 721.8L1623 722.0L1622 721.8L1621 721.8L1620 721.6L1619 722.1L1618 721.9L1617 722.2L1616 722.0L1615 721.6L1614 721.8L1613 721.7L1612 721.7L1611 722.0L1610 721.8L1609 722.2L1608 722.0L1607 721.6L1606 722.3L1605 721.6L1604 722.2L1603 721.8L1602 721.7L1601 723.5L1600 721.8L1599 722.4L1598 721.8L1597 722.4L1596 722.7L1595 722.1L1594 723.7L1593 722.4L1592 722.9L1591 721.8L1590 721.6L1589 721.8L1588 722.5L1587 721.7L1586 721.9L1585 721.6L1584 721.9L1583 722.3L1582 721.8L1581 721.7L1580 721.8L1579 721.7L1578 721.9L1577 722.9L1576 722.1L1575 721.6L1574 722.4L1573 721.9L1572 721.9L1571 721.8L1570 721.7L1569 722.0L1568 722.3L1567 721.9L1566 722.0L1565 721.7L1564 721.7L1563 721.9L1562 721.9L1561 722.0L1560 721.8L1559 722.2L1558 721.9L1557 721.7L1556 721.8L1555 721.7L1554 721.7L1553 721.6L1552 722.4L1551 721.9L1550 723.0L1549 722.1L1548 722.1L1547 721.7L1546 722.1L1545 722.4L1544 722.1L1543 721.6L1542 721.7L1541 721.9L1540 722.5L1539 722.1L1538 723.2L1537 722.0L1536 721.7L1535 722.0L1534 722.4L1533 721.6L1532 722.0L1531 722.7L1530 721.8L1529 722.0L1528 721.7L1527 722.4L1526 721.7L1525 722.4L1524 722.4L1523 721.9L1522 721.6L1521 722.7L1520 722.5L1519 722.2L1518 721.9L1517 721.6L1516 721.6L1515 721.6L1514 721.7L1513 722.1L1512 721.8L1511 722.3L1510 722.6L1509 722.1L1508 721.8L1507 721.7L1506 721.8L1505 721.6L1504 722.5L1503 722.0L1502 721.9L1501 722.8L1500 722.4L1499 721.7L1498 721.7L1497 721.7L1496 721.9L1495 722.5L1494 721.7L1493 721.9L1492 722.0L1491 721.6L1490 722.4L1489 722.4L1488 722.4L1487 721.9L1486 722.0L1485 721.7L1484 722.0L1483 721.7L1482 722.0L1481 722.4L1480 721.7L1479 722.2L1478 722.2L1477 722.5L1476 722.3L1475 722.3L1474 722.1L1473 721.8L1472 721.9L1471 721.9L1470 722.9L1469 721.9L1468 721.6L1467 722.0L1466 722.7L1465 722.0L1464 722.6L1463 721.8L1462 721.7L1461 722.1L1460 721.6L1459 722.2L1458 722.4L1457 723.3L1456 721.9L1455 721.8L1454 722.0L1453 722.0L1452 721.9L1451 721.8L1450 722.0L1449 721.9L1448 722.1L1447 722.1L1446 721.8L1445 722.1L1444 721.8L1443 722.1L1442 722.0L1441 721.9L1440 722.1L1439 722.2L1438 721.8L1437 722.1L1436 721.8L1435 722.5L1434 722.1L1433 721.9L1432 721.8L1431 721.9L1430 721.9L1429 722.2L1428 722.0L1427 721.7L1426 722.1L1425 722.0L1424 721.8L1423 722.2L1422 721.8L1421 721.9L1420 721.9L1419 722.3L1418 722.1L1417 721.8L1416 721.6L1415 721.7L1414 722.0L1413 722.7L1412 721.7L1411 721.8L1410 721.9L1409 722.1L1408 722.1L1407 722.5L1406 721.8L1405 723.0L1404 721.9L1403 721.8L1402 723.1L1401 722.2L1400 722.0L1399 722.2L1398 721.6L1397 721.7L1396 721.8L1395 722.3L1394 722.1L1393 721.7L1392 721.8L1391 722.0L1390 721.8L1389 722.4L1388 722.1L1387 721.7L1386 722.1L1385 721.6L1384 722.3L1383 722.5L1382 722.2L1381 722.1L1380 721.7L1379 721.9L1378 721.9L1377 723.4L1376 722.4L1375 722.4L1374 721.7L1373 721.7L1372 721.8L1371 722.4L1370 721.8L1369 721.9L1368 721.7L1367 722.5L1366 721.6L1365 722.0L1364 722.4L1363 721.7L1362 721.9L1361 721.6L1360 721.8L1359 721.7L1358 721.6L1357 721.7L1356 721.9L1355 721.8L1354 723.1L1353 723.0L1352 722.1L1351 721.9L1350 722.0L1349 721.7L1348 721.7L1347 722.3L1346 721.7L1345 722.1L1344 722.1L1343 721.6L1342 722.1L1341 721.8L1340 721.7L1339 722.5L1338 722.2L1337 722.2L1336 721.7L1335 721.9L1334 722.2L1333 722.4L1332 721.9L1331 722.1L1330 721.9L1329 722.3L1328 721.9L1327 722.1L1326 721.9L1325 722.1L1324 722.2L1323 721.8L1322 721.8L1321 722.0L1320 722.3L1319 722.2L1318 721.8L1317 722.1L1316 721.8L1315 723.1L1314 721.6L1313 721.7L1312 722.7L1311 721.6L1310 722.0L1309 721.8L1308 721.8L1307 722.6L1306 722.5L1305 722.1L1304 721.8L1303 721.7L1302 721.8L1301 721.6L1300 722.8L1299 722.2L1298 722.1L1297 722.1L1296 722.2L1295 723.0L1294 721.9L1293 722.0L1292 722.3L1291 722.9L1290 722.4L1289 721.8L1288 722.2L1287 722.2L1286 722.1L1285 722.6L1284 721.6L1283 722.0L1282 721.8L1281 721.7L1280 722.1L1279 721.7L1278 722.2L1277 722.3L1276 721.9L1275 722.0L1274 722.6L1273 721.7L1272 721.7L1271 721.7L1270 722.1L1269 722.0L1268 722.1L1267 722.6L1266 721.8L1265 722.3L1264 722.5L1263 721.9L1262 722.0L1261 722.5L1260 722.2L1259 722.1L1258 722.4L1257 722.3L1256 721.6L1255 721.7L1254 722.4L1253 721.9L1252 721.6L1251 721.7L1250 721.9L1249 722.2L1248 722.2L1247 721.7L1246 721.8L1245 722.0L1244 722.2L1243 721.8L1242 722.2L1241 722.3L1240 722.6L1239 721.6L1238 723.9L1237 722.2L1236 722.3L1235 722.0L1234 721.7L1233 721.8L1232 722.5L1231 722.1L1230 721.7L1229 721.9L1228 722.2L1227 722.4L1226 722.0L1225 722.3L1224 721.8L1223 722.0L1222 721.8L1221 721.6L1220 722.2L1219 721.9L1218 721.8L1217 721.9L1216 721.9L1215 722.2L1214 721.6L1213 721.7L1212 722.2L1211 722.0L1210 721.7L1209 721.9L1208 721.9L1207 722.3L1206 721.9L1205 721.8L1204 722.6L1203 721.6L1202 722.0L1201 722.0L1200 722.5L1199 722.3L1198 722.3L1197 722.3L1196 721.8L1195 722.3L1194 722.1L1193 722.1L1192 722.2L1191 721.8L1190 721.9L1189 721.9L1188 722.0L1187 721.8L1186 722.0L1185 721.9L1184 722.5L1183 722.1L1182 721.7L1181 722.2L1180 721.7L1179 721.7L1178 721.7L1177 721.8L1176 722.3L1175 722.0L1174 722.0L1173 721.7L1172 722.1L1171 722.4L1170 722.2L1169 721.8L1168 721.7L1167 722.5L1166 721.8L1165 721.6L1164 722.4L1163 721.8L1162 722.4L1161 721.9L1160 722.0L1159 721.9L1158 721.6L1157 721.8L1156 721.7L1155 722.0L1154 721.7L1153 722.5L1152 721.8L1151 722.2L1150 721.9L1149 722.2L1148 721.7L1147 721.8L1146 722.1L1145 722.0L1144 721.7L1143 722.1L1142 721.8L1141 721.8L1140 722.2L1139 721.7L1138 721.7L1137 721.8L1136 722.1L1135 721.7L1134 721.8L1133 722.1L1132 721.8L1131 722.6L1130 721.7L1129 721.8L1128 721.6L1127 721.7L1126 721.8L1125 721.9L1124 722.2L1123 721.9L1122 722.3L1121 722.4L1120 722.0L1119 722.0L1118 721.7L1117 722.5L1116 722.4L1115 721.7L1114 721.9L1113 721.7L1112 722.7L1111 721.6L1110 722.6L1109 721.8L1108 722.4L1107 722.1L1106 721.7L1105 721.7L1104 722.3L1103 721.8L1102 721.6L1101 721.9L1100 722.1L1099 722.1L1098 722.8L1097 722.1L1096 722.1L1095 721.6L1094 722.3L1093 722.2L1092 721.8L1091 722.3L1090 722.3L1089 722.2L1088 722.3L1087 722.0L1086 721.8L1085 722.1L1084 722.4L1083 721.9L1082 721.6L1081 722.4L1080 721.9L1079 722.3L1078 722.4L1077 722.0L1076 722.0L1075 721.7L1074 722.4L1073 721.6L1072 722.3L1071 722.0L1070 721.8L1069 721.8L1068 722.0L1067 721.8L1066 723.1L1065 721.9L1064 721.8L1063 722.5L1062 721.8L1061 722.3L1060 722.0L1059 721.6L1058 722.3L1057 721.6L1056 722.3L1055 721.9L1054 722.2L1053 722.6L1052 723.2L1051 722.1L1050 722.2L1049 721.9L1048 722.0L1047 722.0L1046 721.9L1045 722.5L1044 721.8L1043 721.9L1042 721.8L1041 721.8L1040 721.9L1039 722.2L1038 722.2L1037 721.7L1036 722.4L1035 722.3L1034 721.6L1033 722.1L1032 722.9L1031 721.8L1030 721.8L1029 722.3L1028 722.1L1027 721.7L1026 722.1L1025 722.4L1024 722.0L1023 721.7L1022 722.2L1021 721.6L1020 721.7L1019 721.9L1018 722.2L1017 721.7L1016 721.8L1015 722.1L1014 722.0L1013 721.8L1012 722.3L1011 721.6L1010 721.6L1009 721.7L1008 722.8L1007 722.0L1006 722.4L1005 721.8L1004 722.3L1003 722.0L1002 722.7L1001 721.8L1000 722.3L999 722.2L998 721.7L997 721.8L996 721.8L995 722.1L994 721.6L993 722.5L992 722.1L991 721.9L990 721.9L989 722.1L988 721.8L987 722.3L986 722.3L985 722.3L984 722.3L983 722.7L982 722.1L981 722.5L980 721.9L979 721.9L978 721.6L977 721.8L976 721.9L975 721.8L974 721.8L973 722.0L972 722.0L971 721.7L970 721.7L969 721.8L968 721.7L967 722.3L966 721.8L965 721.7L964 721.7L963 721.7L962 722.9L961 722.3L960 721.7L959 722.1L958 721.6L957 722.0L956 721.8L955 721.6L954 721.7L953 721.8L952 721.8L951 722.2L950 722.6L949 721.7L948 722.1L947 722.2L946 722.2L945 722.7L944 722.5L943 721.7L942 721.9L941 721.9L940 722.0L939 722.5L938 721.8L937 723.5L936 721.7L935 721.7L934 721.8L933 721.6L932 722.4L931 721.9L930 722.2L929 721.6L928 722.1L927 721.6L926 721.7L925 721.9L924 722.1L923 721.8L922 721.8L921 722.1L920 722.2L919 721.9L918 722.0L917 721.7L916 722.1L915 721.7L914 721.6L913 721.9L912 722.4L911 722.0L910 722.2L909 721.8L908 722.4L907 721.9L906 721.7L905 722.4L904 721.6L903 721.7L902 722.5L901 721.8L900 721.8L899 721.9L898 722.3L897 721.7L896 721.8L895 722.2L894 722.1L893 721.8L892 721.7L891 721.8L890 721.8L889 721.7L888 722.1L887 721.6L886 721.8L885 722.3L884 722.6L883 721.6L882 721.9L881 722.2L880 721.8L879 721.6L878 721.6L877 721.9L876 721.6L875 721.8L874 722.4L873 721.7L872 722.0L871 722.1L870 721.8L869 722.2L868 721.8L867 722.2L866 721.7L865 721.7L864 721.9L863 721.9L862 722.0L861 721.9L860 722.0L859 721.7L858 722.7L857 721.9L856 721.7L855 721.9L854 722.2L853 721.9L852 721.9L851 721.8L850 722.0L849 721.8L848 721.9L847 722.3L846 722.2L845 722.3L844 722.2L843 722.6L842 722.1L841 722.0L840 722.2L839 721.9L838 721.6L837 722.0L836 721.7L835 721.9L834 722.0L833 722.4L832 722.0L831 722.2L830 721.8L829 721.7L828 721.7L827 722.2L826 721.8L825 721.6L824 722.0L823 721.6L822 722.0L821 722.2L820 721.9L819 721.6L818 722.5L817 722.3L816 721.8L815 722.0L814 721.8L813 722.3L812 722.0L811 721.7L810 721.9L809 721.6L808 722.1L807 722.0L806 722.1L805 723.3L804 721.9L803 722.4L802 721.8L801 721.7L800 721.6L799 722.0L798 722.1L797 721.9L796 722.0L795 722.3L794 722.1L793 721.6L792 721.6L791 722.5L790 721.8L789 721.7L788 721.8L787 722.0L786 722.3L785 721.7L784 722.9L783 722.1L782 722.0L781 721.8L780 722.1L779 722.2L778 721.9L777 721.6L776 721.6L775 721.6L774 721.8L773 722.2L772 721.9L771 721.7L770 721.9L769 722.2L768 722.1L767 721.9L766 722.1L765 721.7L764 721.9L763 722.2L762 721.6L761 722.3L760 722.5L759 722.3L758 721.6L757 721.9L756 722.0L755 723.2L754 721.9L753 721.7L752 722.1L751 721.7L750 722.2L749 722.1L748 721.9L747 722.2L746 722.1L745 722.4L744 722.2L743 721.8L742 721.6L741 722.4L740 721.8L739 722.5L738 722.1L737 721.7L736 722.4L735 721.9L734 722.7L733 722.8L732 722.7L731 722.3L730 721.8L729 722.1L728 723.9L727 721.8L726 722.1L725 722.0L724 721.7L723 722.1L722 724.0L721 722.0L720 721.8L719 722.0L718 721.6L717 721.6L716 722.4L715 722.3L714 721.8L713 721.7L712 722.3L711 722.6L710 722.0L709 722.2L708 721.6L707 722.0L706 721.8L705 721.7L704 722.7L703 721.7L702 721.9L701 722.0L700 722.6L699 722.0L698 722.1L697 722.2L696 721.7L695 721.6L694 721.7L693 722.3L692 721.6L691 721.9L690 721.9L689 722.0L688 721.7L687 721.8L686 722.8L685 721.7L684 722.8L683 721.7L682 722.1L681 722.3L680 722.2L679 722.0L678 721.6L677 721.9L676 721.6L675 722.2L674 721.7L673 722.7L672 721.6L671 721.9L670 721.9L669 722.4L668 722.0L667 721.8L666 722.0L665 721.9L664 721.9L663 721.8L662 721.7L661 721.6L660 722.1L659 722.3L658 722.2L657 721.7L656 721.9L655 721.8L654 721.9L653 721.9L652 722.6L651 721.6L650 722.2L649 721.7L648 722.4L647 722.3L646 721.7L645 721.8L644 721.9L643 722.0L642 721.8L641 722.2L640 721.9L639 721.7L638 722.1L637 721.6L636 722.2L635 722.6L634 722.0L633 721.8L632 722.5L631 722.2L630 721.9L629 722.2L628 722.1L627 722.0L626 722.2L625 721.8L624 721.8L623 722.1L622 721.6L621 721.7L620 721.9L619 722.1L618 722.2L617 721.9L616 722.5L615 721.6L614 721.7L613 722.7L612 721.9L611 721.6L610 721.8L609 722.0L608 722.3L607 722.3L606 721.6L605 722.4L604 721.6L603 722.0L602 721.7L601 721.8L600 721.7L599 721.7L598 722.3L597 721.8L596 722.8L595 722.3L594 721.8L593 722.1L592 722.1L591 722.0L590 721.7L589 721.6L588 721.7L587 721.8L586 722.2L585 722.1L584 721.8L583 721.8L582 721.6L581 721.7L580 722.0L579 721.9L578 721.9L577 721.6L576 721.7L575 723.2L574 721.6L573 721.7L572 722.1L571 721.8L570 721.9L569 722.0L568 721.7L567 722.0L566 722.0L565 721.9L564 722.3L563 721.7L562 721.7L561 722.1L560 722.3L559 721.9L558 721.6L557 722.9L556 721.8L555 722.2L554 721.9L553 722.0L552 722.3L551 722.2L550 722.2L549 722.1L548 721.9L547 722.1L546 722.0L545 721.7L544 721.6L543 722.2L542 722.2L541 721.8L540 721.9L539 721.7L538 722.4L537 722.2L536 721.6L535 721.9L534 722.1L533 721.8L532 721.6L531 722.4L530 722.0L529 722.0L528 721.8L527 721.7L526 721.8L525 721.8L524 722.4L523 722.2L522 722.0L521 722.6L520 722.0L519 721.8L518 722.8L517 722.1L516 721.9L515 721.8L514 722.5L513 722.2L512 722.5L511 722.2L510 721.8L509 721.9L508 721.8L507 721.7L506 722.3L505 721.9L504 723.1L503 721.8L502 721.9L501 721.8L500 722.0L499 721.9L498 722.8L497 722.2L496 721.9L495 721.6L494 722.5L493 722.0L492 722.9L491 722.0L490 722.3L489 722.1L488 722.0L487 722.3L486 721.9L485 722.5L484 721.9L483 721.8L482 721.7L481 721.8L480 722.0L479 721.6L478 722.3L477 722.4L476 722.5L475 723.2L474 721.9L473 722.3L472 721.6L471 721.7L470 721.7L469 722.5L468 722.5L467 721.8L466 721.8L465 721.8L464 722.6L463 721.8L462 722.1L461 722.3L460 721.8L459 722.7L458 721.9L457 721.6L456 722.1L455 722.0L454 721.7L453 722.0L452 722.0L451 721.9L450 722.2L449 721.8L448 722.0L447 721.7L446 721.7L445 721.7L444 721.7L443 722.1L442 721.6L441 722.5L440 721.9L439 722.5L438 722.5L437 721.9L436 722.1L435 721.8L434 722.1L433 721.8L432 722.0L431 721.8L430 722.0L429 721.6L428 721.7L427 721.9L426 722.1L425 722.2L424 722.9L423 721.7L422 721.6L421 721.8L420 722.1L419 722.5L418 721.8L417 722.2L416 721.9L415 722.3L414 722.3L413 721.7L412 721.9L411 721.8L410 722.2L409 722.4L408 721.7L407 722.1L406 722.3L405 722.0L404 721.9L403 722.4L402 722.0L401 721.6L400 721.7L399 722.2L398 722.0L397 721.7L396 721.7L395 722.2L394 721.9L393 721.8L392 721.7L391 721.9L390 721.7L389 722.0L388 721.9L387 721.7L386 722.3L385 722.0L384 722.2L383 722.0L382 721.9L381 721.8L380 722.1L379 721.9L378 721.7L377 721.9L376 722.2L375 722.2L374 721.7L373 721.8L372 721.9L371 722.3L370 722.1L369 722.1L368 722.0L367 722.1L366 721.6L365 722.1L364 722.2L363 721.7L362 722.3L361 722.1L360 721.6L359 721.8L358 722.0L357 722.2L356 721.9L355 722.4L354 722.0L353 721.8L352 721.8L351 722.0L350 722.6L349 722.5L348 722.4L347 722.7L346 721.7L345 721.8L344 721.7L343 721.6L342 721.8L341 722.0L340 722.5L339 721.8L338 721.7L337 722.2L336 722.6L335 721.9L334 721.7L333 721.8L332 721.9L331 722.0L330 721.8L329 721.7L328 722.0L327 722.1L326 722.3L325 724.2L324 721.9L323 721.7L322 721.8L321 722.2L320 721.8L319 722.1L318 721.9L317 722.0L316 721.8L315 721.8L314 721.7L313 722.0L312 721.7L311 722.7L310 722.3L309 722.5L308 722.0L307 722.0L306 724.0L305 721.7L304 722.0L303 722.9L302 721.9L301 721.9L300 722.0L299 722.2L298 721.8L297 721.9L296 721.6L295 721.8L294 721.7L293 721.9L292 721.8L291 721.9L290 722.6L289 721.9L288 722.8L287 721.7L286 721.8L285 721.8L284 722.0L283 721.9L282 721.7L281 721.8L280 722.4L279 722.0L278 721.7L277 721.9L276 721.8L275 722.4L274 722.2L273 721.6L272 721.8L271 722.4L270 721.9L269 721.9L268 722.0L267 722.7L266 722.1L265 723.0L264 722.3L263 722.0L262 722.2L261 722.3L260 721.6L259 721.7L258 722.0L257 722.3L256 722.1L255 721.8L254 722.0L253 721.7L252 722.0L251 722.4L250 722.7L249 721.7L248 721.7L247 721.6L246 721.9L245 722.4L244 721.9L243 721.8L242 722.5L241 722.0L240 722.2L239 722.7L238 722.8L237 721.8L236 721.9L235 721.7L234 722.2L233 722.2L232 722.4L231 722.1L230 721.9L229 721.7L228 722.1L227 722.0L226 721.7L225 722.0L224 721.8L223 721.9L222 721.7L221 722.1L220 722.5L219 722.0L218 722.8L217 721.9L216 721.7L215 722.4L214 722.2L213 721.8L212 722.4L211 721.8L210 722.2L209 721.9L208 721.8L207 721.9L206 721.9L205 722.4L204 722.3L203 721.8L202 721.8L201 721.6L200 722.0L199 722.3L198 722.1L197 721.8L196 722.0L195 722.9L194 722.1L193 722.0L192 721.9L191 721.8L190 721.8L189 721.8L188 721.6L187 721.7L186 723.0L185 721.7L184 722.2L183 721.8L182 721.7L181 721.7L180 722.0L179 722.1L178 722.3L177 722.2L176 721.8L175 721.7L174 722.1L173 721.8L172 722.2L171 722.1L170 721.9L169 721.9L168 721.9L167 721.7L166 722.5L165 721.9L164 722.6L163 721.7L162 721.6L161 721.8L160 722.0L159 722.2L158 722.0L157 722.1L156 722.3L155 722.1L154 721.7L153 722.5L152 722.5L151 722.0L150 722.0L149 722.1L148 721.9L147 721.7L146 721.8L145 723.3L144 722.6L143 722.4L142 723.7L141 722.2L140 722.3L139 721.7L138 722.4L137 721.6L136 721.8L135 721.6L134 721.7L133 722.0L132 721.9L131 722.0L130 721.9L129 722.0L128 721.7L127 721.7L126 722.0L125 722.6L124 721.9L123 721.7L122 722.4L121 722.0L120 722.6L119 721.9L118 722.0L117 722.3L116 722.1L115 722.3L114 721.8L113 723.1L112 722.3L111 721.6L110 721.9L109 721.8L108 722.7L107 722.3L106 721.9L105 722.6L104 722.0L103 721.8L102 721.8L101 722.0L100 721.7L99 721.7L98 722.2L97 722.8L96 722.1L95 721.7L94 722.1L93 722.8L92 722.2L91 721.7L90 722.4L89 721.9L88 721.6L87 723.1L86 721.7L85 722.6L84 722.2L83 722.0L82 722.2L81 722.2L80 721.6L79 722.4L78 722.0L77 722.3L76 721.8L75 722.7L74 722.2L73 722.6L72 721.7L71 722.1L70 721.8L69 722.3L68 722.5L67 721.8L66 721.9L65 721.6L64 722.5L63 721.9L62 722.1L61 722.0L60 721.7L59 721.9L58 721.6L57 722.6L56 721.8L55 722.5L54 721.7L53 722.3L52 722.6L51 721.6L50 722.0L49 722.4L48 721.8L47 721.7L46 721.6L45 721.6L44 721.8L43 721.7L42 722.0L41 722.1L40 721.8L39 722.1L38 722.2L37 721.9L36 721.8L35 721.9L34 722.0L33 721.8L32 722.4L31 721.9L30 721.9L29 722.2L28 721.8L27 721.7L26 721.7L25 722.2L24 721.8L23 722.3L22 722.4L21 722.7L20 721.9L19 722.3L18 721.7L17 721.6L16 721.7L15 722.7L14 722.5L13 722.5L12 721.6L11 721.9L10 721.8L9 722.5L8 722.3L7 721.8L6 721.9L5 721.9L4 722.5L3 721.7Z" fill="#ea375d"/>
<path d="M440.5 709V727M877.5 712V726M1314.5 711V727" stroke="#d8244a" stroke-width="1" fill="none"/>
<path d="M3.5 719V738" stroke="#e0264e" stroke-width="1.4" fill="none"/>
</g><!-- overview bar -->
<g fill="none">
<path d="M593 36.5H587V53.5H593" stroke="#e8e8e8" stroke-width="1"/><path d="M587 36V54" stroke="#e8e8e8" stroke-width="2"/>
<path d="M1161 36.5H1167V53.5H1161" stroke="#e8e8e8" stroke-width="1"/><path d="M1167 36V54" stroke="#e8e8e8" stroke-width="2"/>
<path d="M588 45H1166" stroke="#b9b9b9" stroke-width="2"/>
<path d="M800 34V56M1002 34V56" stroke="#cfcfcf" stroke-width="2" stroke-dasharray="5 2.5"/>
</g>
<polygon points="869,33 885,33 877,38" fill="#f0901e"/>
<path d="M871 40.5h12v11h-4l-2 3.6l-2-3.6h-4z" fill="#1a1208" stroke="#c27a22" stroke-width="1.6"/>
<path d="M873.6 43.3h6.8M877 43.3v6.2" stroke="#f5a030" stroke-width="1.8" fill="none"/>
<!-- trigger marker in plot -->
<polygon points="866.5,57 887.5,57 877,67" fill="#f5921f"/>
<path d="M868 68h18v19.5h-6l-3 5l-3-5h-6z" fill="#000" stroke="#f5921f" stroke-width="2"/>
<path d="M872.5 73h9M877 73v10" stroke="#f5921f" stroke-width="2.2" fill="none"/>
<!-- cursor lines -->
<path d="M644.5 77V993M1248.5 77V993" stroke="#fff" stroke-width="1" fill="none"/><path d="M644.5 57V77M1248.5 57V77" stroke="#777" stroke-width="1" fill="none"/>
<!-- red dashed readout line -->
<path d="M646 107.5H1247" stroke="#f00" stroke-width="1.2" stroke-dasharray="13.5 6.59" stroke-dashoffset="1.93" fill="none"/>
<!-- cursor B badge -->
<path d="M628 57h16v20h-16a4 4 0 0 1 -4 -4v-12a4 4 0 0 1 4 -4z" fill="#333"/>
<circle cx="633.6" cy="66.4" r="8.4" fill="#2a8ad6"/>
<text x="633.6" y="71" font-size="13.5" fill="#fff" text-anchor="middle">B</text>
<rect x="646" y="57" width="26" height="20" rx="4" fill="#d9cd33"/>
<text x="659" y="71.6" font-size="14.6" fill="#1c1c10" text-anchor="middle">C1</text>
<!-- cursor A badge -->
<path d="M1249 57h16a4 4 0 0 1 4 4v12a4 4 0 0 1 -4 4h-16z" fill="#333"/>
<circle cx="1258.2" cy="66.4" r="8.4" fill="#2a8ad6"/>
<text x="1258.2" y="71" font-size="13.5" fill="#fff" text-anchor="middle">A</text>
<rect x="1222" y="57" width="26" height="20" rx="4" fill="#d9cd33"/>
<text x="1235" y="71.6" font-size="14.6" fill="#1c1c10" text-anchor="middle">C1</text>
<!-- crossing markers -->
<g stroke="#cfcfc0" stroke-width="1.2" fill="none">
<circle cx="644.5" cy="468.5" r="4.3"/><path d="M640.1 464.1l-3-3M648.9 464.1l3-3M640.1 472.9l-3 3M648.9 472.9l3 3"/>
<circle cx="1248.5" cy="648.5" r="4.3"/><path d="M1244.1 644.1l-3-3M1252.9 644.1l3-3M1244.1 652.9l-3 3M1252.9 652.9l3 3"/>
</g>
<!-- cyan trigger-level arrow -->
<path d="M1730 633.3L1742 623V631H1751V635.6H1742V643.5Z" fill="#1fc6d2"/>
<!-- zoom icon -->
<path d="M1710 64H1741a3 3 0 0 1 3 3V98Z" fill="#4f4f4f"/>
<circle cx="1737" cy="70.6" r="4.1" fill="none" stroke="#a8a8a8" stroke-width="1.5"/>
<path d="M1733 75L1728.6 79.4" stroke="#a8a8a8" stroke-width="3.2" stroke-linecap="round" fill="none"/>
<!-- channel badges -->
<path d="M8.5 606H30L42 619.5L30 633H8.5A2.5 2.5 0 0 1 6 630.5V608.5A2.5 2.5 0 0 1 8.5 606Z" fill="#fff23a"/>
<text x="23.8" y="623.4" font-size="10.5" font-weight="bold" fill="#222" text-anchor="middle" letter-spacing=".6">C 1</text>
<path d="M9 798.6H30L41.6 811L30 823.4H9A2.4 2.4 0 0 1 6.6 821V801A2.4 2.4 0 0 1 9 798.6Z" fill="#1c080c" stroke="#e8405f" stroke-width="1.3"/>
<text x="23.8" y="814.8" font-size="10.5" font-weight="bold" fill="#fff" text-anchor="middle" letter-spacing=".6">C 3</text>
<!-- labels -->
<text x="8" y="445.3" font-size="18.5" fill="#22c9d6" textLength="37" lengthAdjust="spacingAndGlyphs">VGB</text>
<text x="8" y="677.4" font-size="18.5" fill="#fff23a">VGA</text>
<text x="16.5" y="782.4" font-size="19" fill="#f0406a">vdd</text>
</svg>
<!-- readouts -->
<div class="ro" style="left:646px;top:85px;width:139px;height:44px"><span style="left:4px;top:2px">t: -53.232 µs</span><span style="left:4px;top:20px">v: 16.201 V</span></div>
<div class="ro" style="left:816px;top:85px;width:260px;height:48px"><span style="left:4px;top:4px">Δt: 138.057 µs</span><span style="left:128px;top:4px">1/Δt: 7.24 kHz</span><span style="left:4px;top:24px">Δv: 19.245 V</span><span style="left:111px;top:24px">Δv/Δt: 139.40 kV/s</span></div>
<div class="ro" style="left:1108px;top:85px;width:139px;height:44px"><span style="left:4px;top:2px">t: 84.825 µs</span><span style="left:4px;top:20px">v: -3.044 V</span></div>
<!-- bottom bar -->
<div class="chb" style="left:3px"><div class="h" style="background:#fff23a;color:#1a1a00"><span>Ch 1</span></div><div class="hl"></div>
<div class="l" style="top:20px">10 V/div</div><div class="l" style="top:58px;letter-spacing:-.2px">1 GHz</div>
<svg class="abs" style="left:4.8px;top:39.3px" width="17" height="13.6" viewBox="0 0 20 16"><use href="#probe"/></svg></div>
<div class="chb" style="left:98px"><div class="h" style="background:#1f4246;color:#27cfdc"><span>Ch 2</span></div><div class="hl"></div>
<div class="l" style="top:20px">10 V/div</div><div class="l" style="top:58px;letter-spacing:-.2px">1 GHz</div>
<svg class="abs" style="left:4.8px;top:39.3px" width="17" height="13.6" viewBox="0 0 20 16"><use href="#probe"/></svg></div>
<div class="chb" style="left:193px"><div class="h" style="background:#46242b;color:#f4f4f4"><span>Ch 3</span></div><div class="hl"></div>
<div class="l" style="top:20px">20 V/div</div><div class="l" style="top:58px;letter-spacing:-.2px">1 GHz</div>
<svg class="abs" style="left:4.8px;top:39.3px" width="17" height="13.6" viewBox="0 0 20 16"><use href="#probe"/></svg></div>
<div class="chb dim" style="left:288px"><div class="h" style="background:#5d8a2f;color:#24340f"><span>Ch 4</span></div><div class="hl"></div>
<div class="l" style="top:20px">10 V/div</div><div class="l" style="top:39px">1 MΩ</div><div class="l" style="top:58px;letter-spacing:.13px">500 MHz</div>
<div class="l" style="left:71.6px;top:53.5px;font-size:10px;font-weight:bold">B<span style="font-size:7.5px;position:relative;top:3px;left:-.5px">W</span></div></div>
<div class="chb dim" style="left:383px"><div class="h" style="background:#8f5e2c;color:#33220f"><span style="transform:scaleX(.96)">Math 1</span></div><div class="hl"></div>
<div class="l" style="top:20px">1</div></div>
<svg width="0" height="0" style="position:absolute"><defs><g id="probe">
<path d="M3.3 9.2 C3.2 4.2 6 1.6 9 1.6 C12.6 1.6 15.6 4.4 15.8 9.4" fill="none" stroke="#2a2a2a" stroke-width="1.5"/>
<circle cx="9.2" cy="5.4" r="2.7" fill="none" stroke="#2a2a2a" stroke-width="1.5"/>
<rect x="1.6" y="8.6" width="2.8" height="6" rx="1.3" fill="#ddd" stroke="#333" stroke-width="1.1"/>
<rect x="13.4" y="9.2" width="4.6" height="5.8" rx=".8" fill="#eee" stroke="#444" stroke-width="1.1"/>
</g></defs></svg>

<div class="vsep" style="left:1118px"></div>
<div class="addb" style="left:1129px"><i style="background:#5b2a72"></i>Add<br>New<br>Math</div>
<div class="addb" style="left:1174px"><i style="background:#c4c4c4"></i>Add<br>New<br><span style="letter-spacing:-1px;margin-left:-1px">Ref</span></div>
<div class="addb" style="left:1219px"><i style="background:#c766ea"></i>Add<br>New<br><span style="letter-spacing:-.9px;margin-left:-1px">Bus</span></div>
<div class="vsep" style="left:1270px"></div>

<div class="sb" style="left:1281px;width:198px"><div class="h"><span>Horizontal</span></div>
<div class="l" style="left:4px;top:18.8px">40 µs/div</div><div class="l" style="left:110px;top:18.8px">400 µs</div>
<div class="l" style="left:4px;top:37.8px;letter-spacing:-.45px">SR: 3.125 GS/s</div><div class="l" style="left:110px;top:37.8px">320 ps/pt</div>
<div class="l" style="left:4px;top:56.8px;letter-spacing:-.1px">RL: 1.25 Mpts</div><div class="l" style="left:124px;top:56.8px">50%</div>
<svg class="abs" style="left:109px;top:59px" width="11" height="14" viewBox="0 0 11 14"><path d="M1.5 1h8v8h-2.5l-1.5 3l-1.5-3h-2.5z" fill="#000" stroke="#f08a18" stroke-width="1.5"/><path d="M3.2 3.4h4.6M5.5 3.4v4.6" stroke="#fff" stroke-width="1.5" fill="none"/></svg></div>

<div class="sb" style="left:1486px;width:159px"><div class="h"><span style="letter-spacing:.4px">Trigger</span></div>
<div class="abs" style="left:4px;top:22px;width:30px;height:15px;border-radius:5px;background:#1fc8d6;border:1px solid #0e3e44;font-size:14px;line-height:13px;text-align:center;color:#111">2</div>
<svg class="abs" style="left:44px;top:22px" width="18" height="14" viewBox="0 0 18 14"><path d="M0 11.3h5l6.4-9.6h4.8" fill="none" stroke="#3c3c80" stroke-width="1"/></svg>
<div class="l" style="left:70px;top:18.8px">-1.6 V</div></div>

<div class="sb" style="left:1651px;width:149px"><div class="h"><span>Acquisition</span></div>
<div class="l" style="left:4px;top:18.8px">Auto,</div><div class="l" style="left:85px;top:18.8px">Analyze</div>
<div class="l" style="left:4px;top:37.8px;letter-spacing:-.12px">Sample: 12 bits</div>
<div class="l" style="left:4px;top:56.8px">37 Acqs</div></div>
<div class="vsep" style="left:1811px"></div>
<div class="abs" style="left:1823px;top:999px;width:89px;height:36px;border-radius:5px;background:#10d408;border:1px solid #5a8a5a;font-weight:bold;font-size:14px;line-height:31.5px;text-align:center;color:#fff">Triggered</div>
<div class="abs" style="left:1823px;top:1040px;width:89px;height:37px;border-radius:4px;background:#c9c9c9;color:#1c1c1c;font-size:15px;line-height:17px;text-align:center;padding-top:.6px">25 Apr 2023<br>9:27:02 PM</div>
</body></html>
